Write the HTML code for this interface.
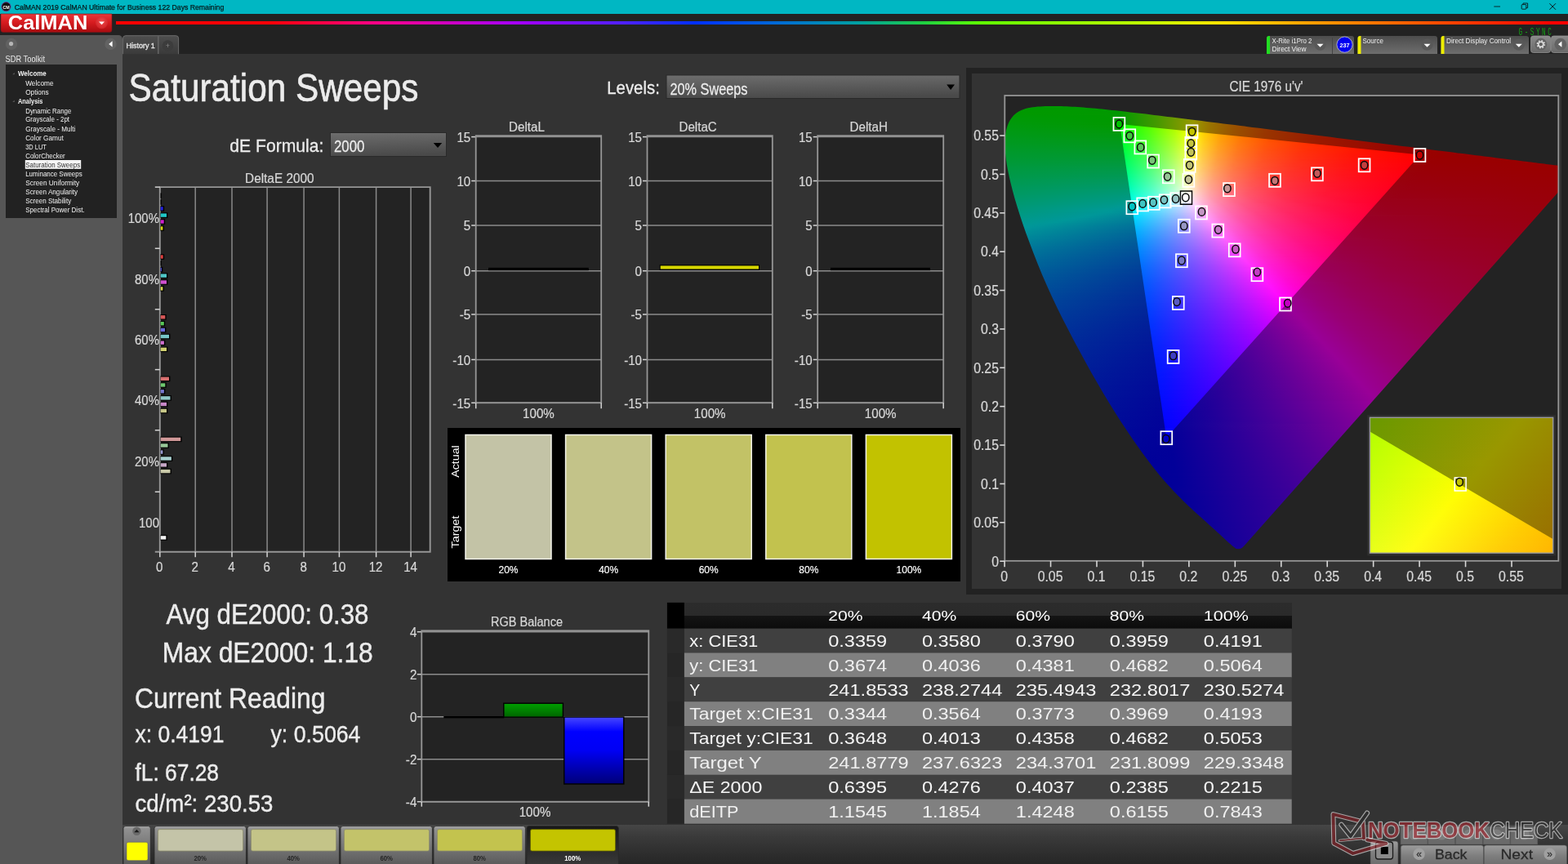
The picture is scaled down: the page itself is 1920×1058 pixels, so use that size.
<!DOCTYPE html>
<html lang="en"><head><meta charset="utf-8"><title>CalMAN 2019 - Saturation Sweeps</title>
<style>
html,body{margin:0;padding:0;background:#333;}
body{width:1920px;height:1058px;position:relative;overflow:hidden;font-family:"Liberation Sans",sans-serif;}
body>div{position:absolute;box-sizing:border-box;}
svg.ov{position:absolute;left:0;top:0;will-change:transform;font-family:"Liberation Sans",sans-serif;}
.cie{position:absolute;overflow:hidden;}
.cie i{display:block;height:2px;width:100%;}

</style></head>
<body>
<div style="left:0px;top:0px;width:1920px;height:17px;background:#00b7c3;"></div>
<div style="left:0px;top:17px;width:1920px;height:49px;background:#222;"></div>
<div style="left:150px;top:66px;width:1770px;height:944px;background:#333;"></div>
<div style="left:142.2px;top:26.2px;width:1790px;height:4.3px;background:linear-gradient(90deg,#ff0000 0,#ff0008 190px,#ff0080 310px,#a000ff 500px,#5020ff 620px,#0030ff 710px,#0070d0 820px,#00a0a0 910px,#20d040 990px,#60ff00 1060px,#c0ff00 1260px,#ffe000 1360px,#ffa000 1460px,#ff5000 1610px,#ff0000 1760px);"></div>
<div style="left:0;top:43px;width:150px;height:1015px;background:#565656;border-radius:0 5px 0 0;"></div>
<div style="left:1183px;top:83px;width:737px;height:645px;background:#222;"></div>
<div style="left:1190px;top:90px;width:721.5px;height:631.2px;background:#333;"></div>
<div style="left:1230.3px;top:117px;width:678px;height:569.8px;background:#232323;"></div>
<div class="cie" style="left:1230.3px;top:117px;width:678px;height:570px;clip-path:polygon(292.3px 552.3px,291.5px 553.1px,290.7px 553.8px,289.8px 554.3px,288.9px 554.7px,288.0px 555.0px,287.0px 555.1px,285.9px 555.2px,284.8px 555.1px,283.3px 554.9px,281.5px 553.6px,279.4px 551.9px,277.7px 550.5px,275.8px 548.8px,273.6px 546.9px,271.2px 544.7px,268.5px 542.2px,265.6px 539.5px,264.0px 538.0px,262.4px 536.5px,260.6px 534.9px,258.8px 533.3px,256.9px 531.6px,254.9px 529.7px,252.7px 527.8px,250.4px 525.7px,248.1px 523.6px,245.6px 521.3px,243.0px 519.0px,240.3px 516.6px,237.5px 514.1px,234.6px 511.5px,231.6px 508.7px,228.5px 505.8px,225.2px 502.7px,221.8px 499.4px,218.2px 496.0px,214.6px 492.3px,210.8px 488.5px,206.9px 484.4px,202.9px 480.1px,198.7px 475.5px,194.3px 470.5px,189.6px 464.9px,184.6px 458.8px,179.3px 451.9px,173.6px 444.5px,167.7px 436.4px,161.5px 427.8px,155.2px 418.7px,148.7px 409.1px,142.0px 399.0px,135.2px 388.3px,128.2px 377.1px,121.1px 365.3px,114.0px 353.1px,106.7px 340.4px,99.5px 327.4px,92.2px 314.1px,85.0px 300.7px,77.9px 287.1px,70.9px 273.4px,64.1px 259.7px,57.6px 246.0px,51.4px 232.3px,45.6px 219.0px,40.2px 205.8px,35.2px 193.0px,30.5px 180.5px,26.0px 168.5px,22.0px 156.9px,18.3px 145.8px,15.0px 135.2px,12.0px 125.3px,9.5px 116.0px,7.3px 107.2px,5.4px 99.0px,3.8px 91.4px,2.5px 84.2px,1.5px 77.5px,0.8px 71.4px,0.3px 65.7px,0.2px 60.4px,0.2px 55.5px,0.5px 50.9px,1.0px 46.6px,1.7px 42.6px,2.7px 38.9px,3.9px 35.5px,5.3px 32.3px,6.9px 29.5px,8.7px 26.9px,10.7px 24.6px,12.9px 22.6px,15.2px 20.8px,17.6px 19.3px,20.2px 18.0px,22.8px 16.9px,25.5px 16.0px,28.4px 15.2px,31.3px 14.7px,34.2px 14.2px,37.3px 13.9px,40.3px 13.6px,43.5px 13.4px,46.7px 13.2px,49.9px 13.1px,53.1px 13.0px,56.3px 13.0px,59.5px 13.0px,62.7px 13.0px,65.9px 13.0px,69.2px 13.1px,72.5px 13.2px,75.8px 13.3px,79.1px 13.5px,82.5px 13.7px,85.9px 13.8px,89.3px 14.1px,92.8px 14.3px,96.4px 14.6px,100.0px 14.9px,103.7px 15.2px,107.4px 15.5px,111.2px 15.8px,115.1px 16.2px,119.1px 16.6px,123.1px 17.0px,127.2px 17.4px,131.3px 17.9px,135.6px 18.3px,139.9px 18.8px,144.3px 19.3px,148.8px 19.8px,153.4px 20.4px,158.1px 20.9px,162.9px 21.5px,167.8px 22.0px,172.8px 22.6px,177.9px 23.3px,183.1px 23.9px,188.4px 24.5px,193.8px 25.2px,199.3px 25.9px,204.9px 26.5px,210.7px 27.3px,216.6px 28.0px,222.5px 28.7px,228.6px 29.5px,234.8px 30.3px,241.2px 31.0px,247.6px 31.9px,254.2px 32.7px,260.9px 33.5px,267.7px 34.4px,274.6px 35.2px,281.7px 36.1px,288.8px 37.0px,296.1px 37.9px,303.5px 38.9px,311.0px 39.8px,318.6px 40.8px,326.2px 41.7px,334.0px 42.7px,341.9px 43.7px,349.8px 44.7px,357.9px 45.7px,366.0px 46.7px,374.2px 47.7px,382.4px 48.8px,390.7px 49.8px,399.0px 50.8px,407.3px 51.9px,415.5px 52.9px,423.6px 53.9px,431.6px 54.9px,439.6px 55.9px,447.6px 56.9px,455.5px 57.9px,463.4px 58.9px,471.3px 59.9px,479.1px 60.9px,486.8px 61.9px,494.4px 62.8px,501.7px 63.7px,508.9px 64.6px,516.0px 65.5px,522.8px 66.4px,529.5px 67.2px,536.1px 68.0px,542.5px 68.8px,548.7px 69.6px,554.8px 70.4px,560.7px 71.1px,566.4px 71.8px,571.8px 72.5px,577.2px 73.2px,582.3px 73.8px,587.2px 74.4px,592.0px 75.0px,596.6px 75.6px,601.0px 76.2px,605.3px 76.7px,609.5px 77.2px,613.5px 77.7px,617.3px 78.2px,621.0px 78.7px,624.6px 79.1px,628.2px 79.6px,631.6px 80.0px,635.0px 80.4px,638.2px 80.8px,641.4px 81.2px,644.4px 81.6px,647.4px 82.0px,650.2px 82.3px,652.9px 82.7px,655.6px 83.0px,658.1px 83.3px,660.6px 83.6px,662.9px 83.9px,665.2px 84.2px,667.3px 84.5px,669.4px 84.7px,673.0px 85.2px,676.3px 85.6px,679.3px 86.0px,682.0px 86.3px,684.5px 86.6px,686.7px 86.9px,689.5px 87.3px,691.6px 87.5px,693.9px 87.8px,696.0px 88.1px,698.1px 88.4px,700.2px 88.6px,702.2px 88.9px,703.7px 89.1px)"><i></i><i></i><i></i><i></i><i></i><i></i><i style="background:linear-gradient(90deg,#090 33.7px,#090 90.7px)"></i><i style="background:linear-gradient(90deg,#090 22.7px,#090 115.7px)"></i><i style="background:linear-gradient(90deg,#090 17.7px,#090 134.7px)"></i><i style="background:linear-gradient(90deg,#090 13.7px,#019900 139.7px,#139900 152.7px)"></i><i style="background:linear-gradient(90deg,#090 10.7px,#019900 139.7px,#2a9900 169.7px)"></i><i style="background:linear-gradient(90deg,#009901 8.7px,#029900 140.7px,#459900 186.7px)"></i><i style="background:linear-gradient(90deg,#009903 6.7px,#090 111.7px,#029900 140.7px,#459900 186.7px,#609900 202.7px)"></i><i style="background:linear-gradient(90deg,#009905 5.7px,#090 102.7px,#019900 140.7px,#439900 185.7px,#819900 219.7px)"></i><i style="background:linear-gradient(90deg,#009907 3.7px,#090 115.7px,#019900 140.7px,#439900 185.7px,#899900 223.7px,#999800 231.7px,#999000 235.7px)"></i><i style="background:linear-gradient(90deg,#009908 2.7px,#090 131.7px,#029900 141.7px,#490 186.7px,#8b9900 224.7px,#999800 231.7px,#997500 251.7px)"></i><i style="background:linear-gradient(90deg,#00990a 1.7px,#019900 141.7px,#490 186.7px,#8c9900 224.7px,#999700 231.7px,#997300 252.7px,#996000 267.7px)"></i><i style="background:linear-gradient(90deg,#00990c 1.7px,#019900 141.7px,#439900 185.7px,#890 222.7px,#999700 231.7px,#997200 252.7px,#995100 282.7px)"></i><i style="background:linear-gradient(90deg,#00990e 0.7px,#029902 142.7px,#490 186.7px,#8a9900 223.7px,#999700 231.7px,#997200 252.7px,#995000 282.7px,#940 298.7px)"></i><i style="background:linear-gradient(90deg,#00990f 0px,#029904 143px,#459900 187px,#8b9900 224px,#999800 231px,#997300 252px,#995200 281px,#993900 315px)"></i><i style="background:linear-gradient(90deg,#091 0px,#029907 143px,#449902 187px,#8b9900 224px,#999700 231px,#997200 252px,#995100 281px,#993400 324px,#993000 331px)"></i><i style="background:linear-gradient(90deg,#009913 0px,#019909 143px,#449904 187px,#8c9900 224px,#999700 231px,#997200 252px,#995100 281px,#930 324px,#992900 347px)"></i><i style="background:linear-gradient(90deg,#009915 0px,#01990b 143px,#439907 186px,#889902 222px,#999701 231px,#997100 252px,#995000 281px,#930 324px,#920 363px)"></i><i style="background:linear-gradient(90deg,#009916 0px,#02990e 144px,#44990a 187px,#8a9905 223px,#999904 230px,#997401 250px,#995300 278px,#993500 319px,#991d00 379px)"></i><i style="background:linear-gradient(90deg,#009918 0px,#019910 144px,#44990c 187px,#8a9908 223px,#999807 230px,#997303 250px,#995200 278px,#993500 319px,#991b00 382px,#991800 395px)"></i><i style="background:linear-gradient(90deg,#00991a 0px,#019912 144px,#44990f 187px,#8b990b 223px,#99980a 230px,#997306 250px,#995202 278px,#993500 319px,#991b00 383px,#991300 411px)"></i><i style="background:linear-gradient(90deg,#00991c 0px,#029915 145px,#449912 187px,#8b990e 223px,#99970d 230px,#997308 250px,#995204 278px,#993400 319px,#991a00 383px,#990f00 427px)"></i><i style="background:linear-gradient(90deg,#00991e 0px,#029917 145px,#449914 187px,#899911 222px,#999710 230px,#99720b 250px,#995106 278px,#993401 319px,#991a00 383px,#990c00 443px)"></i><i style="background:linear-gradient(90deg,#00991f 0px,#01991a 145px,#449917 187px,#899915 222px,#999714 230px,#99720d 250px,#995108 278px,#993303 319px,#991a00 383px,#990900 459px)"></i><i style="background:linear-gradient(90deg,#009921 0px,#01991c 145px,#44991a 187px,#8a9918 222px,#999817 229px,#997310 249px,#99510a 277px,#993404 318px,#991a00 381px,#990600 475px)"></i><i style="background:linear-gradient(90deg,#009923 0px,#02991f 146px,#43991d 187px,#8a991b 222px,#99981a 229px,#997213 249px,#99510c 277px,#993306 318px,#991a01 381px,#990400 486px,#990400 491px)"></i><i style="background:linear-gradient(90deg,#009925 0px,#019921 146px,#439920 187px,#8a991e 222px,#99981d 229px,#997316 248px,#99520e 275px,#993508 315px,#991b02 376px,#990500 478px,#990100 507px)"></i><i style="background:linear-gradient(90deg,#009927 0px,#019924 146px,#439923 187px,#889921 221px,#999721 229px,#997318 248px,#995210 275px,#993409 315px,#991b03 376px,#990500 478px,#900 523px)"></i><i style="background:linear-gradient(90deg,#009929 0px,#029927 147px,#459926 188px,#8b9925 222px,#999724 229px,#99731b 248px,#995112 275px,#99340b 315px,#991a04 376px,#990500 478px,#900 539px)"></i><i style="background:linear-gradient(90deg,#00992b 0px,#029929 147px,#439929 187px,#899928 221px,#999928 228px,#99741e 247px,#995215 274px,#99350d 313px,#991b06 373px,#990500 473px,#900 536px,#900 555px)"></i><i style="background:linear-gradient(90deg,#00992d 0px,#01992c 147px,#43992c 187px,#89992b 221px,#99982b 228px,#997321 247px,#995217 274px,#99340e 313px,#991b07 373px,#990501 473px,#900 534px,#900 571px)"></i><i style="background:linear-gradient(90deg,#00992f 0px,#01992f 147px,#43992f 187px,#89992f 221px,#99982f 228px,#997323 247px,#995219 273px,#993410 312px,#991b08 372px,#990502 472px,#900 533px,#900 587px)"></i><i style="background:linear-gradient(90deg,#009930 0px,#029931 148px,#459932 188px,#8a9932 221px,#999732 228px,#997226 247px,#99521b 273px,#993412 312px,#991a09 372px,#990502 472px,#900 532px,#900 602px)"></i><i style="background:linear-gradient(90deg,#009932 0px,#019934 148px,#449935 188px,#999735 228px,#997229 247px,#99511d 273px,#993413 312px,#991a0b 372px,#990403 472px,#990001 532px,#900 618px)"></i><i style="background:linear-gradient(90deg,#009934 0px,#019937 148px,#429938 187px,#889939 220px,#99993a 227px,#99732c 246px,#995220 272px,#993415 310px,#991b0c 369px,#990504 467px,#990002 527px,#900 634px)"></i><i style="background:linear-gradient(90deg,#009936 0px,#02993a 149px,#44993b 188px,#8b993d 221px,#99993d 227px,#99742f 245px,#995323 270px,#993618 307px,#991c0e 364px,#990606 459px,#990002 522px,#900 650px)"></i><i style="background:linear-gradient(90deg,#009938 0px,#01993d 149px,#44993f 188px,#8b9941 221px,#999841 227px,#997432 245px,#995325 270px,#993519 307px,#991c0f 364px,#990606 459px,#990003 521px,#900 666px)"></i><i style="background:linear-gradient(90deg,#00993a 0px,#019940 149px,#449942 188px,#899944 220px,#999844 227px,#997335 245px,#995327 270px,#99351b 307px,#991b10 364px,#990507 459px,#990004 520px,#900 678px)"></i><i style="background:linear-gradient(90deg,#00993d 0.7px,#029943 149.7px,#439945 187.7px,#899948 219.7px,#999848 226.7px,#997338 244.7px,#99522a 269.7px,#99351d 306.7px,#991b12 363.7px,#990508 458.7px,#990005 517.7px,#900 677.7px)"></i><i style="background:linear-gradient(90deg,#00993f 0.7px,#019946 149.7px,#439949 187.7px,#89994c 219.7px,#99984c 226.7px,#99733b 244.7px,#99522c 269.7px,#99341f 306.7px,#991b13 363.7px,#990509 458.7px,#990006 516.7px,#900 677.7px)"></i><i style="background:linear-gradient(90deg,#009941 0.7px,#019949 149.7px,#43994c 187.7px,#89994f 219.7px,#99974f 226.7px,#99723e 244.7px,#99522e 269.7px,#993420 306.7px,#991a14 363.7px,#99050a 458.7px,#990006 515.7px,#900 677.7px)"></i><i style="background:linear-gradient(90deg,#009943 1.7px,#02994c 150.7px,#45994f 188.7px,#8c9953 220.7px,#999753 226.7px,#997241 244.7px,#995131 269.7px,#993422 306.7px,#991a15 363.7px,#99050b 458.7px,#990007 515.7px,#990001 677.7px)"></i><i style="background:linear-gradient(90deg,#009945 1.7px,#01994f 150.7px,#439953 187.7px,#8a9957 219.7px,#999958 225.7px,#997546 242.7px,#995435 266.7px,#993625 301.7px,#991c18 355.7px,#99060d 445.7px,#990008 507.7px,#990001 677.7px)"></i><i style="background:linear-gradient(90deg,#009947 2.7px,#019952 150.7px,#439956 187.7px,#88995b 218.7px,#99985c 225.7px,#997449 242.7px,#995337 266.7px,#993627 301.7px,#991c19 355.7px,#99060e 445.7px,#990009 505.7px,#990002 677.7px)"></i><i style="background:linear-gradient(90deg,#009949 2.7px,#095 150.7px,#43995a 187.7px,#88995f 218.7px,#999860 225.7px,#99744c 242.7px,#995339 266.7px,#993529 301.7px,#991c1b 355.7px,#99060e 445.7px,#99000a 504.7px,#990002 677.7px)"></i><i style="background:linear-gradient(90deg,#00994b 2.7px,#029958 151.7px,#44995e 188.7px,#8b9963 219.7px,#999864 225.7px,#99734f 242.7px,#99523c 266.7px,#99352b 301.7px,#991b1c 355.7px,#99060f 445.7px,#99000b 503.7px,#990003 677.7px)"></i><i style="background:linear-gradient(90deg,#00994e 3.7px,#01995c 151.7px,#449961 188.7px,#8b9967 219.7px,#999767 225.7px,#997352 242.7px,#99523e 266.7px,#99352d 301.7px,#991b1d 355.7px,#990510 445.7px,#99000b 502.7px,#990003 677.7px)"></i><i style="background:linear-gradient(90deg,#009950 3.7px,#01995f 151.7px,#429965 187.7px,#89996b 218.7px,#99996d 224.7px,#997255 242.7px,#995140 266.7px,#99342e 301.7px,#991b1f 355.7px,#990511 445.7px,#99000c 501.7px,#990004 677.7px)"></i><i style="background:linear-gradient(90deg,#009952 4.7px,#029962 152.7px,#449969 188.7px,#899970 218.7px,#999971 224.7px,#997459 241.7px,#995244 265.7px,#993431 300.7px,#991b20 354.7px,#990512 444.7px,#99000d 499.7px,#990004 677.7px)"></i><i style="background:linear-gradient(90deg,#009954 4.7px,#019966 152.7px,#44996d 188.7px,#8a9974 218.7px,#999875 224.7px,#99735c 241.7px,#995246 265.7px,#993432 300.7px,#991a21 354.7px,#990513 444.7px,#99000e 498.7px,#990005 677.7px)"></i><i style="background:linear-gradient(90deg,#009957 5.7px,#019969 152.7px,#449970 188.7px,#8a9978 218.7px,#999879 224.7px,#997360 241.7px,#995149 265.7px,#993434 300.7px,#991a23 354.7px,#990414 444.7px,#99000f 498.7px,#990005 677.7px)"></i><i style="background:linear-gradient(90deg,#009959 5.7px,#00996c 152.7px,#429974 187.7px,#88997c 217.7px,#99977d 224.7px,#997263 241.7px,#99514b 265.7px,#993336 300.7px,#991a24 354.7px,#990415 444.7px,#990010 497.7px,#990006 677.7px)"></i><i style="background:linear-gradient(90deg,#00995b 6.7px,#029970 153.7px,#449978 188.7px,#889981 217.7px,#999781 224.7px,#997266 241.7px,#99504e 265.7px,#993338 300.7px,#991926 354.7px,#990416 444.7px,#990010 497.7px,#990006 677.7px)"></i><i style="background:linear-gradient(90deg,#00995e 6.7px,#009973 150.7px,#049974 155.7px,#48997d 190.7px,#8e9986 219.7px,#999987 223.7px,#99736b 240.7px,#995252 263.7px,#99343b 297.7px,#991b28 349.7px,#990518 436.7px,#990012 489.7px,#990007 677.7px)"></i><i style="background:linear-gradient(90deg,#009960 7.7px,#009976 147.7px,#029977 154.7px,#459981 189.7px,#8c998a 218.7px,#99998c 223.7px,#997470 239.7px,#995355 262.7px,#99353e 295.7px,#991b2a 346.7px,#990619 431.7px,#990013 486.7px,#990007 677.7px)"></i><i style="background:linear-gradient(90deg,#009962 7.7px,#009979 144.7px,#02997b 154.7px,#439984 188.7px,#89998f 217.7px,#999890 223.7px,#997473 239.7px,#995258 262.7px,#993540 295.7px,#991b2c 346.7px,#99051a 431.7px,#990014 485.7px,#990008 677.7px)"></i><i style="background:linear-gradient(90deg,#009965 8.7px,#00997c 142.7px,#01997f 154.7px,#439989 188.7px,#8a9993 217.7px,#999895 223.7px,#997376 239.7px,#99515b 262.7px,#993442 295.7px,#991b2d 346.7px,#99051b 431.7px,#990015 484.7px,#990008 676.7px)"></i><i style="background:linear-gradient(90deg,#009967 8.7px,#00997e 139.7px,#019982 154.7px,#43998d 188.7px,#8a9998 217.7px,#999799 223.7px,#99737a 239.7px,#99525e 261.7px,#993445 294.7px,#991b2f 345.7px,#99051c 430.7px,#990016 482.7px,#990009 674.7px)"></i><i style="background:linear-gradient(90deg,#00996a 9.7px,#009981 137.7px,#029986 155.7px,#459991 189.7px,#809699 214.7px,#999199 225.7px,#996d79 242.7px,#994c5c 266.7px,#992f43 301.7px,#99172d 356.7px,#99021b 449.7px,#99000b 643.7px,#990009 673.7px)"></i><i style="background:linear-gradient(90deg,#00996c 10.7px,#009984 135.7px,#01998a 155.7px,#439995 188.7px,#6d9599 207.7px,#998c98 227.7px,#996979 244.7px,#99485c 269.7px,#992c42 306.7px,#99142c 364.7px,#99001a 459.7px,#99000a 661.7px,#99000a 671.7px)"></i><i style="background:linear-gradient(90deg,#00996f 10.7px,#009987 133.7px,#01998e 155.7px,#4a9799 192.7px,#998698 229.7px,#996378 247.7px,#99445b 273.7px,#992841 312.7px,#99102b 374.7px,#99001b 462.7px,#99000b 664.7px,#99000b 669.7px)"></i><i style="background:linear-gradient(90deg,#009971 11.7px,#00998a 131.7px,#009992 155.7px,#349699 182.7px,#998198 231.7px,#995e77 250.7px,#99405a 277.7px,#992540 318.7px,#990d2a 384.7px,#99001b 464.7px,#99000b 665.7px,#99000b 667.7px)"></i><i style="background:linear-gradient(90deg,#009974 11.7px,#00998d 129.7px,#029996 156.7px,#2d9399 179.7px,#997c97 233.7px,#995a76 253.7px,#993b58 282.7px,#99213e 326.7px,#990a27 398.7px,#99001c 465.7px,#99000c 664.7px,#99000c 666.7px)"></i><i style="background:linear-gradient(90deg,#097 12.7px,#009990 127.7px,#019899 156.7px,#7a8099 219.7px,#997797 235.7px,#995676 255.7px,#993858 285.7px,#991e3e 330.7px,#990827 404.7px,#99001d 465.7px,#99000d 661.7px,#99000c 664.7px)"></i><i style="background:linear-gradient(90deg,#009979 13.7px,#009994 126.7px,#009699 150.7px,#029499 157.7px,#7b7b99 221.7px,#997599 236.7px,#995376 257.7px,#993658 287.7px,#991d3e 333.7px,#990728 408.7px,#99001e 464.7px,#99000d 656.7px,#99000d 662.7px)"></i><i style="background:linear-gradient(90deg,#00997c 13.7px,#009997 124.7px,#029099 157.7px,#7a7799 222.7px,#997098 238.7px,#995077 259.7px,#993459 289.7px,#991c3f 335.7px,#990628 411.7px,#99001f 463.7px,#99000e 651.7px,#99000e 660.7px)"></i><i style="background:linear-gradient(90deg,#00997f 14.7px,#009799 126.7px,#018c99 157.7px,#797499 223.7px,#996c98 240.7px,#994d77 261.7px,#993259 292.7px,#991a3e 339.7px,#990528 416.7px,#990020 465.7px,#99000f 652.7px,#99000e 658.7px)"></i><i style="background:linear-gradient(90deg,#009982 15.7px,#009799 115.7px,#018999 157.7px,#787099 224.7px,#996898 242.7px,#994a76 264.7px,#992f58 296.7px,#99173e 345.7px,#990327 425.7px,#99001e 480.7px,#99000f 657.7px)"></i><i style="background:linear-gradient(90deg,#009984 15.7px,#009799 104.7px,#028599 158.7px,#7a6c99 227.7px,#996498 244.7px,#994776 266.7px,#992d58 298.7px,#99163e 347.7px,#990228 428.7px,#990015 574.7px,#990010 655.7px)"></i><i style="background:linear-gradient(90deg,#009987 16.7px,#009799 94.7px,#018299 158.7px,#796899 228.7px,#996097 246.7px,#994375 269.7px,#992a58 302.7px,#99133d 353.7px,#990027 437.7px,#990015 589.7px,#990010 653.7px)"></i><i style="background:linear-gradient(90deg,#00998a 17.7px,#009799 83.7px,#017f99 158.7px,#786599 229.7px,#995c97 248.7px,#994176 271.7px,#992858 305.7px,#99123d 357.7px,#990027 442.7px,#990015 597.7px,#901 651.7px)"></i><i style="background:linear-gradient(90deg,#00998d 17.7px,#009799 73.7px,#027c99 159.7px,#796299 231.7px,#995a99 249.7px,#993f77 272.7px,#992759 306.7px,#99113e 358.7px,#990028 441.7px,#990015 593.7px,#901 650.7px)"></i><i style="background:linear-gradient(90deg,#009990 18.7px,#009799 62.7px,#027999 159.7px,#7a5e99 233.7px,#995798 251.7px,#993c76 275.7px,#992458 310.7px,#990f3e 363.7px,#990029 442.7px,#990016 593.7px,#990012 648.7px)"></i><i style="background:linear-gradient(90deg,#009993 19.7px,#009699 53.7px,#017699 159.7px,#795b99 234.7px,#995498 253.7px,#993a77 277.7px,#992359 312.7px,#990e3e 366.7px,#99002a 441.7px,#990017 589.7px,#990013 646.7px)"></i><i style="background:linear-gradient(90deg,#009996 19.7px,#009499 49.7px,#017399 159.7px,#785999 235.7px,#995098 255.7px,#993776 280.7px,#992058 316.7px,#990c3e 371.7px,#99002b 441.7px,#990018 587.7px,#990013 644.7px)"></i><i style="background:linear-gradient(90deg,#099 20.7px,#027099 160.7px,#795699 237.7px,#994d97 257.7px,#993576 282.7px,#991e58 319.7px,#990b3d 375.7px,#99002c 440.7px,#990019 583.7px,#990014 642.7px)"></i><i style="background:linear-gradient(90deg,#009699 21.7px,#016e99 160.7px,#7a5399 239.7px,#994a97 259.7px,#993275 285.7px,#991c57 323.7px,#99093d 381.7px,#99002d 439.7px,#99001a 580.7px,#990015 641.7px)"></i><i style="background:linear-gradient(90deg,#009399 21.7px,#016b99 160.7px,#795099 240.7px,#994797 261.7px,#993075 287.7px,#991b57 325.7px,#99083d 383.7px,#99002f 438.7px,#99001b 576.7px,#990015 639.7px)"></i><i style="background:linear-gradient(90deg,#009099 22.7px,#026999 161.7px,#794d99 242.7px,#994698 262.7px,#992f77 288.7px,#991a59 326.7px,#99083e 384.7px,#990030 437.7px,#99001c 572.7px,#990016 637.7px)"></i><i style="background:linear-gradient(90deg,#008e99 23.7px,#016699 161.7px,#794b99 243.7px,#994398 264.7px,#992c76 291.7px,#991858 330.7px,#99063d 390.7px,#990031 437.7px,#99001d 571.7px,#990017 635.7px)"></i><i style="background:linear-gradient(90deg,#008b99 23.7px,#016499 161.7px,#794899 245.7px,#994098 266.7px,#992a76 293.7px,#991758 332.7px,#99053e 392.7px,#990032 437.7px,#99001d 569.7px,#990018 634.7px)"></i><i style="background:linear-gradient(90deg,#089 24.7px,#026299 162.7px,#7a4699 247.7px,#993e98 268.7px,#992876 296.7px,#991558 336.7px,#99043d 398.7px,#990032 441.7px,#99001d 575.7px,#990018 632.7px)"></i><i style="background:linear-gradient(90deg,#008699 25.7px,#016099 162.7px,#794499 248.7px,#993b97 270.7px,#992676 298.7px,#991358 339.7px,#99033d 402.7px,#99002e 465.7px,#99001a 617.7px,#990019 630.7px)"></i><i style="background:linear-gradient(90deg,#008399 26.7px,#015e99 162.7px,#784199 249.7px,#993997 272.7px,#992475 301.7px,#991157 343.7px,#99013d 407.7px,#990026 513.7px,#99001a 628.7px)"></i><i style="background:linear-gradient(90deg,#008199 26.7px,#025b99 163.7px,#793f99 251.7px,#993697 274.7px,#992275 303.7px,#991057 345.7px,#99003d 410.7px,#990027 517.7px,#99001a 626.7px)"></i><i style="background:linear-gradient(90deg,#007e99 27.7px,#015999 163.7px,#7a3d99 253.7px,#993497 276.7px,#992075 306.7px,#990f57 349.7px,#99003d 415.7px,#990026 524.7px,#99001b 625.7px)"></i><i style="background:linear-gradient(90deg,#007c99 28.7px,#015899 163.7px,#793b99 254.7px,#993398 277.7px,#991f76 307.7px,#990e58 350.7px,#99003d 416.7px,#990027 524.7px,#99001c 623.7px)"></i><i style="background:linear-gradient(90deg,#007999 29.7px,#025599 164.7px,#7a3999 256.7px,#993198 279.7px,#991e76 309.7px,#990d58 353.7px,#99003f 416.7px,#990028 523.7px,#99001d 621.7px)"></i><i style="background:linear-gradient(90deg,#079 29.7px,#025499 164.7px,#793799 257.7px,#992e98 281.7px,#991c75 312.7px,#990b57 357.7px,#990040 416.7px,#990029 522.7px,#99001d 619.7px)"></i><i style="background:linear-gradient(90deg,#007599 30.7px,#015299 164.7px,#7a3599 259.7px,#992c97 283.7px,#991a76 314.7px,#990a58 359.7px,#990041 414.7px,#99002a 518.7px,#99001e 618.7px)"></i><i style="background:linear-gradient(90deg,#007399 31.7px,#025099 165.7px,#7a3399 261.7px,#992a97 285.7px,#991875 317.7px,#990957 363.7px,#990043 413.7px,#99002c 515.7px,#99001f 616.7px)"></i><i style="background:linear-gradient(90deg,#007199 32.7px,#024e99 165.7px,#793199 262.7px,#992897 287.7px,#991775 319.7px,#990757 366.7px,#904 412.7px,#99002d 512.7px,#990020 614.7px)"></i><i style="background:linear-gradient(90deg,#006f99 32.7px,#014d99 165.7px,#793099 263.7px,#992797 289.7px,#991675 321.7px,#990757 368.7px,#990046 411.7px,#99002e 510.7px,#990020 612.7px)"></i><i style="background:linear-gradient(90deg,#006d99 33.7px,#024b99 166.7px,#7b2d99 266.7px,#992598 290.7px,#991476 323.7px,#990658 370.7px,#990047 410.7px,#99002f 507.7px,#990021 610.7px)"></i><i style="background:linear-gradient(90deg,#006b99 34.7px,#024999 166.7px,#7a2c99 267.7px,#992498 292.7px,#991376 325.7px,#990558 373.7px,#990048 412.7px,#990030 509.7px,#902 609.7px)"></i><i style="background:linear-gradient(90deg,#006999 35.7px,#014899 166.7px,#792a99 268.7px,#992298 294.7px,#991276 327.7px,#990458 375.7px,#990049 413.7px,#990030 510.7px,#990023 607.7px)"></i><i style="background:linear-gradient(90deg,#006799 36.7px,#014799 166.7px,#792999 269.7px,#992097 296.7px,#991075 330.7px,#990257 379.7px,#990041 441.7px,#99002a 556.7px,#990024 605.7px)"></i><i style="background:linear-gradient(90deg,#006599 36.7px,#024599 167.7px,#792799 271.7px,#991e97 298.7px,#990f76 332.7px,#990157 382.7px,#99003d 458.7px,#990027 583.7px,#990025 603.7px)"></i><i style="background:linear-gradient(90deg,#006499 37.7px,#014499 167.7px,#7a2599 273.7px,#991d97 300.7px,#990e75 335.7px,#990057 386.7px,#99003d 464.7px,#990026 592.7px,#990025 602.7px)"></i><i style="background:linear-gradient(90deg,#006299 38.7px,#014299 167.7px,#792499 274.7px,#991b97 302.7px,#990d75 337.7px,#990057 388.7px,#99003d 466.7px,#990027 595.7px,#990026 600.7px)"></i><i style="background:linear-gradient(90deg,#006099 39.7px,#024199 168.7px,#7a2299 276.7px,#991a98 303.7px,#990c76 338.7px,#990058 389.7px,#99003e 467.7px,#990027 595.7px,#990027 598.7px)"></i><i style="background:linear-gradient(90deg,#005e99 40.7px,#013f99 168.7px,#792199 277.7px,#991998 305.7px,#990a76 341.7px,#990058 391.7px,#99003e 470.7px,#990028 596.7px)"></i><i style="background:linear-gradient(90deg,#005d99 40.7px,#013e99 168.7px,#792099 279.7px,#991798 307.7px,#990976 343.7px,#99005a 390.7px,#990040 467.7px,#990029 593.7px,#990029 595.7px)"></i><i style="background:linear-gradient(90deg,#005b99 41.7px,#023d99 169.7px,#7a1e99 281.7px,#991697 309.7px,#990875 346.7px,#99005c 389.7px,#990041 465.7px,#99002a 588.7px,#99002a 593.7px)"></i><i style="background:linear-gradient(90deg,#005999 42.7px,#023b99 169.7px,#791d99 282.7px,#991497 311.7px,#990775 348.7px,#99005e 388.7px,#990043 463.7px,#99002b 584.7px,#99002a 591.7px)"></i><i style="background:linear-gradient(90deg,#005899 43.7px,#013a99 169.7px,#791c99 283.7px,#991397 313.7px,#990675 351.7px,#990060 387.7px,#904 461.7px,#99002d 580.7px,#99002b 589.7px)"></i><i style="background:linear-gradient(90deg,#005699 44.7px,#023999 170.7px,#7a1a99 286.7px,#991197 315.7px,#990575 353.7px,#990061 387.7px,#990045 460.7px,#99002e 577.7px,#99002c 587.7px)"></i><i style="background:linear-gradient(90deg,#059 45.7px,#023899 170.7px,#7a1999 287.7px,#991198 316.7px,#990476 354.7px,#990062 388.7px,#990046 461.7px,#99002e 578.7px,#99002d 586.7px)"></i><i style="background:linear-gradient(90deg,#005399 45.7px,#013799 170.7px,#791899 288.7px,#990f98 318.7px,#990376 357.7px,#99005e 398.7px,#990043 476.7px,#99002e 584.7px)"></i><i style="background:linear-gradient(90deg,#005299 46.7px,#023599 171.7px,#7a1799 290.7px,#990e98 320.7px,#990276 359.7px,#990057 416.7px,#99003d 503.7px,#99002f 582.7px)"></i><i style="background:linear-gradient(90deg,#005099 47.7px,#023499 171.7px,#7a1599 292.7px,#990d97 322.7px,#990175 362.7px,#990057 420.7px,#99003d 509.7px,#990030 580.7px)"></i><i style="background:linear-gradient(90deg,#004f99 48.7px,#013399 171.7px,#7a1499 293.7px,#990b97 324.7px,#990075 364.7px,#990057 422.7px,#99003d 511.7px,#990031 579.7px)"></i><i style="background:linear-gradient(90deg,#004e99 49.7px,#023299 172.7px,#7a1399 295.7px,#990a97 326.7px,#990075 367.7px,#990057 426.7px,#99003d 517.7px,#990032 577.7px)"></i><i style="background:linear-gradient(90deg,#004c99 50.7px,#023199 172.7px,#791299 296.7px,#990997 328.7px,#990075 369.7px,#990057 429.7px,#99003d 521.7px,#903 575.7px)"></i><i style="background:linear-gradient(90deg,#004b99 51.7px,#013099 172.7px,#7a1199 298.7px,#990898 329.7px,#907 368.7px,#990059 427.7px,#99003e 517.7px,#990034 573.7px)"></i><i style="background:linear-gradient(90deg,#004a99 52.7px,#022f99 173.7px,#7a1099 300.7px,#990798 331.7px,#990079 367.7px,#99005b 425.7px,#990040 513.7px,#990035 571.7px)"></i><i style="background:linear-gradient(90deg,#004899 53.7px,#022e99 173.7px,#7a0f99 301.7px,#990697 333.7px,#99007c 366.7px,#99005d 423.7px,#990042 509.7px,#990036 570.7px)"></i><i style="background:linear-gradient(90deg,#004799 53.7px,#012d99 173.7px,#790e99 302.7px,#990597 335.7px,#99007d 366.7px,#99005e 422.7px,#990043 507.7px,#990037 568.7px)"></i><i style="background:linear-gradient(90deg,#004699 54.7px,#022c99 174.7px,#7a0d99 304.7px,#990497 337.7px,#99007d 368.7px,#99005e 425.7px,#990043 511.7px,#990038 566.7px)"></i><i style="background:linear-gradient(90deg,#004599 55.7px,#022b99 174.7px,#7a0c99 306.7px,#990397 339.7px,#990079 376.7px,#99005b 436.7px,#990040 527.7px,#990039 564.7px)"></i><i style="background:linear-gradient(90deg,#004399 56.7px,#012a99 174.7px,#7a0b99 307.7px,#990297 341.7px,#990075 385.7px,#990057 449.7px,#99003d 547.7px,#99003a 563.7px)"></i><i style="background:linear-gradient(90deg,#004299 57.7px,#012a99 174.7px,#790a99 308.7px,#990198 342.7px,#990076 386.7px,#990058 450.7px,#99003d 548.7px,#99003b 561.7px)"></i><i style="background:linear-gradient(90deg,#004199 58.7px,#022999 175.7px,#7a0999 310.7px,#990098 344.7px,#990076 388.7px,#990058 452.7px,#99003e 550.7px,#99003c 559.7px)"></i><i style="background:linear-gradient(90deg,#004099 59.7px,#022899 175.7px,#7a0899 312.7px,#990097 346.7px,#990075 391.7px,#990057 456.7px,#99003d 556.7px,#99003d 557.7px)"></i><i style="background:linear-gradient(90deg,#003f99 60.7px,#012799 175.7px,#7a0799 313.7px,#990097 348.7px,#990076 393.7px,#990057 459.7px,#99003e 555.7px)"></i><i style="background:linear-gradient(90deg,#003e99 61.7px,#022699 176.7px,#7a0699 315.7px,#990097 350.7px,#990075 396.7px,#990057 463.7px,#99003f 554.7px)"></i><i style="background:linear-gradient(90deg,#003c99 62.7px,#022599 176.7px,#790599 316.7px,#909 350.7px,#990076 396.7px,#990058 462.7px,#990040 552.7px)"></i><i style="background:linear-gradient(90deg,#003b99 63.7px,#012599 176.7px,#7a0499 318.7px,#980099 351.7px,#990074 402.7px,#990056 471.7px,#990041 550.7px)"></i><i style="background:linear-gradient(90deg,#003a99 64.7px,#022499 177.7px,#7a0399 320.7px,#990098 355.7px,#990076 402.7px,#990057 470.7px,#990042 548.7px)"></i><i style="background:linear-gradient(90deg,#003999 65.7px,#022399 177.7px,#7a0399 321.7px,#990098 357.7px,#990076 404.7px,#990057 473.7px,#990043 547.7px)"></i><i style="background:linear-gradient(90deg,#003899 66.7px,#012299 177.7px,#790299 322.7px,#990097 359.7px,#990075 407.7px,#990057 477.7px,#990045 545.7px)"></i><i style="background:linear-gradient(90deg,#003799 67.7px,#022199 178.7px,#7a0199 324.7px,#990097 361.7px,#990075 409.7px,#990057 479.7px,#990046 543.7px)"></i><i style="background:linear-gradient(90deg,#003699 68.7px,#022199 178.7px,#7a0099 326.7px,#990097 363.7px,#990075 412.7px,#990057 483.7px,#990047 541.7px)"></i><i style="background:linear-gradient(90deg,#003599 69.7px,#012099 178.7px,#7a0099 327.7px,#990097 365.7px,#990075 414.7px,#990057 485.7px,#990048 539.7px)"></i><i style="background:linear-gradient(90deg,#003499 70.7px,#021f99 179.7px,#7a0099 329.7px,#990097 367.7px,#990075 417.7px,#990057 489.7px,#990049 538.7px)"></i><i style="background:linear-gradient(90deg,#039 71.7px,#021e99 179.7px,#7a0099 330.7px,#990098 368.7px,#990075 418.7px,#990057 490.7px,#99004b 536.7px)"></i><i style="background:linear-gradient(90deg,#003299 72.7px,#011e99 179.7px,#709 329.7px,#990098 370.7px,#990076 420.7px,#990057 493.7px,#99004c 534.7px)"></i><i style="background:linear-gradient(90deg,#003199 73.7px,#021d99 180.7px,#740099 327.7px,#990097 372.7px,#990075 423.7px,#990057 497.7px,#99004d 532.7px)"></i><i style="background:linear-gradient(90deg,#003099 74.7px,#021c99 180.7px,#720099 326.7px,#990097 374.7px,#990075 425.7px,#990057 499.7px,#99004e 531.7px)"></i><i style="background:linear-gradient(90deg,#003099 75.7px,#021c99 180.7px,#700099 324.7px,#990097 376.7px,#990075 428.7px,#990057 503.7px,#990050 529.7px)"></i><i style="background:linear-gradient(90deg,#002f99 76.7px,#021b99 181.7px,#6d0099 322.7px,#990097 378.7px,#990075 430.7px,#990057 506.7px,#990051 527.7px)"></i><i style="background:linear-gradient(90deg,#002e99 77.7px,#021a99 181.7px,#6a0099 320.7px,#990097 380.7px,#990075 433.7px,#990057 510.7px,#990052 525.7px)"></i><i style="background:linear-gradient(90deg,#002d99 78.7px,#021a99 181.7px,#680099 319.7px,#990098 381.7px,#990075 434.7px,#990057 511.7px,#990054 523.7px)"></i><i style="background:linear-gradient(90deg,#002c99 79.7px,#021999 182.7px,#609 317.7px,#990098 383.7px,#990076 436.7px,#990057 513.7px,#905 522.7px)"></i><i style="background:linear-gradient(90deg,#002b99 80.7px,#021999 182.7px,#630099 315.7px,#990097 385.7px,#990075 439.7px,#990057 517.7px,#990056 520.7px)"></i><i style="background:linear-gradient(90deg,#002a99 81.7px,#021899 182.7px,#610099 314.7px,#990097 387.7px,#990075 441.7px,#990058 518.7px)"></i><i style="background:linear-gradient(90deg,#002999 83.7px,#011799 182.7px,#5f0099 312.7px,#990097 389.7px,#990075 444.7px,#990059 516.7px)"></i><i style="background:linear-gradient(90deg,#002999 84.7px,#021799 183.7px,#5c0099 310.7px,#990097 391.7px,#990075 446.7px,#99005a 515.7px)"></i><i style="background:linear-gradient(90deg,#002899 85.7px,#021699 183.7px,#5b0099 309.7px,#990097 393.7px,#990075 448.7px,#99005c 513.7px)"></i><i style="background:linear-gradient(90deg,#002799 86.7px,#011699 183.7px,#580099 307.7px,#990098 394.7px,#990075 450.7px,#99005d 511.7px)"></i><i style="background:linear-gradient(90deg,#002699 87.7px,#021599 184.7px,#560099 305.7px,#990098 396.7px,#990075 452.7px,#99005f 509.7px)"></i><i style="background:linear-gradient(90deg,#002599 88.7px,#021599 184.7px,#540099 304.7px,#990097 398.7px,#990076 454.7px,#990060 507.7px)"></i><i style="background:linear-gradient(90deg,#002599 89.7px,#011499 184.7px,#520099 302.7px,#990097 400.7px,#990075 457.7px,#990061 506.7px)"></i><i style="background:linear-gradient(90deg,#002499 90.7px,#021399 185.7px,#500099 300.7px,#990097 402.7px,#990075 459.7px,#990063 504.7px)"></i><i style="background:linear-gradient(90deg,#002399 91.7px,#021399 185.7px,#4e0099 299.7px,#990097 404.7px,#990075 462.7px,#990065 502.7px)"></i><i style="background:linear-gradient(90deg,#029 92.7px,#021299 185.7px,#4c0099 297.7px,#990097 406.7px,#990075 464.7px,#906 500.7px)"></i><i style="background:linear-gradient(90deg,#029 93.7px,#021299 186.7px,#4a0099 295.7px,#990098 407.7px,#990076 465.7px,#990068 499.7px)"></i><i style="background:linear-gradient(90deg,#002199 94.7px,#021199 186.7px,#490099 294.7px,#990098 409.7px,#990075 468.7px,#990069 497.7px)"></i><i style="background:linear-gradient(90deg,#002099 96.7px,#021199 186.7px,#460099 292.7px,#990097 411.7px,#990075 470.7px,#99006b 495.7px)"></i><i style="background:linear-gradient(90deg,#001f99 97.7px,#021099 187.7px,#409 290.7px,#990097 413.7px,#990075 473.7px,#99006d 493.7px)"></i><i style="background:linear-gradient(90deg,#001f99 98.7px,#021099 187.7px,#430099 289.7px,#990097 415.7px,#990075 475.7px,#99006e 492.7px)"></i><i style="background:linear-gradient(90deg,#001e99 99.7px,#020f99 187.7px,#410099 287.7px,#990097 417.7px,#990075 478.7px,#990070 490.7px)"></i><i style="background:linear-gradient(90deg,#001d99 100.7px,#020f99 188.7px,#3f0099 285.7px,#990097 419.7px,#990075 480.7px,#990072 488.7px)"></i><i style="background:linear-gradient(90deg,#001d99 101.7px,#020e99 188.7px,#3e0099 284.7px,#990098 420.7px,#990076 481.7px,#990073 486.7px)"></i><i style="background:linear-gradient(90deg,#001c99 102.7px,#020e99 188.7px,#3c0099 282.7px,#990097 422.7px,#990075 484.7px)"></i><i style="background:linear-gradient(90deg,#001b99 103.7px,#020d99 189.7px,#3a0099 280.7px,#990097 424.7px,#907 483.7px)"></i><i style="background:linear-gradient(90deg,#001b99 104.7px,#020d99 189.7px,#390099 279.7px,#990097 426.7px,#990079 481.7px)"></i><i style="background:linear-gradient(90deg,#001a99 106.7px,#020d99 189.7px,#370099 277.7px,#990097 428.7px,#99007b 479.7px)"></i><i style="background:linear-gradient(90deg,#001999 107.7px,#020c99 190.7px,#360099 276.7px,#990097 430.7px,#99007c 477.7px)"></i><i style="background:linear-gradient(90deg,#001999 108.7px,#020c99 190.7px,#340099 274.7px,#990097 432.7px,#99007e 476.7px)"></i><i style="background:linear-gradient(90deg,#001899 109.7px,#020b99 190.7px,#320099 272.7px,#990098 433.7px,#990080 474.7px)"></i><i style="background:linear-gradient(90deg,#001899 110.7px,#020b99 191.7px,#310099 271.7px,#990097 435.7px,#990082 472.7px)"></i><i style="background:linear-gradient(90deg,#001799 111.7px,#020a99 191.7px,#300099 269.7px,#990097 437.7px,#990084 470.7px)"></i><i style="background:linear-gradient(90deg,#001699 112.7px,#020a99 191.7px,#2f0099 268.7px,#990097 439.7px,#990086 468.7px)"></i><i style="background:linear-gradient(90deg,#001699 114.7px,#020a99 191.7px,#2d0099 266.7px,#990097 441.7px,#908 467.7px)"></i><i style="background:linear-gradient(90deg,#001599 115.7px,#020999 192.7px,#2c0099 265.7px,#990097 443.7px,#99008a 465.7px)"></i><i style="background:linear-gradient(90deg,#001599 116.7px,#020999 192.7px,#2a0099 263.7px,#990097 445.7px,#99008c 463.7px)"></i><i style="background:linear-gradient(90deg,#001499 117.7px,#020999 192.7px,#290099 262.7px,#990098 446.7px,#99008e 461.7px)"></i><i style="background:linear-gradient(90deg,#001499 118.7px,#020899 193.7px,#280099 260.7px,#990097 448.7px,#990090 460.7px)"></i><i style="background:linear-gradient(90deg,#001399 120.7px,#020899 193.7px,#270099 259.7px,#990097 450.7px,#990092 458.7px)"></i><i style="background:linear-gradient(90deg,#001299 121.7px,#020799 193.7px,#250099 257.7px,#990097 452.7px,#990095 456.7px)"></i><i style="background:linear-gradient(90deg,#001299 122.7px,#020799 194.7px,#240099 256.7px,#990097 454.7px)"></i><i style="background:linear-gradient(90deg,#019 123.7px,#020799 194.7px,#230099 255.7px,#980099 452.7px)"></i><i style="background:linear-gradient(90deg,#019 124.7px,#020699 194.7px,#209 254.7px,#970099 451.7px)"></i><i style="background:linear-gradient(90deg,#001099 126.7px,#020699 195.7px,#210099 253.7px,#940099 449.7px)"></i><i style="background:linear-gradient(90deg,#001099 127.7px,#020699 195.7px,#200099 252.7px,#920099 447.7px)"></i><i style="background:linear-gradient(90deg,#000f99 128.7px,#020599 195.7px,#200099 251.7px,#900099 445.7px)"></i><i style="background:linear-gradient(90deg,#000f99 129.7px,#020599 196.7px,#1f0099 251.7px,#8e0099 444.7px)"></i><i style="background:linear-gradient(90deg,#000e99 131.7px,#020499 196.7px,#1e0099 250.7px,#8c0099 442.7px)"></i><i style="background:linear-gradient(90deg,#000d99 132.7px,#020499 196.7px,#1e0099 250.7px,#890099 440.7px)"></i><i style="background:linear-gradient(90deg,#000d99 133.7px,#020499 197.7px,#1f0099 252.7px,#870099 438.7px)"></i><i style="background:linear-gradient(90deg,#000d99 134.7px,#020399 197.7px,#1f0099 253.7px,#850099 436.7px)"></i><i style="background:linear-gradient(90deg,#000c99 136.7px,#020399 197.7px,#200099 256.7px,#830099 435.7px)"></i><i style="background:linear-gradient(90deg,#000b99 137.7px,#020399 198.7px,#250099 266.7px,#810099 433.7px)"></i><i style="background:linear-gradient(90deg,#000b99 138.7px,#020299 198.7px,#310099 289.7px,#7f0099 431.7px)"></i><i style="background:linear-gradient(90deg,#000b99 139.7px,#020299 198.7px,#570099 361.7px,#7d0099 429.7px)"></i><i style="background:linear-gradient(90deg,#000a99 141.7px,#020299 199.7px,#7b0099 426.7px,#7c0099 428.7px)"></i><i style="background:linear-gradient(90deg,#000a99 142.7px,#020299 199.7px,#7a0099 426.7px)"></i><i style="background:linear-gradient(90deg,#000999 143.7px,#020199 199.7px,#780099 424.7px)"></i><i style="background:linear-gradient(90deg,#000899 145.7px,#020199 200.7px,#760099 422.7px)"></i><i style="background:linear-gradient(90deg,#000899 146.7px,#020199 200.7px,#740099 420.7px)"></i><i style="background:linear-gradient(90deg,#000899 147.7px,#020099 200.7px,#720099 419.7px)"></i><i style="background:linear-gradient(90deg,#000799 149.7px,#020099 201.7px,#710099 417.7px)"></i><i style="background:linear-gradient(90deg,#000799 150.7px,#020099 201.7px,#6f0099 415.7px)"></i><i style="background:linear-gradient(90deg,#000699 151.7px,#020099 201.7px,#6d0099 413.7px)"></i><i style="background:linear-gradient(90deg,#000699 153.7px,#020099 202.7px,#6c0099 412.7px)"></i><i style="background:linear-gradient(90deg,#000599 154.7px,#020099 202.7px,#6a0099 410.7px)"></i><i style="background:linear-gradient(90deg,#000599 156.7px,#020099 202.7px,#680099 408.7px)"></i><i style="background:linear-gradient(90deg,#000499 157.7px,#020099 203.7px,#609 406.7px)"></i><i style="background:linear-gradient(90deg,#000499 158.7px,#020099 203.7px,#650099 404.7px)"></i><i style="background:linear-gradient(90deg,#000399 160.7px,#020099 203.7px,#630099 403.7px)"></i><i style="background:linear-gradient(90deg,#000399 161.7px,#020099 204.7px,#620099 401.7px)"></i><i style="background:linear-gradient(90deg,#000399 163.7px,#020099 204.7px,#600099 399.7px)"></i><i style="background:linear-gradient(90deg,#000299 164.7px,#020099 204.7px,#5e0099 397.7px)"></i><i style="background:linear-gradient(90deg,#000299 166.7px,#020099 205.7px,#5d0099 396.7px)"></i><i style="background:linear-gradient(90deg,#000199 167.7px,#020099 205.7px,#5c0099 394.7px)"></i><i style="background:linear-gradient(90deg,#000199 169.7px,#020099 206.7px,#5a0099 392.7px)"></i><i style="background:linear-gradient(90deg,#000199 170.7px,#020099 206.7px,#580099 390.7px)"></i><i style="background:linear-gradient(90deg,#009 172.7px,#020099 206.7px,#570099 388.7px)"></i><i style="background:linear-gradient(90deg,#009 173.7px,#020099 207.7px,#560099 387.7px)"></i><i style="background:linear-gradient(90deg,#009 175.7px,#020099 207.7px,#540099 385.7px)"></i><i style="background:linear-gradient(90deg,#009 176.7px,#020099 207.7px,#530099 383.7px)"></i><i style="background:linear-gradient(90deg,#009 178.7px,#020099 208.7px,#510099 381.7px)"></i><i style="background:linear-gradient(90deg,#009 179.7px,#020099 208.7px,#500099 380.7px)"></i><i style="background:linear-gradient(90deg,#009 181.7px,#020099 208.7px,#4f0099 378.7px)"></i><i style="background:linear-gradient(90deg,#009 182.7px,#020099 209.7px,#4d0099 376.7px)"></i><i style="background:linear-gradient(90deg,#009 184.7px,#030099 210.7px,#4c0099 374.7px)"></i><i style="background:linear-gradient(90deg,#009 186.7px,#030099 210.7px,#4b0099 373.7px)"></i><i style="background:linear-gradient(90deg,#009 187.7px,#020099 210.7px,#490099 371.7px)"></i><i style="background:linear-gradient(90deg,#009 189.7px,#030099 211.7px,#480099 369.7px)"></i><i style="background:linear-gradient(90deg,#009 191.7px,#030099 212.7px,#470099 367.7px)"></i><i style="background:linear-gradient(90deg,#009 192.7px,#030099 212.7px,#450099 365.7px)"></i><i style="background:linear-gradient(90deg,#009 194.7px,#040099 214.7px,#409 364.7px)"></i><i style="background:linear-gradient(90deg,#009 196.7px,#040099 215.7px,#430099 362.7px)"></i><i style="background:linear-gradient(90deg,#009 198.7px,#050099 218.7px,#420099 360.7px)"></i><i style="background:linear-gradient(90deg,#009 200.7px,#0a0099 230.7px,#400099 358.7px)"></i><i style="background:linear-gradient(90deg,#009 201.7px,#100099 245.7px,#3f0099 357.7px)"></i><i style="background:linear-gradient(90deg,#009 203.7px,#3e0099 355.7px)"></i><i style="background:linear-gradient(90deg,#009 205.7px,#3d0099 353.7px)"></i><i style="background:linear-gradient(90deg,#009 207.7px,#3c0099 351.7px)"></i><i style="background:linear-gradient(90deg,#009 209.7px,#3a0099 349.7px)"></i><i style="background:linear-gradient(90deg,#010099 211.7px,#3a0099 348.7px)"></i><i style="background:linear-gradient(90deg,#020099 213.7px,#380099 346.7px)"></i><i style="background:linear-gradient(90deg,#020099 215.7px,#370099 344.7px)"></i><i style="background:linear-gradient(90deg,#030099 217.7px,#360099 342.7px)"></i><i style="background:linear-gradient(90deg,#040099 219.7px,#350099 341.7px)"></i><i style="background:linear-gradient(90deg,#040099 221.7px,#340099 339.7px)"></i><i style="background:linear-gradient(90deg,#050099 223.7px,#309 337.7px)"></i><i style="background:linear-gradient(90deg,#060099 225.7px,#320099 335.7px)"></i><i style="background:linear-gradient(90deg,#070099 228.7px,#300099 333.7px)"></i><i style="background:linear-gradient(90deg,#070099 230.7px,#300099 332.7px)"></i><i style="background:linear-gradient(90deg,#080099 232.7px,#2f0099 330.7px)"></i><i style="background:linear-gradient(90deg,#090099 234.7px,#2d0099 328.7px)"></i><i style="background:linear-gradient(90deg,#090099 236.7px,#2c0099 326.7px)"></i><i style="background:linear-gradient(90deg,#0a0099 239.7px,#2c0099 325.7px)"></i><i style="background:linear-gradient(90deg,#0b0099 241.7px,#2b0099 323.7px)"></i><i style="background:linear-gradient(90deg,#0b0099 243.7px,#290099 321.7px)"></i><i style="background:linear-gradient(90deg,#0c0099 245.7px,#280099 319.7px)"></i><i style="background:linear-gradient(90deg,#0d0099 248.7px,#270099 317.7px)"></i><i style="background:linear-gradient(90deg,#0e0099 250.7px,#270099 316.7px)"></i><i style="background:linear-gradient(90deg,#0e0099 252.7px,#260099 314.7px)"></i><i style="background:linear-gradient(90deg,#0f0099 254.7px,#250099 312.7px)"></i><i style="background:linear-gradient(90deg,#0f0099 256.7px,#240099 310.7px)"></i><i style="background:linear-gradient(90deg,#100099 259.7px,#230099 309.7px)"></i><i style="background:linear-gradient(90deg,#109 261.7px,#209 307.7px)"></i><i style="background:linear-gradient(90deg,#109 263.7px,#210099 305.7px)"></i><i style="background:linear-gradient(90deg,#120099 265.7px,#200099 303.7px)"></i><i style="background:linear-gradient(90deg,#120099 267.7px,#1f0099 301.7px)"></i><i style="background:linear-gradient(90deg,#130099 269.7px,#1e0099 300.7px)"></i><i style="background:linear-gradient(90deg,#140099 272.7px,#1d0099 298.7px)"></i><i style="background:linear-gradient(90deg,#140099 274.7px,#1c0099 296.7px)"></i><i style="background:linear-gradient(90deg,#150099 276.7px,#1c0099 294.7px)"></i><i style="background:linear-gradient(90deg,#160099 279.7px,#1b0099 292.7px)"></i><i></i><i></i><i></i><i></i><i></i><i></i><i></i></div>
<div class="cie" style="left:1370px;top:151px;width:370px;height:387px;clip-path:polygon(368.9px 38.6px,1.2px 1.0px,58.2px 385.1px)"><i style="background:linear-gradient(90deg,#0f0 0px,#0dff00 7px,#1bff00 13px)"></i><i style="background:linear-gradient(90deg,#00ff04 0px,#06ff03 4px,#4cff00 33px)"></i><i style="background:linear-gradient(90deg,#00ff08 0px,#03ff07 3px,#59ff00 38px,#80ff00 52px)"></i><i style="background:linear-gradient(90deg,#00ff0c 0px,#02ff0b 3px,#56ff05 37px,#aeff00 67px,#beff00 72px)"></i><i style="background:linear-gradient(90deg,#00ff0f 0px,#04ff0f 4px,#58ff09 38px,#b1ff03 68px,#fdff00 90px,#fff900 92px)"></i><i style="background:linear-gradient(90deg,#00ff13 0px,#03ff13 4px,#58ff0d 38px,#b1ff07 68px,#feff02 90px,#ffca00 107px,#ffc000 111px)"></i><i style="background:linear-gradient(90deg,#00ff17 0px,#02ff17 4px,#57ff11 38px,#b1ff0c 68px,#ffff07 90px,#ffcc03 106px,#ff9f00 126px,#ff9600 131px)"></i><i style="background:linear-gradient(90deg,#00ff1b 1px,#04ff1b 5px,#5aff16 39px,#b2ff11 68px,#ffff0c 90px,#ffce07 105px,#ffa203 124px,#ff7a00 149px,#ff7800 150px)"></i><i style="background:linear-gradient(90deg,#00ff1f 1px,#03ff1f 5px,#57ff1a 38px,#aeff16 67px,#fffe11 90px,#ffce0b 105px,#ffa206 124px,#ff7901 149px,#ff6100 170px)"></i><i style="background:linear-gradient(90deg,#00ff23 1px,#03ff23 5px,#57ff1f 38px,#afff1b 67px,#fffd16 90px,#ffcd10 105px,#ffa10a 124px,#ff7804 149px,#ff5400 183px,#ff4f00 189px)"></i><i style="background:linear-gradient(90deg,#00ff27 2px,#02ff27 5px,#56ff23 38px,#afff1f 67px,#fdff1c 89px,#ffc914 106px,#ff9e0d 125px,#ff7507 151px,#ff5001 186px,#ff3f00 209px)"></i><i style="background:linear-gradient(90deg,#00ff2b 2px,#04ff2b 6px,#59ff28 39px,#b2ff24 68px,#feff21 89px,#ffcb19 105px,#ff9f11 124px,#ff770a 149px,#ff5204 183px,#f30 228px)"></i><i style="background:linear-gradient(90deg,#00ff2f 2px,#03ff2f 6px,#58ff2c 39px,#b2ff29 68px,#ffff27 89px,#ffce1d 104px,#ffa115 123px,#ff780e 148px,#ff5307 182px,#ff3101 230px,#ff2800 248px)"></i><i style="background:linear-gradient(90deg,#00ff34 2px,#02ff33 6px,#58ff31 39px,#afff2e 67px,#ffff2c 89px,#ffd023 103px,#ffa41a 121px,#ff7b12 145px,#ff560a 178px,#ff3403 224px,#ff1f00 268px)"></i><i style="background:linear-gradient(90deg,#00ff38 3px,#04ff38 7px,#58ff36 39px,#afff34 67px,#fffe31 89px,#ffcf27 103px,#ffa31e 121px,#ff7b15 145px,#ff550c 178px,#ff3405 224px,#ff1800 287px)"></i><i style="background:linear-gradient(90deg,#00ff3c 3px,#03ff3c 7px,#57ff3a 39px,#b0ff39 67px,#fffd37 89px,#ffce2c 103px,#ffa321 121px,#ff7a18 145px,#ff540f 178px,#ff3307 224px,#ff1600 291px,#f10 307px)"></i><i style="background:linear-gradient(90deg,#00ff41 3px,#03ff40 7px,#57ff3f 39px,#b0ff3e 67px,#feff3d 88px,#ffc82f 105px,#ff9c24 124px,#ff741a 149px,#ff4f10 183px,#ff2f08 231px,#ff1201 302px,#ff0b00 326px)"></i><i style="background:linear-gradient(90deg,#00ff45 4px,#02ff45 7px,#57ff44 39px,#b0ff43 67px,#feff42 88px,#ffcd35 103px,#ffa129 121px,#ff781e 145px,#ff5314 178px,#ff320b 224px,#ff1503 292px,#ff0600 346px)"></i><i style="background:linear-gradient(90deg,#00ff49 4px,#04ff49 8px,#59ff49 40px,#b4ff49 68px,#ffff48 88px,#ffcf3a 102px,#ffa22e 120px,#ff7922 144px,#ff5417 176px,#ff330e 221px,#ff1605 287px,#ff0100 365px)"></i><i style="background:linear-gradient(90deg,#00ff4e 4px,#03ff4e 8px,#56ff4e 39px,#b0ff4e 67px,#fffe4e 88px,#ffce3f 102px,#ffa232 120px,#ff7825 144px,#ff541a 176px,#ff3310 221px,#ff1507 287px,#f00 370px)"></i><i style="background:linear-gradient(90deg,#00ff52 4px,#02ff52 8px,#56ff53 39px,#adff53 66px,#fffe54 88px,#ffcd44 102px,#ffa136 120px,#ff7828 144px,#ff531c 176px,#ff3212 221px,#ff1508 287px,#ff0001 370px)"></i><i style="background:linear-gradient(90deg,#00ff57 5px,#04ff57 9px,#59ff58 40px,#b1ff59 67px,#fffd59 88px,#ffcd49 102px,#ffa03a 120px,#ff772c 144px,#ff531f 176px,#ff3214 221px,#ff150a 287px,#ff0003 368px)"></i><i style="background:linear-gradient(90deg,#00ff5c 5px,#03ff5c 9px,#58ff5d 40px,#b1ff5f 67px,#feff60 87px,#ffc94d 103px,#ff9d3d 121px,#ff752e 145px,#ff5021 178px,#ff2f15 224px,#ff120b 292px,#ff0004 367px)"></i><i style="background:linear-gradient(90deg,#00ff60 5px,#02ff61 9px,#58ff62 40px,#b1ff64 67px,#feff66 87px,#ffcb52 102px,#ff9f42 120px,#ff7632 144px,#ff5124 176px,#ff3118 221px,#ff130d 288px,#ff0005 365px)"></i><i style="background:linear-gradient(90deg,#00ff65 6px,#02ff65 9px,#58ff68 40px,#b1ff6a 67px,#ffff6c 87px,#ffd05a 100px,#ffa448 117px,#ff7b38 140px,#ff5529 171px,#ff341c 214px,#ff1710 277px,#ff0007 363px)"></i><i style="background:linear-gradient(90deg,#00ff6a 6px,#04ff6a 10px,#57ff6d 40px,#aeff70 66px,#fffe72 87px,#ffd05f 100px,#ffa44c 117px,#ff7a3b 140px,#ff552c 171px,#ff341e 214px,#ff1612 277px,#ff0008 361px)"></i><i style="background:linear-gradient(90deg,#00ff6f 6px,#03ff6f 10px,#57ff72 40px,#aeff76 66px,#fffe78 87px,#ffcf64 100px,#ffa351 117px,#ff793f 140px,#ff542e 171px,#ff3320 214px,#ff1613 277px,#ff000a 359px)"></i><i style="background:linear-gradient(90deg,#00ff74 7px,#02ff74 10px,#57ff78 40px,#aeff7c 66px,#fdff7f 86px,#ffc565 103px,#ff9a51 121px,#ff713f 145px,#ff4d2e 178px,#ff2d20 224px,#ff1012 293px,#ff000b 358px)"></i><i style="background:linear-gradient(90deg,#00ff79 7px,#04ff79 11px,#59ff7d 41px,#b2ff82 67px,#feff86 86px,#ffca6d 101px,#ff9f58 118px,#ff7645 141px,#ff5233 172px,#ff3124 216px,#ff1316 281px,#ff000c 356px)"></i><i style="background:linear-gradient(90deg,#00ff7e 7px,#03ff7e 11px,#59ff83 41px,#b2ff88 67px,#feff8c 86px,#ffcc73 100px,#ffa05d 117px,#ff794a 139px,#ff5438 169px,#ff3327 211px,#ff1619 273px,#ff000e 354px)"></i><i style="background:linear-gradient(90deg,#00ff83 7px,#02ff83 11px,#56ff89 40px,#afff8e 66px,#ffff93 86px,#ffcf7a 99px,#ffa263 116px,#ff794e 138px,#ff543b 168px,#ff332a 210px,#ff161b 272px,#ff000f 352px)"></i><i style="background:linear-gradient(90deg,#0f8 8px,#02ff89 11px,#55ff8e 40px,#afff94 66px,#fffe99 86px,#ffce7f 99px,#ffa167 116px,#ff7952 138px,#ff543e 168px,#ff332c 210px,#ff151c 272px,#f01 350px)"></i><i style="background:linear-gradient(90deg,#00ff8d 8px,#03ff8e 12px,#58ff94 41px,#afff9b 66px,#fffda0 86px,#ffcd85 99px,#ffa06c 116px,#ff7855 138px,#ff5341 168px,#ff322e 210px,#ff151e 272px,#ff0012 349px)"></i><i style="background:linear-gradient(90deg,#00ff92 8px,#03ff93 12px,#58ff9a 41px,#afffa1 66px,#fdffa7 85px,#ffc687 101px,#ff9b6e 118px,#ff7356 141px,#ff4e41 172px,#ff2e2f 216px,#ff111e 281px,#ff0014 347px)"></i><i style="background:linear-gradient(90deg,#00ff98 9px,#02ff99 12px,#57ffa0 41px,#afffa8 66px,#feffae 85px,#ffc88e 100px,#ff9c73 117px,#ff755c 139px,#ff5146 169px,#ff3032 212px,#ff1321 275px,#ff0015 345px)"></i><i style="background:linear-gradient(90deg,#00ff9d 9px,#04ff9e 13px,#57ffa6 41px,#b0ffae 66px,#ffffb5 85px,#ffce97 98px,#ffa27c 114px,#ff7a63 135px,#ff554c 164px,#ff3337 205px,#ff1625 265px,#ff0017 343px)"></i><i style="background:linear-gradient(90deg,#00ffa3 9px,#03ffa4 13px,#57ffac 41px,#b0ffb5 66px,#ffffbc 85px,#ffd09f 97px,#ffa482 113px,#ff7b68 134px,#ff5650 162px,#ff353b 202px,#ff1728 260px,#ff0019 341px)"></i><i style="background:linear-gradient(90deg,#00ffa9 10px,#02ffa9 13px,#56ffb2 41px,#b0ffbc 66px,#fffec3 85px,#ffd0a4 97px,#ffa387 113px,#ff7a6c 134px,#ff5653 162px,#ff343d 202px,#ff172a 260px,#ff001a 339px,#ff001a 340px)"></i><i style="background:linear-gradient(90deg,#00ffae 10px,#01ffaf 13px,#56ffb8 41px,#acffc2 65px,#fffdca 85px,#ffcfaa 97px,#ffa28b 113px,#ff7970 134px,#ff5556 162px,#ff3340 202px,#ff162b 260px,#ff001c 338px)"></i><i style="background:linear-gradient(90deg,#00ffb4 10px,#03ffb5 14px,#59ffbf 42px,#b0ffc9 66px,#fdffd2 84px,#ffc7ab 99px,#ff9d8d 115px,#ff7470 137px,#ff4f56 167px,#ff2e3f 209px,#ff122a 271px,#ff001d 336px)"></i><i style="background:linear-gradient(90deg,#00ffb9 10px,#03ffbb 14px,#58ffc6 42px,#b1ffd0 66px,#feffda 84px,#ffcab3 98px,#ff9e93 114px,#ff7676 135px,#ff515b 164px,#ff3043 205px,#ff132e 265px,#ff001f 334px)"></i><i style="background:linear-gradient(90deg,#00ffc0 11px,#02ffc1 14px,#5fc 41px,#adffd7 65px,#ffffe2 84px,#fcb 97px,#ffa09a 113px,#ff777b 134px,#ff5360 162px,#ff3247 202px,#ff1431 261px,#ff0021 332px)"></i><i style="background:linear-gradient(90deg,#00ffc5 11px,#04ffc7 15px,#58ffd3 42px,#b1ffdf 66px,#ffffe9 84px,#ffcfc4 96px,#ffa4a2 111px,#ff7b83 131px,#ff5666 158px,#ff354c 196px,#ff1735 252px,#ff0023 330px,#f02 331px)"></i><i style="background:linear-gradient(90deg,#00ffcb 11px,#00ffcd 14px,#54ffd9 41px,#adffe6 65px,#fffef0 84px,#ffceca 96px,#ffa3a7 111px,#ff7a87 131px,#ff5669 158px,#ff344f 196px,#ff1737 252px,#ff0024 328px,#ff0024 329px)"></i><i style="background:linear-gradient(90deg,#00ffd2 12px,#02ffd3 15px,#57ffe0 42px,#adffed 65px,#fffdf8 84px,#ffcdd0 96px,#ffa2ac 111px,#ff798b 131px,#ff556d 158px,#ff3451 196px,#ff1639 252px,#ff0026 327px)"></i><i style="background:linear-gradient(90deg,#00ffd8 12px,#01ffd9 15px,#57ffe7 42px,#adfff4 65px,#fbfdff 83px,#fff7fb 85px,#ffc9d3 97px,#ff9cad 113px,#ff748b 134px,#ff506c 162px,#ff2f50 202px,#ff1238 261px,#ff0028 325px)"></i><i style="background:linear-gradient(90deg,#00ffde 12px,#00ffdf 15px,#56ffee 42px,#aefffc 65px,#e1f9ff 78px,#fff2fe 86px,#ffc5d6 98px,#ff99b0 114px,#ff718e 135px,#ff4d6e 164px,#ff2d51 205px,#ff1038 266px,#ff0029 324px)"></i><i style="background:linear-gradient(90deg,#00ffe4 12px,#02ffe6 16px,#56fff5 42px,#9cfdff 61px,#ffe9fe 88px,#ffbad4 101px,#ff8fad 118px,#ff688a 141px,#ff456a 172px,#ff254d 217px,#ff0935 284px,#ff002b 322px)"></i><i style="background:linear-gradient(90deg,#00ffeb 13px,#02ffed 16px,#55fffc 42px,#7ffaff 54px,#ffe0fd 90px,#ffb3d4 103px,#ff8aae 120px,#ff648b 143px,#ff416a 175px,#ff224e 221px,#ff0735 290px,#ff002d 320px)"></i><i style="background:linear-gradient(90deg,#00fff1 13px,#01fff3 16px,#4afdff 39px,#e4dfff 84px,#fedaff 91px,#ffa8cf 107px,#ff7ea8 126px,#ff5985 151px,#ff3865 186px,#ff1a49 237px,#ff0030 315px,#ff002f 318px)"></i><i style="background:linear-gradient(90deg,#00fff8 13px,#00fffa 16px,#2bfcff 30px,#c6ddff 77px,#fed2ff 93px,#ffa4d2 108px,#ff7bab 127px,#ff5686 153px,#ff3565 189px,#ff1748 242px,#ff0031 315px,#ff0031 316px)"></i><i style="background:linear-gradient(90deg,#0ff 14px,#02fdff 17px,#9cdeff 66px,#ffcaff 95px,#ff9ed3 110px,#ff75aa 130px,#ff5185 157px,#ff3064 195px,#ff1347 251px,#f03 315px)"></i><i style="background:linear-gradient(90deg,#00f9ff 14px,#01f7ff 17px,#9bd7ff 67px,#ffc2ff 97px,#ff98d3 112px,#ff71ab 132px,#ff4e86 159px,#ff2e65 197px,#ff1248 253px,#ff0035 313px)"></i><i style="background:linear-gradient(90deg,#00f2ff 14px,#00f1ff 17px,#9ad1ff 68px,#ffbbfe 99px,#ff93d3 114px,#ff6dab 134px,#ff4b87 161px,#ff2c66 199px,#ff1049 255px,#ff0037 311px)"></i><i style="background:linear-gradient(90deg,#00ecff 15px,#02eaff 18px,#9dcaff 70px,#ffb4fd 101px,#ff8bd1 117px,#ff66a9 138px,#ff4484 167px,#ff2663 207px,#ff0c47 266px,#ff0039 309px)"></i><i style="background:linear-gradient(90deg,#00e6ff 15px,#01e4ff 18px,#9cc4ff 71px,#ffadfd 103px,#ff86d2 119px,#ff63aa 140px,#ff4285 169px,#ff2464 210px,#ff0a47 270px,#ff003b 307px)"></i><i style="background:linear-gradient(90deg,#00e0ff 15px,#03deff 19px,#9ebdff 73px,#fea9ff 104px,#ff7fd0 122px,#ff5ca8 144px,#ff3c83 174px,#ff2063 216px,#ff0746 278px,#ff003d 306px)"></i><i style="background:linear-gradient(90deg,#00dbff 15px,#02d9ff 19px,#9db8ff 74px,#ffa3ff 106px,#ff7cd2 123px,#ff5aaa 145px,#ff3b85 175px,#ff1f64 217px,#ff0647 279px,#ff003f 304px)"></i><i style="background:linear-gradient(90deg,#00d5ff 16px,#02d4ff 19px,#9cb2ff 75px,#ff9dff 108px,#ff78d3 125px,#ff57ab 147px,#ff3886 177px,#ff1d65 220px,#ff0448 283px,#ff0041 302px)"></i><i style="background:linear-gradient(90deg,#00d0ff 16px,#03ceff 20px,#9eacff 77px,#ff97fe 110px,#ff73d3 127px,#ff52aa 150px,#ff3585 181px,#ff1a64 225px,#ff0247 289px,#f04 300px)"></i><i style="background:linear-gradient(90deg,#00cbff 16px,#03c9ff 20px,#9ea7ff 78px,#ff91fe 112px,#ff6dd1 130px,#ff4ea9 153px,#ff3184 185px,#ff1763 230px,#ff0046 296px,#ff0046 298px)"></i><i style="background:linear-gradient(90deg,#00c6ff 17px,#02c5ff 20px,#9da2ff 79px,#ff8bfd 114px,#ff69d1 132px,#ff4aa9 156px,#ff2e84 188px,#ff1463 234px,#ff0048 297px)"></i><i style="background:linear-gradient(90deg,#00c2ff 17px,#03c0ff 21px,#9c9eff 80px,#fe88ff 115px,#ff64d0 135px,#ff46a8 159px,#ff2a84 192px,#ff1263 239px,#ff004a 295px)"></i><i style="background:linear-gradient(90deg,#00bdff 17px,#03bbff 21px,#9b99ff 81px,#ff83ff 117px,#ff61d2 136px,#f4a 160px,#ff2985 193px,#ff1164 240px,#ff004c 293px)"></i><i style="background:linear-gradient(90deg,#00b9ff 18px,#02b7ff 21px,#9b95ff 82px,#ff7eff 119px,#ff5ed2 138px,#ff40a9 163px,#ff2685 197px,#ff0e64 245px,#ff004f 291px)"></i><i style="background:linear-gradient(90deg,#00b5ff 18px,#04b2ff 22px,#9c90ff 84px,#ff79fe 121px,#ff5ad2 140px,#ff3eaa 165px,#ff2486 199px,#ff0d65 247px,#ff0051 289px)"></i><i style="background:linear-gradient(90deg,#00b1ff 18px,#03aeff 22px,#9c8bff 85px,#ff74fe 123px,#ff56d3 142px,#ff3aaa 168px,#ff2185 203px,#ff0a64 252px,#ff0053 288px)"></i><i style="background:linear-gradient(90deg,#00adff 18px,#02abff 22px,#9b87ff 86px,#ff70fe 125px,#ff52d1 145px,#ff37a9 171px,#ff1e84 207px,#ff0863 257px,#ff0056 286px)"></i><i style="background:linear-gradient(90deg,#00a9ff 19px,#04a6ff 23px,#9d83ff 88px,#ff6bfd 127px,#ff4ed1 147px,#ff33a8 174px,#ff1c84 210px,#ff0663 261px,#ff0059 284px)"></i><i style="background:linear-gradient(90deg,#00a5ff 19px,#03a3ff 23px,#9c7fff 89px,#ff68ff 128px,#ff4bd2 149px,#ff31a9 176px,#ff1984 213px,#ff0463 265px,#ff005b 282px)"></i><i style="background:linear-gradient(90deg,#00a1ff 19px,#029fff 23px,#9c7bff 90px,#ff64ff 130px,#ff49d4 150px,#ff30ab 177px,#ff1886 214px,#ff0364 266px,#ff005e 280px)"></i><i style="background:linear-gradient(90deg,#009dff 20px,#049bff 24px,#9d77ff 92px,#ff60ff 132px,#ff45d2 153px,#ff2ca9 181px,#ff1584 219px,#ff0163 272px,#ff0060 279px)"></i><i style="background:linear-gradient(90deg,#009aff 20px,#0398ff 24px,#9d74ff 93px,#ff5cfe 134px,#ff42d2 155px,#ff2aaa 183px,#ff1385 221px,#ff0064 275px,#ff0063 277px)"></i><i style="background:linear-gradient(90deg,#0097ff 20px,#0295ff 24px,#9c70ff 94px,#ff58fe 136px,#ff3ed1 158px,#ff26a8 187px,#ff1184 226px,#f06 275px)"></i><i style="background:linear-gradient(90deg,#0093ff 21px,#0491ff 25px,#9e6dff 96px,#ff55fd 138px,#ff3bd1 160px,#ff24a9 189px,#ff0f84 228px,#ff0068 273px)"></i><i style="background:linear-gradient(90deg,#0090ff 21px,#038eff 25px,#9d69ff 97px,#ff51fd 140px,#ff38d1 162px,#ff22a9 191px,#ff0d84 231px,#ff006b 272px)"></i><i style="background:linear-gradient(90deg,#008dff 21px,#038bff 25px,#9c66ff 98px,#ff4fff 141px,#ff37d3 163px,#ff21ab 192px,#ff0c86 232px,#ff006e 270px)"></i><i style="background:linear-gradient(90deg,#008aff 21px,#0289ff 25px,#9c63ff 99px,#ff4bff 143px,#ff33d2 166px,#ff1da9 196px,#ff0a84 237px,#ff0071 268px)"></i><i style="background:linear-gradient(90deg,#0087ff 22px,#0385ff 26px,#9d60ff 101px,#ff48fe 145px,#ff31d2 168px,#ff1baa 198px,#ff0885 239px,#ff0074 266px)"></i><i style="background:linear-gradient(90deg,#0084ff 22px,#0383ff 26px,#9d5dff 102px,#ff45fe 147px,#ff2ed2 170px,#ff19a9 201px,#ff0685 243px,#f07 264px)"></i><i style="background:linear-gradient(90deg,#0082ff 22px,#0280ff 26px,#9c5aff 103px,#ff41fe 149px,#ff2bd1 173px,#ff17a9 204px,#ff0484 247px,#ff007a 263px)"></i><i style="background:linear-gradient(90deg,#007fff 23px,#037dff 27px,#9e57ff 105px,#ff3efd 151px,#ff28d1 175px,#ff14a8 207px,#ff0284 250px,#ff007d 261px)"></i><i style="background:linear-gradient(90deg,#007cff 23px,#057aff 28px,#9f54ff 107px,#ff3cff 152px,#ff26d1 177px,#ff13a9 209px,#ff0184 253px,#ff0080 259px)"></i><i style="background:linear-gradient(90deg,#007aff 23px,#0278ff 27px,#9d52ff 107px,#ff39ff 154px,#ff25d3 178px,#ff11ab 210px,#ff0085 254px,#ff0083 257px)"></i><i style="background:linear-gradient(90deg,#07f 23px,#0276ff 27px,#9c4fff 108px,#ff36fe 156px,#ff22d2 181px,#ff0fa9 214px,#ff0087 255px)"></i><i style="background:linear-gradient(90deg,#0075ff 24px,#0572ff 29px,#a04cff 111px,#ff34fe 158px,#ff20d2 183px,#ff0daa 216px,#ff008a 254px)"></i><i style="background:linear-gradient(90deg,#0072ff 24px,#0470ff 29px,#9f49ff 112px,#ff31fe 160px,#ff1dd2 185px,#ff0ba9 219px,#ff008d 252px)"></i><i style="background:linear-gradient(90deg,#0070ff 24px,#026eff 28px,#9c47ff 112px,#ff2efd 162px,#ff1bd1 188px,#ff09a9 222px,#ff0091 250px)"></i><i style="background:linear-gradient(90deg,#006dff 25px,#056bff 30px,#a044ff 115px,#ff2bfd 164px,#ff19d1 190px,#ff07a8 225px,#ff0094 248px)"></i><i style="background:linear-gradient(90deg,#006bff 25px,#0469ff 30px,#9f42ff 116px,#ff2aff 165px,#ff17d3 191px,#ff06aa 226px,#ff0098 246px)"></i><i style="background:linear-gradient(90deg,#0069ff 25px,#0467ff 30px,#9f40ff 117px,#ff27ff 167px,#ff15d2 194px,#ff04a9 229px,#ff009b 245px)"></i><i style="background:linear-gradient(90deg,#0067ff 26px,#0565ff 31px,#9e3eff 118px,#ff25fe 169px,#ff13d2 196px,#ff03a9 232px,#ff009f 243px)"></i><i style="background:linear-gradient(90deg,#0065ff 26px,#0463ff 31px,#9e3cff 119px,#ff22fe 171px,#ff11d2 198px,#ff01a9 234px,#ff00a3 241px)"></i><i style="background:linear-gradient(90deg,#0063ff 26px,#0461ff 31px,#9d3aff 120px,#ff20fe 173px,#ff0fd1 201px,#ff00a8 238px,#ff00a7 239px)"></i><i style="background:linear-gradient(90deg,#0061ff 26px,#035fff 31px,#9d38ff 121px,#ff1efd 175px,#ff0dd1 203px,#ff00ab 237px)"></i><i style="background:linear-gradient(90deg,#005fff 27px,#065cff 33px,#a035ff 124px,#ff1cfd 177px,#ff0bd1 205px,#ff00ae 236px)"></i><i style="background:linear-gradient(90deg,#005dff 27px,#045bff 32px,#9d33ff 124px,#ff1aff 178px,#ff0ad3 206px,#ff00b3 234px)"></i><i style="background:linear-gradient(90deg,#005bff 27px,#0359ff 32px,#9d31ff 125px,#ff18fe 180px,#ff08d2 209px,#ff00b7 232px)"></i><i style="background:linear-gradient(90deg,#0059ff 28px,#0656ff 34px,#a02fff 128px,#ff16fe 182px,#ff06d2 211px,#ff00bc 230px)"></i><i style="background:linear-gradient(90deg,#0057ff 28px,#0555ff 34px,#9f2dff 129px,#ff14fe 184px,#ff05d2 213px,#ff00c0 228px)"></i><i style="background:linear-gradient(90deg,#0056ff 28px,#0354ff 33px,#9d2cff 129px,#ff12fe 186px,#ff03d1 216px,#ff00c4 227px)"></i><i style="background:linear-gradient(90deg,#0054ff 29px,#0651ff 35px,#a029ff 132px,#ff10fd 188px,#ff01d1 218px,#ff00c9 225px)"></i><i style="background:linear-gradient(90deg,#0052ff 29px,#0550ff 35px,#a027ff 133px,#ff0efd 190px,#ff00d1 220px,#ff00ce 223px)"></i><i style="background:linear-gradient(90deg,#0050ff 29px,#034eff 34px,#9d26ff 133px,#ff0cfe 191px,#ff00d3 221px)"></i><i style="background:linear-gradient(90deg,#004fff 29px,#034dff 34px,#9d24ff 134px,#ff0bfe 193px,#ff00d8 219px)"></i><i style="background:linear-gradient(90deg,#004dff 30px,#074aff 37px,#a122ff 138px,#ff09fe 195px,#ff00dc 218px)"></i><i style="background:linear-gradient(90deg,#004bff 30px,#0549ff 36px,#9f21ff 138px,#ff07fe 197px,#ff00e1 216px)"></i><i style="background:linear-gradient(90deg,#004aff 30px,#0348ff 35px,#9d1fff 138px,#ff05fd 199px,#ff00e7 214px)"></i><i style="background:linear-gradient(90deg,#0048ff 31px,#0746ff 38px,#a21dff 142px,#ff03fd 201px,#ff00ec 212px)"></i><i style="background:linear-gradient(90deg,#0047ff 31px,#0545ff 37px,#a01cff 142px,#ff02ff 202px,#ff00f1 211px)"></i><i style="background:linear-gradient(90deg,#0045ff 31px,#0443ff 37px,#9f1aff 143px,#ff01fe 204px,#ff00f6 209px)"></i><i style="background:linear-gradient(90deg,#04f 31px,#0442ff 37px,#9f19ff 144px,#ff00fe 206px,#ff00fc 207px)"></i><i style="background:linear-gradient(90deg,#0042ff 32px,#0640ff 39px,#a117ff 147px,#fb00ff 205px)"></i><i style="background:linear-gradient(90deg,#0041ff 32px,#043fff 38px,#9f16ff 147px,#f500ff 203px)"></i><i style="background:linear-gradient(90deg,#0040ff 32px,#043eff 38px,#9f14ff 148px,#f100ff 202px)"></i><i style="background:linear-gradient(90deg,#003eff 33px,#083bff 41px,#a112ff 151px,#eb00ff 200px)"></i><i style="background:linear-gradient(90deg,#003dff 33px,#063bff 40px,#a111ff 152px,#e500ff 198px)"></i><i style="background:linear-gradient(90deg,#003cff 33px,#043aff 39px,#9f10ff 152px,#e000ff 196px)"></i><i style="background:linear-gradient(90deg,#003aff 34px,#0937ff 43px,#a30eff 156px,#da00ff 194px)"></i><i style="background:linear-gradient(90deg,#0039ff 34px,#0736ff 42px,#a10dff 156px,#d700ff 193px)"></i><i style="background:linear-gradient(90deg,#0038ff 34px,#0436ff 40px,#9e0cff 155px,#d100ff 191px)"></i><i style="background:linear-gradient(90deg,#0037ff 34px,#0435ff 40px,#9d0bff 156px,#c0f 189px)"></i><i style="background:linear-gradient(90deg,#0035ff 35px,#0832ff 44px,#a309ff 161px,#c700ff 187px)"></i><i style="background:linear-gradient(90deg,#0034ff 35px,#0532ff 42px,#9f08ff 160px,#c200ff 185px)"></i><i style="background:linear-gradient(90deg,#03f 35px,#0431ff 41px,#9e08ff 160px,#bf00ff 184px)"></i><i style="background:linear-gradient(90deg,#0032ff 36px,#092fff 46px,#a405ff 166px,#ba00ff 182px)"></i><i style="background:linear-gradient(90deg,#0031ff 36px,#072eff 44px,#a104ff 165px,#b500ff 180px)"></i><i style="background:linear-gradient(90deg,#0030ff 36px,#052eff 43px,#9f04ff 165px,#b100ff 178px)"></i><i style="background:linear-gradient(90deg,#002fff 37px,#0d2aff 50px,#a800ff 173px,#ac00ff 176px)"></i><i style="background:linear-gradient(90deg,#002eff 37px,#082bff 46px,#a200ff 170px,#a900ff 175px)"></i><i style="background:linear-gradient(90deg,#002dff 37px,#052aff 44px,#9f00ff 169px,#a500ff 173px)"></i><i style="background:linear-gradient(90deg,#002cff 37px,#0529ff 44px,#9f00ff 170px,#a000ff 171px)"></i><i style="background:linear-gradient(90deg,#002aff 38px,#0a27ff 49px,#9c00ff 169px)"></i><i style="background:linear-gradient(90deg,#002aff 38px,#0627ff 46px,#9800ff 167px)"></i><i style="background:linear-gradient(90deg,#0029ff 38px,#0526ff 45px,#9500ff 166px)"></i><i style="background:linear-gradient(90deg,#0027ff 39px,#0d23ff 53px,#9100ff 164px)"></i><i style="background:linear-gradient(90deg,#0027ff 39px,#0823ff 49px,#8d00ff 162px)"></i><i style="background:linear-gradient(90deg,#0026ff 39px,#0623ff 47px,#8900ff 160px)"></i><i style="background:linear-gradient(90deg,#0025ff 39px,#0423ff 46px,#8700ff 159px)"></i><i style="background:linear-gradient(90deg,#0024ff 40px,#0b20ff 52px,#8300ff 157px)"></i><i style="background:linear-gradient(90deg,#0023ff 40px,#0720ff 49px,#7f00ff 155px)"></i><i style="background:linear-gradient(90deg,#02f 40px,#0420ff 47px,#7c00ff 153px)"></i><i style="background:linear-gradient(90deg,#0021ff 41px,#0e1dff 56px,#7800ff 151px)"></i><i style="background:linear-gradient(90deg,#0020ff 41px,#081dff 51px,#7600ff 150px)"></i><i style="background:linear-gradient(90deg,#001fff 41px,#051dff 49px,#7200ff 148px)"></i><i style="background:linear-gradient(90deg,#001eff 42px,#1418ff 63px,#6f00ff 146px)"></i><i style="background:linear-gradient(90deg,#001eff 42px,#0a1aff 54px,#6b00ff 144px)"></i><i style="background:linear-gradient(90deg,#001dff 42px,#061aff 51px,#6800ff 142px)"></i><i style="background:linear-gradient(90deg,#001cff 42px,#051aff 50px,#60f 141px)"></i><i style="background:linear-gradient(90deg,#001bff 43px,#0e17ff 59px,#6300ff 139px)"></i><i style="background:linear-gradient(90deg,#001aff 43px,#0817ff 54px,#6000ff 137px)"></i><i style="background:linear-gradient(90deg,#001aff 43px,#0518ff 51px,#5c00ff 135px)"></i><i style="background:linear-gradient(90deg,#0019ff 44px,#1512ff 67px,#5900ff 133px)"></i><i style="background:linear-gradient(90deg,#0018ff 44px,#0a14ff 57px,#5700ff 132px)"></i><i style="background:linear-gradient(90deg,#0017ff 44px,#0715ff 54px,#5400ff 130px)"></i><i style="background:linear-gradient(90deg,#0017ff 45px,#250cff 84px,#5100ff 128px)"></i><i style="background:linear-gradient(90deg,#0016ff 45px,#0e11ff 62px,#4f00ff 126px)"></i><i style="background:linear-gradient(90deg,#0015ff 45px,#0812ff 56px,#4c00ff 124px)"></i><i style="background:linear-gradient(90deg,#0015ff 45px,#0612ff 54px,#4a00ff 123px)"></i><i style="background:linear-gradient(90deg,#0014ff 46px,#160dff 71px,#4700ff 121px)"></i><i style="background:linear-gradient(90deg,#0013ff 46px,#0b0fff 60px,#40f 119px)"></i><i style="background:linear-gradient(90deg,#0012ff 46px,#0710ff 56px,#4200ff 117px)"></i><i style="background:linear-gradient(90deg,#0012ff 47px,#2906ff 92px,#3f00ff 115px)"></i><i style="background:linear-gradient(90deg,#01f 47px,#0e0cff 65px,#3d00ff 114px)"></i><i style="background:linear-gradient(90deg,#0010ff 47px,#090dff 59px,#3b00ff 112px)"></i><i style="background:linear-gradient(90deg,#0010ff 47px,#070dff 58px,#3800ff 110px)"></i><i style="background:linear-gradient(90deg,#000fff 48px,#1708ff 75px,#3600ff 108px)"></i><i style="background:linear-gradient(90deg,#000eff 48px,#0b0bff 63px,#30f 106px)"></i><i style="background:linear-gradient(90deg,#000eff 48px,#070bff 59px,#3200ff 105px)"></i><i style="background:linear-gradient(90deg,#000dff 49px,#2c00ff 99px,#2f00ff 103px)"></i><i style="background:linear-gradient(90deg,#000dff 49px,#1007ff 69px,#2d00ff 101px)"></i><i style="background:linear-gradient(90deg,#000cff 49px,#0909ff 62px,#2a00ff 99px)"></i><i style="background:linear-gradient(90deg,#000bff 50px,#2900ff 98px)"></i><i style="background:linear-gradient(90deg,#000bff 50px,#1803ff 80px,#2700ff 96px)"></i><i style="background:linear-gradient(90deg,#000aff 50px,#0c06ff 66px,#2400ff 94px)"></i><i style="background:linear-gradient(90deg,#000aff 50px,#0906ff 63px,#20f 92px)"></i><i style="background:linear-gradient(90deg,#0009ff 51px,#2000ff 90px)"></i><i style="background:linear-gradient(90deg,#0008ff 51px,#1003ff 72px,#1f00ff 89px)"></i><i style="background:linear-gradient(90deg,#0008ff 51px,#0905ff 64px,#1c00ff 87px)"></i><i style="background:linear-gradient(90deg,#0007ff 52px,#1a00ff 85px)"></i><i style="background:linear-gradient(90deg,#0007ff 52px,#1800ff 83px)"></i><i style="background:linear-gradient(90deg,#0006ff 52px,#0c02ff 69px,#1600ff 81px)"></i><i style="background:linear-gradient(90deg,#0006ff 53px,#1500ff 80px)"></i><i style="background:linear-gradient(90deg,#0005ff 53px,#1300ff 78px)"></i><i style="background:linear-gradient(90deg,#0005ff 53px,#10f 76px)"></i><i style="background:linear-gradient(90deg,#0004ff 53px,#0a01ff 68px,#0f00ff 74px)"></i><i style="background:linear-gradient(90deg,#0004ff 54px,#0d00ff 72px)"></i><i style="background:linear-gradient(90deg,#0003ff 54px,#0c00ff 71px)"></i><i style="background:linear-gradient(90deg,#0003ff 54px,#0a00ff 69px)"></i><i style="background:linear-gradient(90deg,#0002ff 55px,#0800ff 67px)"></i><i style="background:linear-gradient(90deg,#0002ff 55px,#0600ff 65px)"></i><i style="background:linear-gradient(90deg,#0001ff 55px,#0400ff 63px)"></i><i style="background:linear-gradient(90deg,#0001ff 55px,#0300ff 62px)"></i><i></i></div>
<div style="left:816.9px;top:737.9px;width:764.8px;height:31.7px;background:linear-gradient(180deg,#2c2c2c 0,#2a2a2a 15.8px,#141414 16.4px,#0c0c0c 31.7px);"></div>
<div style="left:150px;top:1010.3px;width:1770px;height:48px;background:linear-gradient(180deg,#464646 0,#3a3a3a 30%,#262626 100%);"></div>
<svg class="ov" width="1920" height="1058" viewBox="0 0 1920 1058">
<defs><linearGradient id="gRed" x1="0" y1="0" x2="0" y2="1"><stop offset="0" stop-color="#e8383a"/><stop offset="0.45" stop-color="#d81c20"/><stop offset="1" stop-color="#a80c10"/></linearGradient><radialGradient id="gRedBtn" cx="0.5" cy="0.4" r="0.6"><stop offset="0" stop-color="#f04a4c"/><stop offset="1" stop-color="#d02226"/></radialGradient><linearGradient id="gTab" x1="0" y1="0" x2="0" y2="1"><stop offset="0" stop-color="#4e4e4e"/><stop offset="1" stop-color="#3a3a3a"/></linearGradient><linearGradient id="gTool" x1="0" y1="0" x2="0" y2="1"><stop offset="0" stop-color="#4c4c4c"/><stop offset="1" stop-color="#6e6e6e"/></linearGradient><linearGradient id="gBtn" x1="0" y1="0" x2="0" y2="1"><stop offset="0" stop-color="#8a8a8a"/><stop offset="1" stop-color="#6a6a6a"/></linearGradient><linearGradient id="gDD" x1="0" y1="0" x2="0.15" y2="1"><stop offset="0" stop-color="#6e6e6e"/><stop offset="1" stop-color="#4a4a4a"/></linearGradient><linearGradient id="gGrn" x1="0" y1="0" x2="0" y2="1"><stop offset="0" stop-color="#00a000"/><stop offset="1" stop-color="#006400"/></linearGradient><linearGradient id="gBlu" x1="0" y1="0" x2="0" y2="1"><stop offset="0" stop-color="#4848ff"/><stop offset="0.22" stop-color="#0000ff"/><stop offset="0.5" stop-color="#0000f4"/><stop offset="1" stop-color="#000078"/></linearGradient><linearGradient id="gSw" x1="0" y1="0" x2="0" y2="1"><stop offset="0" stop-color="#a4a4a4"/><stop offset="0.08" stop-color="#909090"/><stop offset="1" stop-color="#585858"/></linearGradient><linearGradient id="gSwSel" x1="0" y1="0" x2="0" y2="1"><stop offset="0" stop-color="#181818"/><stop offset="1" stop-color="#3a3a3a"/></linearGradient><linearGradient id="gNav" x1="0" y1="0" x2="0" y2="1"><stop offset="0" stop-color="#9c9c9c"/><stop offset="0.5" stop-color="#7e7e7e"/><stop offset="1" stop-color="#6c6c6c"/></linearGradient></defs>
<circle cx="7.5" cy="8.2" r="5.6" fill="#111" stroke="#7a3aa0" stroke-width="0.8"/>
<text x="7.5" y="10.6" font-size="6.2" fill="#fff" text-anchor="middle" font-weight="bold" textLength="8.2" lengthAdjust="spacingAndGlyphs">CM</text>
<text x="17.8" y="12" font-size="9.6" fill="#06181a" textLength="256.5" lengthAdjust="spacingAndGlyphs" stroke="#06181a" stroke-width="0.25">CalMAN 2019 CalMAN Ultimate for Business 122 Days Remaining</text>
<line x1="1829.3" y1="8" x2="1837" y2="8" stroke="#0a1a1c" stroke-width="0.9"/>
<rect x="1863.2" y="5.6" width="5.6" height="5.6" rx="0.8" fill="none" stroke="#0a1a1c" stroke-width="0.9"/><path d="M1865 5.6v-1.6h5.6v5.6h-1.8" fill="none" stroke="#0a1a1c" stroke-width="0.9"/>
<path d="M1897.4 4.2l7.6 7.6M1905 4.2l-7.6 7.6" stroke="#0a1a1c" stroke-width="1" fill="none"/>
<path d="M1 17h136v19.5a3 3 0 0 1-3 3H4a3 3 0 0 1-3-3z" fill="url(#gRed)" stroke="#7a1a1c" stroke-width="0.6"/>
<text x="9.8" y="36" font-size="23.8" fill="#fff" font-weight="bold" textLength="97.5" lengthAdjust="spacingAndGlyphs">CalMAN</text>
<circle cx="124.5" cy="27.6" r="7.6" fill="url(#gRedBtn)"/>
<path d="M121 26.5h7l-3.5 3.8z" fill="#fff"/>
<path d="M150.6 66.2v-19.3a3.2 3.2 0 0 1 3.2-3.2h61.6a3.2 3.2 0 0 1 3.2 3.2v19.3z" fill="url(#gTab)"/>
<path d="M150.6 66.2v-19.3a3.2 3.2 0 0 1 3.2-3.2h61.6a3.2 3.2 0 0 1 3.2 3.2v19.3" fill="none" stroke="#6c6c6c" stroke-width="1"/>
<line x1="193.8" y1="44.2" x2="193.8" y2="66" stroke="#646464" stroke-width="1.6"/>
<text x="154.6" y="58.7" font-size="9.6" fill="#e6e6e6" textLength="35.2" lengthAdjust="spacingAndGlyphs" stroke="#e6e6e6" stroke-width="0.35">History 1</text>
<circle cx="205.5" cy="56" r="6.8" fill="#3c3c3c"/>
<text x="205.5" y="59.2" font-size="9" fill="#888" text-anchor="middle">+</text>
<path d="M1551 66v-19a3 3 0 0 1 3-3h101a3 3 0 0 1 3 3v19z" fill="url(#gTool)"/>
<path d="M1551 66v-19a3 3 0 0 1 3-3h1v22z" fill="#22dd22"/>
<circle cx="1616.5" cy="54.6" r="7.2" fill="#585858"/>
<path d="M1612.5 53.7h8l-4 4z" fill="#fff"/>
<line x1="1631.5" y1="46" x2="1631.5" y2="66" stroke="#444" stroke-width="1"/>
<text x="1557.5" y="52.6" font-size="9" fill="#eee" textLength="49" lengthAdjust="spacingAndGlyphs">X-Rite i1Pro 2</text>
<text x="1557.5" y="63" font-size="9" fill="#eee" textLength="42" lengthAdjust="spacingAndGlyphs">Direct View</text>
<circle cx="1646.5" cy="54.6" r="9.6" fill="#0000f0" stroke="#ddd" stroke-width="0.7"/>
<text x="1646.5" y="57.6" font-size="7.4" fill="#fff" text-anchor="middle" font-weight="bold" textLength="12" lengthAdjust="spacingAndGlyphs">237</text>
<path d="M1662.5 66v-19a3 3 0 0 1 3-3h91.5a3 3 0 0 1 3 3v19z" fill="url(#gTool)"/>
<path d="M1662.5 66v-19a3 3 0 0 1 3-3h1v22z" fill="#eeee00"/>
<circle cx="1747.5" cy="54.6" r="7.2" fill="#585858"/>
<path d="M1743.5 53.7h8l-4 4z" fill="#fff"/>
<text x="1668.5" y="52.6" font-size="9" fill="#eee" textLength="25.5" lengthAdjust="spacingAndGlyphs">Source</text>
<path d="M1764.5 66v-19a3 3 0 0 1 3-3h101.5a3 3 0 0 1 3 3v19z" fill="url(#gTool)"/>
<path d="M1764.5 66v-19a3 3 0 0 1 3-3h1v22z" fill="#eeee00"/>
<circle cx="1859.8" cy="54.6" r="7.2" fill="#585858"/>
<path d="M1855.8 53.7h8l-4 4z" fill="#fff"/>
<text x="1771" y="52.6" font-size="9" fill="#eee" textLength="79" lengthAdjust="spacingAndGlyphs">Direct Display Control</text>
<rect x="1874.5" y="44" width="24" height="20.5" rx="3" fill="url(#gBtn)" stroke="#999" stroke-width="0.7"/>
<rect x="1899.5" y="44" width="24" height="20.5" rx="3" fill="url(#gBtn)" stroke="#999" stroke-width="0.7"/>
<circle cx="1886.8" cy="54.2" r="7.4" fill="#626262"/><circle cx="1886.8" cy="54.2" r="3" fill="none" stroke="#e4e4e4" stroke-width="1.5"/><circle cx="1886.8" cy="54.2" r="4.5" fill="none" stroke="#e4e4e4" stroke-width="1.5" stroke-dasharray="1.77 1.765"/>
<circle cx="1910.8" cy="54.2" r="7.4" fill="#626262"/><path d="M1912.4 50.6v7.2l-4.4-3.6z" fill="#fff"/>
<text transform="translate(1859.6 42.9) scale(0.6 1)" font-family="Liberation Mono,monospace" font-size="12.6" letter-spacing="4.3" fill="#16a016">G-SYNC</text>
<circle cx="14" cy="54" r="7.2" fill="#616161"/><circle cx="13.6" cy="53.6" r="2.6" fill="#b5b5b5"/>
<circle cx="135.5" cy="54" r="7.2" fill="#626262"/><path d="M137.6 50.2v7.4l-4.4-3.7z" fill="#fff"/>
<text x="6.5" y="75.6" font-size="10" fill="#e8e8e8" textLength="48.5" lengthAdjust="spacingAndGlyphs">SDR Toolkit</text>
<rect x="7" y="79" width="136" height="188" fill="#222"/>
<path d="M15.2 91.3l2.6 0 0-2.6z" fill="#555"/>
<text x="22" y="93.2" font-size="9.1" fill="#f0f0f0" font-weight="bold" textLength="34.8" lengthAdjust="spacingAndGlyphs">Welcome</text>
<text x="31.2" y="105.3" font-size="9.1" fill="#f0f0f0" textLength="34.3" lengthAdjust="spacingAndGlyphs">Welcome</text>
<text x="31.2" y="115.7" font-size="9.1" fill="#f0f0f0" textLength="28.5" lengthAdjust="spacingAndGlyphs">Options</text>
<path d="M15.2 125l2.6 0 0-2.6z" fill="#555"/>
<text x="22" y="126.9" font-size="9.1" fill="#f0f0f0" font-weight="bold" textLength="30.4" lengthAdjust="spacingAndGlyphs">Analysis</text>
<text x="31.2" y="139.2" font-size="9.1" fill="#f0f0f0" textLength="56.2" lengthAdjust="spacingAndGlyphs">Dynamic Range</text>
<text x="31.2" y="149.4" font-size="9.1" fill="#f0f0f0" textLength="53.9" lengthAdjust="spacingAndGlyphs">Grayscale - 2pt</text>
<text x="31.2" y="160.6" font-size="9.1" fill="#f0f0f0" textLength="61.2" lengthAdjust="spacingAndGlyphs">Grayscale - Multi</text>
<text x="31.2" y="171.8" font-size="9.1" fill="#f0f0f0" textLength="46.6" lengthAdjust="spacingAndGlyphs">Color Gamut</text>
<text x="31.2" y="182.5" font-size="9.1" fill="#f0f0f0" textLength="25.6" lengthAdjust="spacingAndGlyphs">3D LUT</text>
<text x="31.2" y="193.7" font-size="9.1" fill="#f0f0f0" textLength="48.5" lengthAdjust="spacingAndGlyphs">ColorChecker</text>
<rect x="30.8" y="196" width="68.4" height="10.8" fill="#f4f4f4"/>
<text x="31.2" y="204.7" font-size="9.1" fill="#333" textLength="67" lengthAdjust="spacingAndGlyphs">Saturation Sweeps</text>
<text x="31.2" y="215.8" font-size="9.1" fill="#f0f0f0" textLength="69.5" lengthAdjust="spacingAndGlyphs">Luminance Sweeps</text>
<text x="31.2" y="226.9" font-size="9.1" fill="#f0f0f0" textLength="66" lengthAdjust="spacingAndGlyphs">Screen Uniformity</text>
<text x="31.2" y="238.1" font-size="9.1" fill="#f0f0f0" textLength="64" lengthAdjust="spacingAndGlyphs">Screen Angularity</text>
<text x="31.2" y="248.5" font-size="9.1" fill="#f0f0f0" textLength="56" lengthAdjust="spacingAndGlyphs">Screen Stability</text>
<text x="31.2" y="259.6" font-size="9.1" fill="#f0f0f0" textLength="72.4" lengthAdjust="spacingAndGlyphs">Spectral Power Dist.</text>
<text x="157.5" y="123.6" font-size="49" fill="#ececec" textLength="355" lengthAdjust="spacingAndGlyphs" stroke="#ececec" stroke-width="0.64">Saturation Sweeps</text>
<text x="743.3" y="114.9" font-size="22.2" fill="#ececec" textLength="64.5" lengthAdjust="spacingAndGlyphs" stroke="#ececec" stroke-width="0.29">Levels:</text>
<rect x="816" y="92" width="359" height="28.5" fill="url(#gDD)" stroke="#2a2a2a" stroke-width="1"/>
<text x="820.5" y="115.8" font-size="19.8" fill="#ececec" textLength="95" lengthAdjust="spacingAndGlyphs" stroke="#ececec" stroke-width="0.26">20% Sweeps</text>
<path d="M1159.2 103.6h9.8l-4.9 6.4z" fill="#000"/>
<text x="281.3" y="186.2" font-size="22.2" fill="#ececec" textLength="115" lengthAdjust="spacingAndGlyphs" stroke="#ececec" stroke-width="0.29">dE Formula:</text>
<rect x="404.5" y="162.5" width="142" height="29" fill="url(#gDD)" stroke="#2a2a2a" stroke-width="1"/>
<text x="409" y="186.2" font-size="19.8" fill="#ececec" textLength="37.5" lengthAdjust="spacingAndGlyphs" stroke="#ececec" stroke-width="0.26">2000</text>
<path d="M530.8 175h10.4l-5.2 6z" fill="#000"/>
<text x="203.5" y="764.4" font-size="35" fill="#ececec" textLength="248" lengthAdjust="spacingAndGlyphs" stroke="#ececec" stroke-width="0.45">Avg dE2000: 0.38</text>
<text x="198.8" y="811.1" font-size="35" fill="#ececec" textLength="258" lengthAdjust="spacingAndGlyphs" stroke="#ececec" stroke-width="0.45">Max dE2000: 1.18</text>
<text x="165" y="866.7" font-size="35" fill="#ececec" textLength="233.5" lengthAdjust="spacingAndGlyphs" stroke="#ececec" stroke-width="0.45">Current Reading</text>
<text x="165.5" y="908.5" font-size="30" fill="#ececec" textLength="109" lengthAdjust="spacingAndGlyphs" stroke="#ececec" stroke-width="0.39">x: 0.4191</text>
<text x="331.5" y="908.5" font-size="30" fill="#ececec" textLength="110" lengthAdjust="spacingAndGlyphs" stroke="#ececec" stroke-width="0.39">y: 0.5064</text>
<text x="165.5" y="955.6" font-size="30" fill="#ececec" textLength="102.5" lengthAdjust="spacingAndGlyphs" stroke="#ececec" stroke-width="0.39">fL: 67.28</text>
<text x="165.5" y="994.3" font-size="30" fill="#ececec" textLength="169" lengthAdjust="spacingAndGlyphs" stroke="#ececec" stroke-width="0.39">cd/m²: 230.53</text>
<rect x="195.8" y="229.1" width="330.9" height="446.7" fill="#232323"/>
<text x="342.3" y="224" font-size="16.8" fill="#d8d8d8" text-anchor="middle" textLength="84.5" lengthAdjust="spacingAndGlyphs" stroke="#d8d8d8" stroke-width="0.22">DeltaE 2000</text>
<line x1="239.2" y1="229.1" x2="239.2" y2="675.8" stroke="#8a8a8a" stroke-width="1.5"/>
<line x1="284" y1="229.1" x2="284" y2="675.8" stroke="#8a8a8a" stroke-width="1.5"/>
<line x1="327.1" y1="229.1" x2="327.1" y2="675.8" stroke="#8a8a8a" stroke-width="1.5"/>
<line x1="372.1" y1="229.1" x2="372.1" y2="675.8" stroke="#8a8a8a" stroke-width="1.5"/>
<line x1="415.4" y1="229.1" x2="415.4" y2="675.8" stroke="#8a8a8a" stroke-width="1.5"/>
<line x1="460.6" y1="229.1" x2="460.6" y2="675.8" stroke="#8a8a8a" stroke-width="1.5"/>
<line x1="503.1" y1="229.1" x2="503.1" y2="675.8" stroke="#8a8a8a" stroke-width="1.5"/>
<path d="M195.8 675.8V229.1H526.7V675.8H189.8" fill="none" stroke="#969696" stroke-width="1.9"/>
<line x1="189.8" y1="229.1" x2="195.8" y2="229.1" stroke="#d4d4d4" stroke-width="1.5"/>
<line x1="189.8" y1="304.2" x2="195.8" y2="304.2" stroke="#d4d4d4" stroke-width="1.5"/>
<line x1="189.8" y1="378.8" x2="195.8" y2="378.8" stroke="#d4d4d4" stroke-width="1.5"/>
<line x1="189.8" y1="452.6" x2="195.8" y2="452.6" stroke="#d4d4d4" stroke-width="1.5"/>
<line x1="189.8" y1="526.8" x2="195.8" y2="526.8" stroke="#d4d4d4" stroke-width="1.5"/>
<line x1="189.8" y1="602.3" x2="195.8" y2="602.3" stroke="#d4d4d4" stroke-width="1.5"/>
<line x1="195.8" y1="675.8" x2="195.8" y2="682.3" stroke="#d4d4d4" stroke-width="1.5"/>
<text x="195.3" y="700.3" font-size="16.8" fill="#d8d8d8" text-anchor="middle" textLength="8.41" lengthAdjust="spacingAndGlyphs" stroke="#d8d8d8" stroke-width="0.22">0</text>
<line x1="239.2" y1="675.8" x2="239.2" y2="682.3" stroke="#d4d4d4" stroke-width="1.5"/>
<text x="238.7" y="700.3" font-size="16.8" fill="#d8d8d8" text-anchor="middle" textLength="8.41" lengthAdjust="spacingAndGlyphs" stroke="#d8d8d8" stroke-width="0.22">2</text>
<line x1="284" y1="675.8" x2="284" y2="682.3" stroke="#d4d4d4" stroke-width="1.5"/>
<text x="283.5" y="700.3" font-size="16.8" fill="#d8d8d8" text-anchor="middle" textLength="8.41" lengthAdjust="spacingAndGlyphs" stroke="#d8d8d8" stroke-width="0.22">4</text>
<line x1="327.1" y1="675.8" x2="327.1" y2="682.3" stroke="#d4d4d4" stroke-width="1.5"/>
<text x="326.6" y="700.3" font-size="16.8" fill="#d8d8d8" text-anchor="middle" textLength="8.41" lengthAdjust="spacingAndGlyphs" stroke="#d8d8d8" stroke-width="0.22">6</text>
<line x1="372.1" y1="675.8" x2="372.1" y2="682.3" stroke="#d4d4d4" stroke-width="1.5"/>
<text x="371.6" y="700.3" font-size="16.8" fill="#d8d8d8" text-anchor="middle" textLength="8.41" lengthAdjust="spacingAndGlyphs" stroke="#d8d8d8" stroke-width="0.22">8</text>
<line x1="415.4" y1="675.8" x2="415.4" y2="682.3" stroke="#d4d4d4" stroke-width="1.5"/>
<text x="414.9" y="700.3" font-size="16.8" fill="#d8d8d8" text-anchor="middle" textLength="16.82" lengthAdjust="spacingAndGlyphs" stroke="#d8d8d8" stroke-width="0.22">10</text>
<line x1="460.6" y1="675.8" x2="460.6" y2="682.3" stroke="#d4d4d4" stroke-width="1.5"/>
<text x="460.1" y="700.3" font-size="16.8" fill="#d8d8d8" text-anchor="middle" textLength="16.82" lengthAdjust="spacingAndGlyphs" stroke="#d8d8d8" stroke-width="0.22">12</text>
<line x1="503.1" y1="675.8" x2="503.1" y2="682.3" stroke="#d4d4d4" stroke-width="1.5"/>
<text x="502.6" y="700.3" font-size="16.8" fill="#d8d8d8" text-anchor="middle" textLength="16.82" lengthAdjust="spacingAndGlyphs" stroke="#d8d8d8" stroke-width="0.22">14</text>
<text x="195" y="273.25" font-size="17.2" fill="#d8d8d8" text-anchor="end" textLength="38.27" lengthAdjust="spacingAndGlyphs" stroke="#d8d8d8" stroke-width="0.22">100%</text>
<text x="195" y="348.1" font-size="17.2" fill="#d8d8d8" text-anchor="end" textLength="29.95" lengthAdjust="spacingAndGlyphs" stroke="#d8d8d8" stroke-width="0.22">80%</text>
<text x="195" y="422.3" font-size="17.2" fill="#d8d8d8" text-anchor="end" textLength="29.95" lengthAdjust="spacingAndGlyphs" stroke="#d8d8d8" stroke-width="0.22">60%</text>
<text x="195" y="496.3" font-size="17.2" fill="#d8d8d8" text-anchor="end" textLength="29.95" lengthAdjust="spacingAndGlyphs" stroke="#d8d8d8" stroke-width="0.22">40%</text>
<text x="195" y="571.15" font-size="17.2" fill="#d8d8d8" text-anchor="end" textLength="29.95" lengthAdjust="spacingAndGlyphs" stroke="#d8d8d8" stroke-width="0.22">20%</text>
<text x="195" y="645.65" font-size="17.2" fill="#d8d8d8" text-anchor="end" textLength="24.97" lengthAdjust="spacingAndGlyphs" stroke="#d8d8d8" stroke-width="0.22">100</text>
<rect x="196.5" y="236.4" width="1.3" height="6.4" fill="#000"/>
<rect x="196.5" y="244.3" width="1.3" height="6.4" fill="#000"/>
<rect x="196.5" y="252.1" width="4.6" height="6.6" fill="#000"/>
<rect x="196.7" y="253.2" width="3" height="4.4" fill="#2222e0"/>
<rect x="196.5" y="260.3" width="8.9" height="6.6" fill="#000"/>
<rect x="196.7" y="261.4" width="7.3" height="4.4" fill="#20c8c8"/>
<rect x="196.5" y="268.2" width="5.6" height="6.6" fill="#000"/>
<rect x="196.7" y="269.3" width="4" height="4.4" fill="#d020d0"/>
<rect x="196.5" y="276.2" width="4.3" height="6.6" fill="#000"/>
<rect x="196.7" y="277.3" width="2.7" height="4.4" fill="#d8d810"/>
<rect x="196.5" y="311.2" width="4.6" height="6.6" fill="#000"/>
<rect x="196.7" y="312.3" width="3" height="4.4" fill="#e04040"/>
<rect x="196.5" y="319.1" width="1.3" height="6.4" fill="#000"/>
<rect x="196.5" y="326.7" width="2.8" height="6.6" fill="#000"/>
<rect x="196.7" y="327.8" width="1.2" height="4.4" fill="#5050e0"/>
<rect x="196.5" y="334.3" width="8.9" height="6.6" fill="#000"/>
<rect x="196.7" y="335.4" width="7.3" height="4.4" fill="#50c8c8"/>
<rect x="196.5" y="342.2" width="8.9" height="6.6" fill="#000"/>
<rect x="196.7" y="343.3" width="7.3" height="4.4" fill="#d050d0"/>
<rect x="196.5" y="350.1" width="4.3" height="6.6" fill="#000"/>
<rect x="196.7" y="351.2" width="2.7" height="4.4" fill="#d8d850"/>
<rect x="196.5" y="385" width="7.2" height="6.6" fill="#000"/>
<rect x="196.7" y="386.1" width="5.6" height="4.4" fill="#d85858"/>
<rect x="196.5" y="392.9" width="5.7" height="6.6" fill="#000"/>
<rect x="196.7" y="394" width="4.1" height="4.4" fill="#58c858"/>
<rect x="196.5" y="400.7" width="6.9" height="6.6" fill="#000"/>
<rect x="196.7" y="401.8" width="5.3" height="4.4" fill="#6868d8"/>
<rect x="196.5" y="408.7" width="11.9" height="6.6" fill="#000"/>
<rect x="196.7" y="409.8" width="10.3" height="4.4" fill="#78c8c8"/>
<rect x="196.5" y="416.4" width="5.8" height="6.6" fill="#000"/>
<rect x="196.7" y="417.5" width="4.2" height="4.4" fill="#d070d0"/>
<rect x="196.5" y="424.5" width="8.9" height="6.6" fill="#000"/>
<rect x="196.7" y="425.6" width="7.3" height="4.4" fill="#d0d070"/>
<rect x="196.5" y="460.5" width="11.9" height="6.6" fill="#000"/>
<rect x="196.7" y="461.6" width="10.3" height="4.4" fill="#d87070"/>
<rect x="196.5" y="468.2" width="7.2" height="6.6" fill="#000"/>
<rect x="196.7" y="469.3" width="5.6" height="4.4" fill="#70c870"/>
<rect x="196.5" y="476" width="5.8" height="6.6" fill="#000"/>
<rect x="196.7" y="477.1" width="4.2" height="4.4" fill="#7878d0"/>
<rect x="196.5" y="484.1" width="13.4" height="6.6" fill="#000"/>
<rect x="196.7" y="485.2" width="11.8" height="4.4" fill="#90c8c8"/>
<rect x="196.5" y="491.7" width="8.9" height="6.6" fill="#000"/>
<rect x="196.7" y="492.8" width="7.3" height="4.4" fill="#c888c8"/>
<rect x="196.5" y="499.7" width="8.9" height="6.6" fill="#000"/>
<rect x="196.7" y="500.8" width="7.3" height="4.4" fill="#c8c888"/>
<rect x="196.5" y="534.6" width="26.1" height="6.6" fill="#000"/>
<rect x="196.7" y="535.7" width="24.5" height="4.4" fill="#d09898"/>
<rect x="196.5" y="542.2" width="10.4" height="6.6" fill="#000"/>
<rect x="196.7" y="543.3" width="8.8" height="4.4" fill="#98c898"/>
<rect x="196.5" y="550.3" width="4.3" height="6.6" fill="#000"/>
<rect x="196.7" y="551.4" width="2.7" height="4.4" fill="#9898d0"/>
<rect x="196.5" y="558.2" width="14.8" height="6.6" fill="#000"/>
<rect x="196.7" y="559.3" width="13.2" height="4.4" fill="#a8d0d0"/>
<rect x="196.5" y="566.1" width="8.9" height="6.6" fill="#000"/>
<rect x="196.7" y="567.2" width="7.3" height="4.4" fill="#c8a8c8"/>
<rect x="196.5" y="573.8" width="13.4" height="6.6" fill="#000"/>
<rect x="196.7" y="574.9" width="11.8" height="4.4" fill="#c8c8a8"/>
<rect x="196.5" y="655.1" width="8.2" height="6.6" fill="#000"/>
<rect x="196.7" y="656.2" width="6.6" height="4.4" fill="#f4f4f4"/>
<rect x="582.7" y="167.6" width="153.5" height="325.7" fill="#232323"/>
<line x1="582.7" y1="167.6" x2="736.2" y2="167.6" stroke="#8c8c8c" stroke-width="1.5"/>
<line x1="577.2" y1="167.6" x2="582.7" y2="167.6" stroke="#d4d4d4" stroke-width="1.5"/>
<text x="576.2" y="173.8" font-size="16.8" fill="#d8d8d8" text-anchor="end" textLength="16.82" lengthAdjust="spacingAndGlyphs" stroke="#d8d8d8" stroke-width="0.22">15</text>
<line x1="582.7" y1="221.5" x2="736.2" y2="221.5" stroke="#8c8c8c" stroke-width="1.5"/>
<line x1="577.2" y1="221.5" x2="582.7" y2="221.5" stroke="#d4d4d4" stroke-width="1.5"/>
<text x="576.2" y="227.7" font-size="16.8" fill="#d8d8d8" text-anchor="end" textLength="16.82" lengthAdjust="spacingAndGlyphs" stroke="#d8d8d8" stroke-width="0.22">10</text>
<line x1="582.7" y1="276" x2="736.2" y2="276" stroke="#8c8c8c" stroke-width="1.5"/>
<line x1="577.2" y1="276" x2="582.7" y2="276" stroke="#d4d4d4" stroke-width="1.5"/>
<text x="576.2" y="282.2" font-size="16.8" fill="#d8d8d8" text-anchor="end" textLength="8.41" lengthAdjust="spacingAndGlyphs" stroke="#d8d8d8" stroke-width="0.22">5</text>
<line x1="582.7" y1="331.7" x2="736.2" y2="331.7" stroke="#8c8c8c" stroke-width="1.5"/>
<line x1="577.2" y1="331.7" x2="582.7" y2="331.7" stroke="#d4d4d4" stroke-width="1.5"/>
<text x="576.2" y="337.9" font-size="16.8" fill="#d8d8d8" text-anchor="end" textLength="8.41" lengthAdjust="spacingAndGlyphs" stroke="#d8d8d8" stroke-width="0.22">0</text>
<line x1="582.7" y1="385" x2="736.2" y2="385" stroke="#8c8c8c" stroke-width="1.5"/>
<line x1="577.2" y1="385" x2="582.7" y2="385" stroke="#d4d4d4" stroke-width="1.5"/>
<text x="576.2" y="391.2" font-size="16.8" fill="#d8d8d8" text-anchor="end" textLength="13.44" lengthAdjust="spacingAndGlyphs" stroke="#d8d8d8" stroke-width="0.22">-5</text>
<line x1="582.7" y1="440.4" x2="736.2" y2="440.4" stroke="#8c8c8c" stroke-width="1.5"/>
<line x1="577.2" y1="440.4" x2="582.7" y2="440.4" stroke="#d4d4d4" stroke-width="1.5"/>
<text x="576.2" y="446.6" font-size="16.8" fill="#d8d8d8" text-anchor="end" textLength="21.85" lengthAdjust="spacingAndGlyphs" stroke="#d8d8d8" stroke-width="0.22">-10</text>
<line x1="582.7" y1="493.3" x2="736.2" y2="493.3" stroke="#8c8c8c" stroke-width="1.5"/>
<line x1="577.2" y1="493.3" x2="582.7" y2="493.3" stroke="#d4d4d4" stroke-width="1.5"/>
<text x="576.2" y="499.5" font-size="16.8" fill="#d8d8d8" text-anchor="end" textLength="21.85" lengthAdjust="spacingAndGlyphs" stroke="#d8d8d8" stroke-width="0.22">-15</text>
<rect x="582.7" y="166.2" width="153.5" height="327.1" fill="none" stroke="#969696" stroke-width="1.8"/>
<line x1="582.7" y1="493.3" x2="582.7" y2="500.3" stroke="#d4d4d4" stroke-width="1.5"/>
<line x1="736.2" y1="493.3" x2="736.2" y2="500.3" stroke="#d4d4d4" stroke-width="1.5"/>
<text x="644.95" y="160.9" font-size="16.8" fill="#d8d8d8" text-anchor="middle" textLength="43.71" lengthAdjust="spacingAndGlyphs" stroke="#d8d8d8" stroke-width="0.22">DeltaL</text>
<text x="659.45" y="512" font-size="16.8" fill="#d8d8d8" text-anchor="middle" textLength="38.67" lengthAdjust="spacingAndGlyphs" stroke="#d8d8d8" stroke-width="0.22">100%</text>
<rect x="598" y="327.8" width="122.8" height="3.4" fill="#000"/>
<rect x="792.5" y="167.6" width="153.3" height="325.7" fill="#232323"/>
<line x1="792.5" y1="167.6" x2="945.8" y2="167.6" stroke="#8c8c8c" stroke-width="1.5"/>
<line x1="787" y1="167.6" x2="792.5" y2="167.6" stroke="#d4d4d4" stroke-width="1.5"/>
<text x="786" y="173.8" font-size="16.8" fill="#d8d8d8" text-anchor="end" textLength="16.82" lengthAdjust="spacingAndGlyphs" stroke="#d8d8d8" stroke-width="0.22">15</text>
<line x1="792.5" y1="221.5" x2="945.8" y2="221.5" stroke="#8c8c8c" stroke-width="1.5"/>
<line x1="787" y1="221.5" x2="792.5" y2="221.5" stroke="#d4d4d4" stroke-width="1.5"/>
<text x="786" y="227.7" font-size="16.8" fill="#d8d8d8" text-anchor="end" textLength="16.82" lengthAdjust="spacingAndGlyphs" stroke="#d8d8d8" stroke-width="0.22">10</text>
<line x1="792.5" y1="276" x2="945.8" y2="276" stroke="#8c8c8c" stroke-width="1.5"/>
<line x1="787" y1="276" x2="792.5" y2="276" stroke="#d4d4d4" stroke-width="1.5"/>
<text x="786" y="282.2" font-size="16.8" fill="#d8d8d8" text-anchor="end" textLength="8.41" lengthAdjust="spacingAndGlyphs" stroke="#d8d8d8" stroke-width="0.22">5</text>
<line x1="792.5" y1="331.7" x2="945.8" y2="331.7" stroke="#8c8c8c" stroke-width="1.5"/>
<line x1="787" y1="331.7" x2="792.5" y2="331.7" stroke="#d4d4d4" stroke-width="1.5"/>
<text x="786" y="337.9" font-size="16.8" fill="#d8d8d8" text-anchor="end" textLength="8.41" lengthAdjust="spacingAndGlyphs" stroke="#d8d8d8" stroke-width="0.22">0</text>
<line x1="792.5" y1="385" x2="945.8" y2="385" stroke="#8c8c8c" stroke-width="1.5"/>
<line x1="787" y1="385" x2="792.5" y2="385" stroke="#d4d4d4" stroke-width="1.5"/>
<text x="786" y="391.2" font-size="16.8" fill="#d8d8d8" text-anchor="end" textLength="13.44" lengthAdjust="spacingAndGlyphs" stroke="#d8d8d8" stroke-width="0.22">-5</text>
<line x1="792.5" y1="440.4" x2="945.8" y2="440.4" stroke="#8c8c8c" stroke-width="1.5"/>
<line x1="787" y1="440.4" x2="792.5" y2="440.4" stroke="#d4d4d4" stroke-width="1.5"/>
<text x="786" y="446.6" font-size="16.8" fill="#d8d8d8" text-anchor="end" textLength="21.85" lengthAdjust="spacingAndGlyphs" stroke="#d8d8d8" stroke-width="0.22">-10</text>
<line x1="792.5" y1="493.3" x2="945.8" y2="493.3" stroke="#8c8c8c" stroke-width="1.5"/>
<line x1="787" y1="493.3" x2="792.5" y2="493.3" stroke="#d4d4d4" stroke-width="1.5"/>
<text x="786" y="499.5" font-size="16.8" fill="#d8d8d8" text-anchor="end" textLength="21.85" lengthAdjust="spacingAndGlyphs" stroke="#d8d8d8" stroke-width="0.22">-15</text>
<rect x="792.5" y="166.2" width="153.3" height="327.1" fill="none" stroke="#969696" stroke-width="1.8"/>
<line x1="792.5" y1="493.3" x2="792.5" y2="500.3" stroke="#d4d4d4" stroke-width="1.5"/>
<line x1="945.8" y1="493.3" x2="945.8" y2="500.3" stroke="#d4d4d4" stroke-width="1.5"/>
<text x="854.65" y="160.9" font-size="16.8" fill="#d8d8d8" text-anchor="middle" textLength="46.22" lengthAdjust="spacingAndGlyphs" stroke="#d8d8d8" stroke-width="0.22">DeltaC</text>
<text x="869.15" y="512" font-size="16.8" fill="#d8d8d8" text-anchor="middle" textLength="38.67" lengthAdjust="spacingAndGlyphs" stroke="#d8d8d8" stroke-width="0.22">100%</text>
<rect x="807.7" y="324.2" width="122.3" height="6.7" fill="#000"/>
<rect x="808.7" y="325.4" width="120.3" height="4.1" fill="#d6d600"/>
<rect x="1001.2" y="167.6" width="154" height="325.7" fill="#232323"/>
<line x1="1001.2" y1="167.6" x2="1155.2" y2="167.6" stroke="#8c8c8c" stroke-width="1.5"/>
<line x1="995.7" y1="167.6" x2="1001.2" y2="167.6" stroke="#d4d4d4" stroke-width="1.5"/>
<text x="994.7" y="173.8" font-size="16.8" fill="#d8d8d8" text-anchor="end" textLength="16.82" lengthAdjust="spacingAndGlyphs" stroke="#d8d8d8" stroke-width="0.22">15</text>
<line x1="1001.2" y1="221.5" x2="1155.2" y2="221.5" stroke="#8c8c8c" stroke-width="1.5"/>
<line x1="995.7" y1="221.5" x2="1001.2" y2="221.5" stroke="#d4d4d4" stroke-width="1.5"/>
<text x="994.7" y="227.7" font-size="16.8" fill="#d8d8d8" text-anchor="end" textLength="16.82" lengthAdjust="spacingAndGlyphs" stroke="#d8d8d8" stroke-width="0.22">10</text>
<line x1="1001.2" y1="276" x2="1155.2" y2="276" stroke="#8c8c8c" stroke-width="1.5"/>
<line x1="995.7" y1="276" x2="1001.2" y2="276" stroke="#d4d4d4" stroke-width="1.5"/>
<text x="994.7" y="282.2" font-size="16.8" fill="#d8d8d8" text-anchor="end" textLength="8.41" lengthAdjust="spacingAndGlyphs" stroke="#d8d8d8" stroke-width="0.22">5</text>
<line x1="1001.2" y1="331.7" x2="1155.2" y2="331.7" stroke="#8c8c8c" stroke-width="1.5"/>
<line x1="995.7" y1="331.7" x2="1001.2" y2="331.7" stroke="#d4d4d4" stroke-width="1.5"/>
<text x="994.7" y="337.9" font-size="16.8" fill="#d8d8d8" text-anchor="end" textLength="8.41" lengthAdjust="spacingAndGlyphs" stroke="#d8d8d8" stroke-width="0.22">0</text>
<line x1="1001.2" y1="385" x2="1155.2" y2="385" stroke="#8c8c8c" stroke-width="1.5"/>
<line x1="995.7" y1="385" x2="1001.2" y2="385" stroke="#d4d4d4" stroke-width="1.5"/>
<text x="994.7" y="391.2" font-size="16.8" fill="#d8d8d8" text-anchor="end" textLength="13.44" lengthAdjust="spacingAndGlyphs" stroke="#d8d8d8" stroke-width="0.22">-5</text>
<line x1="1001.2" y1="440.4" x2="1155.2" y2="440.4" stroke="#8c8c8c" stroke-width="1.5"/>
<line x1="995.7" y1="440.4" x2="1001.2" y2="440.4" stroke="#d4d4d4" stroke-width="1.5"/>
<text x="994.7" y="446.6" font-size="16.8" fill="#d8d8d8" text-anchor="end" textLength="21.85" lengthAdjust="spacingAndGlyphs" stroke="#d8d8d8" stroke-width="0.22">-10</text>
<line x1="1001.2" y1="493.3" x2="1155.2" y2="493.3" stroke="#8c8c8c" stroke-width="1.5"/>
<line x1="995.7" y1="493.3" x2="1001.2" y2="493.3" stroke="#d4d4d4" stroke-width="1.5"/>
<text x="994.7" y="499.5" font-size="16.8" fill="#d8d8d8" text-anchor="end" textLength="21.85" lengthAdjust="spacingAndGlyphs" stroke="#d8d8d8" stroke-width="0.22">-15</text>
<rect x="1001.2" y="166.2" width="154" height="327.1" fill="none" stroke="#969696" stroke-width="1.8"/>
<line x1="1001.2" y1="493.3" x2="1001.2" y2="500.3" stroke="#d4d4d4" stroke-width="1.5"/>
<line x1="1155.2" y1="493.3" x2="1155.2" y2="500.3" stroke="#d4d4d4" stroke-width="1.5"/>
<text x="1063.7" y="160.9" font-size="16.8" fill="#d8d8d8" text-anchor="middle" textLength="46.22" lengthAdjust="spacingAndGlyphs" stroke="#d8d8d8" stroke-width="0.22">DeltaH</text>
<text x="1078.2" y="512" font-size="16.8" fill="#d8d8d8" text-anchor="middle" textLength="38.67" lengthAdjust="spacingAndGlyphs" stroke="#d8d8d8" stroke-width="0.22">100%</text>
<rect x="1017" y="327.8" width="122" height="3.4" fill="#000"/>
<rect x="548" y="524" width="628" height="188" fill="#000"/>
<rect x="570" y="532.5" width="105" height="152" fill="#c3c3a6" stroke="#f4f4ec" stroke-width="1.5"/>
<text x="622.5" y="702.2" font-size="13" fill="#fff" text-anchor="middle" textLength="23.94" lengthAdjust="spacingAndGlyphs" stroke="#fff" stroke-width="0.17">20%</text>
<rect x="692.6" y="532.5" width="105" height="152" fill="#c3c389" stroke="#f4f4ec" stroke-width="1.5"/>
<text x="745.1" y="702.2" font-size="13" fill="#fff" text-anchor="middle" textLength="23.94" lengthAdjust="spacingAndGlyphs" stroke="#fff" stroke-width="0.17">40%</text>
<rect x="815.2" y="532.5" width="105" height="152" fill="#c2c266" stroke="#f4f4ec" stroke-width="1.5"/>
<text x="867.7" y="702.2" font-size="13" fill="#fff" text-anchor="middle" textLength="23.94" lengthAdjust="spacingAndGlyphs" stroke="#fff" stroke-width="0.17">60%</text>
<rect x="937.8" y="532.5" width="105" height="152" fill="#c2c24e" stroke="#f4f4ec" stroke-width="1.5"/>
<text x="990.3" y="702.2" font-size="13" fill="#fff" text-anchor="middle" textLength="23.94" lengthAdjust="spacingAndGlyphs" stroke="#fff" stroke-width="0.17">80%</text>
<rect x="1060.4" y="532.5" width="105" height="152" fill="#c2c200" stroke="#f4f4ec" stroke-width="1.5"/>
<text x="1112.9" y="702.2" font-size="13" fill="#fff" text-anchor="middle" textLength="30.59" lengthAdjust="spacingAndGlyphs" stroke="#fff" stroke-width="0.17">100%</text>
<text transform="translate(562.3 565) rotate(-90)" font-size="13" fill="#fff" text-anchor="middle" textLength="39.5" lengthAdjust="spacingAndGlyphs">Actual</text>
<text transform="translate(562.3 651.5) rotate(-90)" font-size="13" fill="#fff" text-anchor="middle" textLength="40" lengthAdjust="spacingAndGlyphs">Target</text>
<rect x="516.3" y="773.7" width="278" height="208" fill="#232323"/>
<text x="645" y="766.6" font-size="15.6" fill="#d8d8d8" text-anchor="middle" textLength="88" lengthAdjust="spacingAndGlyphs" stroke="#d8d8d8" stroke-width="0.2">RGB Balance</text>
<line x1="516.3" y1="773.7" x2="794.3" y2="773.7" stroke="#8c8c8c" stroke-width="1.5"/>
<line x1="510.8" y1="773.7" x2="516.3" y2="773.7" stroke="#d4d4d4" stroke-width="1.5"/>
<text x="510.3" y="779.5" font-size="16.8" fill="#d8d8d8" text-anchor="end" textLength="8.41" lengthAdjust="spacingAndGlyphs" stroke="#d8d8d8" stroke-width="0.22">4</text>
<line x1="516.3" y1="825.7" x2="794.3" y2="825.7" stroke="#8c8c8c" stroke-width="1.5"/>
<line x1="510.8" y1="825.7" x2="516.3" y2="825.7" stroke="#d4d4d4" stroke-width="1.5"/>
<text x="510.3" y="831.5" font-size="16.8" fill="#d8d8d8" text-anchor="end" textLength="8.41" lengthAdjust="spacingAndGlyphs" stroke="#d8d8d8" stroke-width="0.22">2</text>
<line x1="516.3" y1="877.7" x2="794.3" y2="877.7" stroke="#8c8c8c" stroke-width="1.5"/>
<line x1="510.8" y1="877.7" x2="516.3" y2="877.7" stroke="#d4d4d4" stroke-width="1.5"/>
<text x="510.3" y="883.5" font-size="16.8" fill="#d8d8d8" text-anchor="end" textLength="8.41" lengthAdjust="spacingAndGlyphs" stroke="#d8d8d8" stroke-width="0.22">0</text>
<line x1="516.3" y1="929.7" x2="794.3" y2="929.7" stroke="#8c8c8c" stroke-width="1.5"/>
<line x1="510.8" y1="929.7" x2="516.3" y2="929.7" stroke="#d4d4d4" stroke-width="1.5"/>
<text x="510.3" y="935.5" font-size="16.8" fill="#d8d8d8" text-anchor="end" textLength="13.44" lengthAdjust="spacingAndGlyphs" stroke="#d8d8d8" stroke-width="0.22">-2</text>
<line x1="516.3" y1="981.7" x2="794.3" y2="981.7" stroke="#8c8c8c" stroke-width="1.5"/>
<line x1="510.8" y1="981.7" x2="516.3" y2="981.7" stroke="#d4d4d4" stroke-width="1.5"/>
<text x="510.3" y="987.5" font-size="16.8" fill="#d8d8d8" text-anchor="end" textLength="13.44" lengthAdjust="spacingAndGlyphs" stroke="#d8d8d8" stroke-width="0.22">-4</text>
<rect x="516.3" y="772.3" width="278" height="209.4" fill="none" stroke="#969696" stroke-width="1.8"/>
<line x1="516.3" y1="981.7" x2="516.3" y2="987.7" stroke="#d4d4d4" stroke-width="1.5"/>
<line x1="794.3" y1="981.7" x2="794.3" y2="987.7" stroke="#d4d4d4" stroke-width="1.5"/>
<text x="655" y="1000" font-size="16.8" fill="#d8d8d8" text-anchor="middle" textLength="38.67" lengthAdjust="spacingAndGlyphs" stroke="#d8d8d8" stroke-width="0.22">100%</text>
<rect x="543.3" y="877" width="74" height="2.4" fill="#000"/>
<rect x="616.8" y="861.2" width="72.6" height="17" fill="url(#gGrn)" stroke="#000" stroke-width="1.4"/>
<rect x="690.8" y="878" width="73" height="82" fill="url(#gBlu)" stroke="#000" stroke-width="1.4"/>
<text x="1550.5" y="111.6" font-size="17.6" fill="#d8d8d8" text-anchor="middle" textLength="90" lengthAdjust="spacingAndGlyphs" stroke="#d8d8d8" stroke-width="0.23">CIE 1976 u'v'</text>
<rect x="1230.3" y="117" width="678" height="569.8" fill="none" stroke="#969696" stroke-width="1.8"/>
<line x1="1224.3" y1="687.2" x2="1230.3" y2="687.2" stroke="#d8d8d8" stroke-width="1.6"/>
<text x="1223" y="693.5" font-size="17.6" fill="#d8d8d8" text-anchor="end" textLength="8.81" lengthAdjust="spacingAndGlyphs" stroke="#d8d8d8" stroke-width="0.23">0</text>
<line x1="1230.1" y1="686.8" x2="1230.1" y2="694.3" stroke="#d8d8d8" stroke-width="1.6"/>
<text x="1229.6" y="712.3" font-size="17.6" fill="#d8d8d8" text-anchor="middle" textLength="8.81" lengthAdjust="spacingAndGlyphs" stroke="#d8d8d8" stroke-width="0.23">0</text>
<line x1="1224.3" y1="639.82" x2="1230.3" y2="639.82" stroke="#d8d8d8" stroke-width="1.6"/>
<text x="1223" y="646.12" font-size="17.6" fill="#d8d8d8" text-anchor="end" textLength="30.83" lengthAdjust="spacingAndGlyphs" stroke="#d8d8d8" stroke-width="0.23">0.05</text>
<line x1="1286.54" y1="686.8" x2="1286.54" y2="694.3" stroke="#d8d8d8" stroke-width="1.6"/>
<text x="1286.04" y="712.3" font-size="17.6" fill="#d8d8d8" text-anchor="middle" textLength="30.83" lengthAdjust="spacingAndGlyphs" stroke="#d8d8d8" stroke-width="0.23">0.05</text>
<line x1="1224.3" y1="592.44" x2="1230.3" y2="592.44" stroke="#d8d8d8" stroke-width="1.6"/>
<text x="1223" y="598.74" font-size="17.6" fill="#d8d8d8" text-anchor="end" textLength="22.02" lengthAdjust="spacingAndGlyphs" stroke="#d8d8d8" stroke-width="0.23">0.1</text>
<line x1="1342.99" y1="686.8" x2="1342.99" y2="694.3" stroke="#d8d8d8" stroke-width="1.6"/>
<text x="1342.49" y="712.3" font-size="17.6" fill="#d8d8d8" text-anchor="middle" textLength="22.02" lengthAdjust="spacingAndGlyphs" stroke="#d8d8d8" stroke-width="0.23">0.1</text>
<line x1="1224.3" y1="545.06" x2="1230.3" y2="545.06" stroke="#d8d8d8" stroke-width="1.6"/>
<text x="1223" y="551.36" font-size="17.6" fill="#d8d8d8" text-anchor="end" textLength="30.83" lengthAdjust="spacingAndGlyphs" stroke="#d8d8d8" stroke-width="0.23">0.15</text>
<line x1="1399.43" y1="686.8" x2="1399.43" y2="694.3" stroke="#d8d8d8" stroke-width="1.6"/>
<text x="1398.93" y="712.3" font-size="17.6" fill="#d8d8d8" text-anchor="middle" textLength="30.83" lengthAdjust="spacingAndGlyphs" stroke="#d8d8d8" stroke-width="0.23">0.15</text>
<line x1="1224.3" y1="497.68" x2="1230.3" y2="497.68" stroke="#d8d8d8" stroke-width="1.6"/>
<text x="1223" y="503.98" font-size="17.6" fill="#d8d8d8" text-anchor="end" textLength="22.02" lengthAdjust="spacingAndGlyphs" stroke="#d8d8d8" stroke-width="0.23">0.2</text>
<line x1="1455.88" y1="686.8" x2="1455.88" y2="694.3" stroke="#d8d8d8" stroke-width="1.6"/>
<text x="1455.38" y="712.3" font-size="17.6" fill="#d8d8d8" text-anchor="middle" textLength="22.02" lengthAdjust="spacingAndGlyphs" stroke="#d8d8d8" stroke-width="0.23">0.2</text>
<line x1="1224.3" y1="450.3" x2="1230.3" y2="450.3" stroke="#d8d8d8" stroke-width="1.6"/>
<text x="1223" y="456.6" font-size="17.6" fill="#d8d8d8" text-anchor="end" textLength="30.83" lengthAdjust="spacingAndGlyphs" stroke="#d8d8d8" stroke-width="0.23">0.25</text>
<line x1="1512.32" y1="686.8" x2="1512.32" y2="694.3" stroke="#d8d8d8" stroke-width="1.6"/>
<text x="1511.82" y="712.3" font-size="17.6" fill="#d8d8d8" text-anchor="middle" textLength="30.83" lengthAdjust="spacingAndGlyphs" stroke="#d8d8d8" stroke-width="0.23">0.25</text>
<line x1="1224.3" y1="402.92" x2="1230.3" y2="402.92" stroke="#d8d8d8" stroke-width="1.6"/>
<text x="1223" y="409.22" font-size="17.6" fill="#d8d8d8" text-anchor="end" textLength="22.02" lengthAdjust="spacingAndGlyphs" stroke="#d8d8d8" stroke-width="0.23">0.3</text>
<line x1="1568.77" y1="686.8" x2="1568.77" y2="694.3" stroke="#d8d8d8" stroke-width="1.6"/>
<text x="1568.27" y="712.3" font-size="17.6" fill="#d8d8d8" text-anchor="middle" textLength="22.02" lengthAdjust="spacingAndGlyphs" stroke="#d8d8d8" stroke-width="0.23">0.3</text>
<line x1="1224.3" y1="355.54" x2="1230.3" y2="355.54" stroke="#d8d8d8" stroke-width="1.6"/>
<text x="1223" y="361.84" font-size="17.6" fill="#d8d8d8" text-anchor="end" textLength="30.83" lengthAdjust="spacingAndGlyphs" stroke="#d8d8d8" stroke-width="0.23">0.35</text>
<line x1="1625.21" y1="686.8" x2="1625.21" y2="694.3" stroke="#d8d8d8" stroke-width="1.6"/>
<text x="1624.71" y="712.3" font-size="17.6" fill="#d8d8d8" text-anchor="middle" textLength="30.83" lengthAdjust="spacingAndGlyphs" stroke="#d8d8d8" stroke-width="0.23">0.35</text>
<line x1="1224.3" y1="308.16" x2="1230.3" y2="308.16" stroke="#d8d8d8" stroke-width="1.6"/>
<text x="1223" y="314.46" font-size="17.6" fill="#d8d8d8" text-anchor="end" textLength="22.02" lengthAdjust="spacingAndGlyphs" stroke="#d8d8d8" stroke-width="0.23">0.4</text>
<line x1="1681.66" y1="686.8" x2="1681.66" y2="694.3" stroke="#d8d8d8" stroke-width="1.6"/>
<text x="1681.16" y="712.3" font-size="17.6" fill="#d8d8d8" text-anchor="middle" textLength="22.02" lengthAdjust="spacingAndGlyphs" stroke="#d8d8d8" stroke-width="0.23">0.4</text>
<line x1="1224.3" y1="260.78" x2="1230.3" y2="260.78" stroke="#d8d8d8" stroke-width="1.6"/>
<text x="1223" y="267.08" font-size="17.6" fill="#d8d8d8" text-anchor="end" textLength="30.83" lengthAdjust="spacingAndGlyphs" stroke="#d8d8d8" stroke-width="0.23">0.45</text>
<line x1="1738.11" y1="686.8" x2="1738.11" y2="694.3" stroke="#d8d8d8" stroke-width="1.6"/>
<text x="1737.61" y="712.3" font-size="17.6" fill="#d8d8d8" text-anchor="middle" textLength="30.83" lengthAdjust="spacingAndGlyphs" stroke="#d8d8d8" stroke-width="0.23">0.45</text>
<line x1="1224.3" y1="213.4" x2="1230.3" y2="213.4" stroke="#d8d8d8" stroke-width="1.6"/>
<text x="1223" y="219.7" font-size="17.6" fill="#d8d8d8" text-anchor="end" textLength="22.02" lengthAdjust="spacingAndGlyphs" stroke="#d8d8d8" stroke-width="0.23">0.5</text>
<line x1="1794.55" y1="686.8" x2="1794.55" y2="694.3" stroke="#d8d8d8" stroke-width="1.6"/>
<text x="1794.05" y="712.3" font-size="17.6" fill="#d8d8d8" text-anchor="middle" textLength="22.02" lengthAdjust="spacingAndGlyphs" stroke="#d8d8d8" stroke-width="0.23">0.5</text>
<line x1="1224.3" y1="166.02" x2="1230.3" y2="166.02" stroke="#d8d8d8" stroke-width="1.6"/>
<text x="1223" y="172.32" font-size="17.6" fill="#d8d8d8" text-anchor="end" textLength="30.83" lengthAdjust="spacingAndGlyphs" stroke="#d8d8d8" stroke-width="0.23">0.55</text>
<line x1="1850.99" y1="686.8" x2="1850.99" y2="694.3" stroke="#d8d8d8" stroke-width="1.6"/>
<text x="1850.49" y="712.3" font-size="17.6" fill="#d8d8d8" text-anchor="middle" textLength="30.83" lengthAdjust="spacingAndGlyphs" stroke="#d8d8d8" stroke-width="0.23">0.55</text>
<rect x="1363.5" y="143.9" width="13.8" height="16.01" fill="none" stroke="#fff" stroke-width="1.75"/>
<rect x="1376.4" y="158.3" width="13.8" height="16.01" fill="none" stroke="#fff" stroke-width="1.75"/>
<rect x="1389.4" y="172.4" width="13.8" height="16.01" fill="none" stroke="#fff" stroke-width="1.75"/>
<rect x="1405.2" y="189.5" width="13.8" height="16.01" fill="none" stroke="#fff" stroke-width="1.75"/>
<rect x="1423.9" y="208.3" width="13.8" height="16.01" fill="none" stroke="#fff" stroke-width="1.75"/>
<ellipse cx="1370.4" cy="151.9" rx="4.2" ry="4.9" fill="#00c400" stroke="#0a0a0a" stroke-width="1.5"/>
<ellipse cx="1383.3" cy="166.3" rx="4.2" ry="4.9" fill="#3ec43e" stroke="#0a0a0a" stroke-width="1.5"/>
<ellipse cx="1396.7" cy="180.4" rx="4.2" ry="4.9" fill="#5ac45a" stroke="#0a0a0a" stroke-width="1.5"/>
<ellipse cx="1410.8" cy="196.3" rx="4.2" ry="4.9" fill="#76c476" stroke="#0a0a0a" stroke-width="1.5"/>
<ellipse cx="1429.6" cy="216.3" rx="4.2" ry="4.9" fill="#96c496" stroke="#0a0a0a" stroke-width="1.5"/>
<rect x="1452.7" y="153.3" width="13.8" height="16.01" fill="none" stroke="#fff" stroke-width="1.75"/>
<rect x="1451.4" y="167.8" width="13.8" height="16.01" fill="none" stroke="#fff" stroke-width="1.75"/>
<rect x="1451.4" y="179.5" width="13.8" height="16.01" fill="none" stroke="#fff" stroke-width="1.75"/>
<rect x="1449.8" y="194.9" width="13.8" height="16.01" fill="none" stroke="#fff" stroke-width="1.75"/>
<rect x="1448.5" y="212.8" width="13.8" height="16.01" fill="none" stroke="#fff" stroke-width="1.75"/>
<ellipse cx="1459.6" cy="161.3" rx="4.2" ry="4.9" fill="#c4c400" stroke="#0a0a0a" stroke-width="1.5"/>
<ellipse cx="1458.3" cy="175.6" rx="4.2" ry="4.9" fill="#c4c43e" stroke="#0a0a0a" stroke-width="1.5"/>
<ellipse cx="1458.3" cy="186.3" rx="4.2" ry="4.9" fill="#c4c45a" stroke="#0a0a0a" stroke-width="1.5"/>
<ellipse cx="1456.7" cy="202.3" rx="4.2" ry="4.9" fill="#c4c476" stroke="#0a0a0a" stroke-width="1.5"/>
<ellipse cx="1455.4" cy="219.8" rx="4.2" ry="4.9" fill="#c4c496" stroke="#0a0a0a" stroke-width="1.5"/>
<rect x="1731.6" y="182" width="13.8" height="16.01" fill="none" stroke="#fff" stroke-width="1.75"/>
<rect x="1663.7" y="194.3" width="13.8" height="16.01" fill="none" stroke="#fff" stroke-width="1.75"/>
<rect x="1606" y="205.3" width="13.8" height="16.01" fill="none" stroke="#fff" stroke-width="1.75"/>
<rect x="1554.1" y="212.8" width="13.8" height="16.01" fill="none" stroke="#fff" stroke-width="1.75"/>
<rect x="1498.1" y="224.1" width="13.8" height="16.01" fill="none" stroke="#fff" stroke-width="1.75"/>
<ellipse cx="1738.5" cy="190" rx="4.2" ry="4.9" fill="#c40000" stroke="#0a0a0a" stroke-width="1.5"/>
<ellipse cx="1670.6" cy="202.3" rx="4.2" ry="4.9" fill="#c43e3e" stroke="#0a0a0a" stroke-width="1.5"/>
<ellipse cx="1612.9" cy="212.3" rx="4.2" ry="4.9" fill="#c45a5a" stroke="#0a0a0a" stroke-width="1.5"/>
<ellipse cx="1561" cy="221.3" rx="4.2" ry="4.9" fill="#c47676" stroke="#0a0a0a" stroke-width="1.5"/>
<ellipse cx="1502.9" cy="230.8" rx="4.2" ry="4.9" fill="#c49696" stroke="#0a0a0a" stroke-width="1.5"/>
<rect x="1379.4" y="246.2" width="13.8" height="16.01" fill="none" stroke="#fff" stroke-width="1.75"/>
<rect x="1392.3" y="242.4" width="13.8" height="16.01" fill="none" stroke="#fff" stroke-width="1.75"/>
<rect x="1406" y="240.8" width="13.8" height="16.01" fill="none" stroke="#fff" stroke-width="1.75"/>
<rect x="1419.8" y="238.3" width="13.8" height="16.01" fill="none" stroke="#fff" stroke-width="1.75"/>
<rect x="1433.3" y="236.2" width="13.8" height="16.01" fill="none" stroke="#fff" stroke-width="1.75"/>
<ellipse cx="1386.3" cy="252.9" rx="4.2" ry="4.9" fill="#00c4c4" stroke="#0a0a0a" stroke-width="1.5"/>
<ellipse cx="1399.2" cy="249.4" rx="4.2" ry="4.9" fill="#3ec4c4" stroke="#0a0a0a" stroke-width="1.5"/>
<ellipse cx="1412.1" cy="247.9" rx="4.2" ry="4.9" fill="#5ac4c4" stroke="#0a0a0a" stroke-width="1.5"/>
<ellipse cx="1425.4" cy="244.8" rx="4.2" ry="4.9" fill="#76c4c4" stroke="#0a0a0a" stroke-width="1.5"/>
<ellipse cx="1439.6" cy="243.5" rx="4.2" ry="4.9" fill="#96c4c4" stroke="#0a0a0a" stroke-width="1.5"/>
<rect x="1464.1" y="252.4" width="13.8" height="16.01" fill="none" stroke="#fff" stroke-width="1.75"/>
<rect x="1484.4" y="274.5" width="13.8" height="16.01" fill="none" stroke="#fff" stroke-width="1.75"/>
<rect x="1504.8" y="298.3" width="13.8" height="16.01" fill="none" stroke="#fff" stroke-width="1.75"/>
<rect x="1532.5" y="328.2" width="13.8" height="16.01" fill="none" stroke="#fff" stroke-width="1.75"/>
<rect x="1567.1" y="364.5" width="13.8" height="16.01" fill="none" stroke="#fff" stroke-width="1.75"/>
<ellipse cx="1471.5" cy="259.4" rx="4.2" ry="4.9" fill="#c496c4" stroke="#0a0a0a" stroke-width="1.5"/>
<ellipse cx="1491.7" cy="281.3" rx="4.2" ry="4.9" fill="#c476c4" stroke="#0a0a0a" stroke-width="1.5"/>
<ellipse cx="1513" cy="305.2" rx="4.2" ry="4.9" fill="#c45ac4" stroke="#0a0a0a" stroke-width="1.5"/>
<ellipse cx="1539.4" cy="333.2" rx="4.2" ry="4.9" fill="#c43ec4" stroke="#0a0a0a" stroke-width="1.5"/>
<ellipse cx="1576.7" cy="371.3" rx="4.2" ry="4.9" fill="#c400c4" stroke="#0a0a0a" stroke-width="1.5"/>
<rect x="1442.9" y="268.7" width="13.8" height="16.01" fill="none" stroke="#fff" stroke-width="1.75"/>
<rect x="1440" y="311.2" width="13.8" height="16.01" fill="none" stroke="#fff" stroke-width="1.75"/>
<rect x="1435.9" y="363" width="13.8" height="16.01" fill="none" stroke="#fff" stroke-width="1.75"/>
<rect x="1429.7" y="428.9" width="13.8" height="16.01" fill="none" stroke="#fff" stroke-width="1.75"/>
<rect x="1421.4" y="528.2" width="13.8" height="16.01" fill="none" stroke="#fff" stroke-width="1.75"/>
<ellipse cx="1449.8" cy="276.7" rx="4.2" ry="4.9" fill="#9696c4" stroke="#0a0a0a" stroke-width="1.5"/>
<ellipse cx="1446.9" cy="319" rx="4.2" ry="4.9" fill="#7676c4" stroke="#0a0a0a" stroke-width="1.5"/>
<ellipse cx="1441" cy="369.6" rx="4.2" ry="4.9" fill="#5a5ac4" stroke="#0a0a0a" stroke-width="1.5"/>
<ellipse cx="1436.6" cy="435.7" rx="4.2" ry="4.9" fill="#3e3ec4" stroke="#0a0a0a" stroke-width="1.5"/>
<ellipse cx="1427.8" cy="537.5" rx="4.2" ry="4.9" fill="#0000c4" stroke="#0a0a0a" stroke-width="1.5"/>
<rect x="1445.5" y="233.98" width="14" height="16.24" fill="none" stroke="#0a0a0a" stroke-width="1.5"/>
<rect x="1446.3" y="235.9" width="12.4" height="12.4" fill="#f8f8f8" fill-opacity="0.55"/>
<ellipse cx="1451.8" cy="241.8" rx="4.2" ry="4.9" fill="#ffffff" stroke="#0a0a0a" stroke-width="1.5"/>
<rect x="1674.2" y="508.2" width="230.7" height="172.2" fill="#2e2e2e"/>
<rect x="816.9" y="737.9" width="21" height="31.7" fill="#000"/>
<text x="1014.2" y="760.3" font-size="17.4" fill="#fff" textLength="42.3" lengthAdjust="spacingAndGlyphs">20%</text>
<text x="1128.9" y="760.3" font-size="17.4" fill="#fff" textLength="42.3" lengthAdjust="spacingAndGlyphs">40%</text>
<text x="1243.8" y="760.3" font-size="17.4" fill="#fff" textLength="42.3" lengthAdjust="spacingAndGlyphs">60%</text>
<text x="1358.8" y="760.3" font-size="17.4" fill="#fff" textLength="42.3" lengthAdjust="spacingAndGlyphs">80%</text>
<text x="1473.8" y="760.3" font-size="17.4" fill="#fff" textLength="55" lengthAdjust="spacingAndGlyphs">100%</text>
<rect x="816.9" y="769.6" width="21" height="30.06" fill="#292929"/>
<rect x="837.9" y="769.6" width="743.8" height="30.06" fill="#404040"/>
<text x="844.3" y="791.9" font-size="19.8" fill="#f6f6f6" textLength="84" lengthAdjust="spacingAndGlyphs">x: CIE31</text>
<text x="1014.2" y="791.9" font-size="19.8" fill="#f6f6f6" textLength="72" lengthAdjust="spacingAndGlyphs">0.3359</text>
<text x="1128.9" y="791.9" font-size="19.8" fill="#f6f6f6" textLength="72" lengthAdjust="spacingAndGlyphs">0.3580</text>
<text x="1243.8" y="791.9" font-size="19.8" fill="#f6f6f6" textLength="72" lengthAdjust="spacingAndGlyphs">0.3790</text>
<text x="1358.8" y="791.9" font-size="19.8" fill="#f6f6f6" textLength="72" lengthAdjust="spacingAndGlyphs">0.3959</text>
<text x="1473.8" y="791.9" font-size="19.8" fill="#f6f6f6" textLength="72" lengthAdjust="spacingAndGlyphs">0.4191</text>
<rect x="816.9" y="799.46" width="21" height="30.06" fill="#262626"/>
<rect x="837.9" y="799.46" width="743.8" height="30.06" fill="#808080"/>
<text x="844.3" y="821.76" font-size="19.8" fill="#f0f0f0" textLength="84" lengthAdjust="spacingAndGlyphs">y: CIE31</text>
<text x="1014.2" y="821.76" font-size="19.8" fill="#f0f0f0" textLength="72" lengthAdjust="spacingAndGlyphs">0.3674</text>
<text x="1128.9" y="821.76" font-size="19.8" fill="#f0f0f0" textLength="72" lengthAdjust="spacingAndGlyphs">0.4036</text>
<text x="1243.8" y="821.76" font-size="19.8" fill="#f0f0f0" textLength="72" lengthAdjust="spacingAndGlyphs">0.4381</text>
<text x="1358.8" y="821.76" font-size="19.8" fill="#f0f0f0" textLength="72" lengthAdjust="spacingAndGlyphs">0.4682</text>
<text x="1473.8" y="821.76" font-size="19.8" fill="#f0f0f0" textLength="72" lengthAdjust="spacingAndGlyphs">0.5064</text>
<rect x="816.9" y="829.32" width="21" height="30.06" fill="#292929"/>
<rect x="837.9" y="829.32" width="743.8" height="30.06" fill="#404040"/>
<text x="844.3" y="851.62" font-size="19.8" fill="#f6f6f6" textLength="13" lengthAdjust="spacingAndGlyphs">Y</text>
<text x="1014.2" y="851.62" font-size="19.8" fill="#f6f6f6" textLength="98.5" lengthAdjust="spacingAndGlyphs">241.8533</text>
<text x="1128.9" y="851.62" font-size="19.8" fill="#f6f6f6" textLength="98.5" lengthAdjust="spacingAndGlyphs">238.2744</text>
<text x="1243.8" y="851.62" font-size="19.8" fill="#f6f6f6" textLength="98.5" lengthAdjust="spacingAndGlyphs">235.4943</text>
<text x="1358.8" y="851.62" font-size="19.8" fill="#f6f6f6" textLength="98.5" lengthAdjust="spacingAndGlyphs">232.8017</text>
<text x="1473.8" y="851.62" font-size="19.8" fill="#f6f6f6" textLength="98.5" lengthAdjust="spacingAndGlyphs">230.5274</text>
<rect x="816.9" y="859.18" width="21" height="30.06" fill="#262626"/>
<rect x="837.9" y="859.18" width="743.8" height="30.06" fill="#808080"/>
<text x="844.3" y="881.48" font-size="19.8" fill="#f0f0f0" textLength="151.5" lengthAdjust="spacingAndGlyphs">Target x:CIE31</text>
<text x="1014.2" y="881.48" font-size="19.8" fill="#f0f0f0" textLength="72" lengthAdjust="spacingAndGlyphs">0.3344</text>
<text x="1128.9" y="881.48" font-size="19.8" fill="#f0f0f0" textLength="72" lengthAdjust="spacingAndGlyphs">0.3564</text>
<text x="1243.8" y="881.48" font-size="19.8" fill="#f0f0f0" textLength="72" lengthAdjust="spacingAndGlyphs">0.3773</text>
<text x="1358.8" y="881.48" font-size="19.8" fill="#f0f0f0" textLength="72" lengthAdjust="spacingAndGlyphs">0.3969</text>
<text x="1473.8" y="881.48" font-size="19.8" fill="#f0f0f0" textLength="72" lengthAdjust="spacingAndGlyphs">0.4193</text>
<rect x="816.9" y="889.04" width="21" height="30.06" fill="#292929"/>
<rect x="837.9" y="889.04" width="743.8" height="30.06" fill="#404040"/>
<text x="844.3" y="911.34" font-size="19.8" fill="#f6f6f6" textLength="151.5" lengthAdjust="spacingAndGlyphs">Target y:CIE31</text>
<text x="1014.2" y="911.34" font-size="19.8" fill="#f6f6f6" textLength="72" lengthAdjust="spacingAndGlyphs">0.3648</text>
<text x="1128.9" y="911.34" font-size="19.8" fill="#f6f6f6" textLength="72" lengthAdjust="spacingAndGlyphs">0.4013</text>
<text x="1243.8" y="911.34" font-size="19.8" fill="#f6f6f6" textLength="72" lengthAdjust="spacingAndGlyphs">0.4358</text>
<text x="1358.8" y="911.34" font-size="19.8" fill="#f6f6f6" textLength="72" lengthAdjust="spacingAndGlyphs">0.4682</text>
<text x="1473.8" y="911.34" font-size="19.8" fill="#f6f6f6" textLength="72" lengthAdjust="spacingAndGlyphs">0.5053</text>
<rect x="816.9" y="918.9" width="21" height="30.06" fill="#262626"/>
<rect x="837.9" y="918.9" width="743.8" height="30.06" fill="#808080"/>
<text x="844.3" y="941.2" font-size="19.8" fill="#f0f0f0" textLength="88.5" lengthAdjust="spacingAndGlyphs">Target Y</text>
<text x="1014.2" y="941.2" font-size="19.8" fill="#f0f0f0" textLength="98.5" lengthAdjust="spacingAndGlyphs">241.8779</text>
<text x="1128.9" y="941.2" font-size="19.8" fill="#f0f0f0" textLength="98.5" lengthAdjust="spacingAndGlyphs">237.6323</text>
<text x="1243.8" y="941.2" font-size="19.8" fill="#f0f0f0" textLength="98.5" lengthAdjust="spacingAndGlyphs">234.3701</text>
<text x="1358.8" y="941.2" font-size="19.8" fill="#f0f0f0" textLength="98.5" lengthAdjust="spacingAndGlyphs">231.8099</text>
<text x="1473.8" y="941.2" font-size="19.8" fill="#f0f0f0" textLength="98.5" lengthAdjust="spacingAndGlyphs">229.3348</text>
<rect x="816.9" y="948.76" width="21" height="30.06" fill="#292929"/>
<rect x="837.9" y="948.76" width="743.8" height="30.06" fill="#404040"/>
<text x="844.3" y="971.06" font-size="19.8" fill="#f6f6f6" textLength="89" lengthAdjust="spacingAndGlyphs">ΔE 2000</text>
<text x="1014.2" y="971.06" font-size="19.8" fill="#f6f6f6" textLength="72" lengthAdjust="spacingAndGlyphs">0.6395</text>
<text x="1128.9" y="971.06" font-size="19.8" fill="#f6f6f6" textLength="72" lengthAdjust="spacingAndGlyphs">0.4276</text>
<text x="1243.8" y="971.06" font-size="19.8" fill="#f6f6f6" textLength="72" lengthAdjust="spacingAndGlyphs">0.4037</text>
<text x="1358.8" y="971.06" font-size="19.8" fill="#f6f6f6" textLength="72" lengthAdjust="spacingAndGlyphs">0.2385</text>
<text x="1473.8" y="971.06" font-size="19.8" fill="#f6f6f6" textLength="72" lengthAdjust="spacingAndGlyphs">0.2215</text>
<rect x="816.9" y="978.62" width="21" height="30.06" fill="#262626"/>
<rect x="837.9" y="978.62" width="743.8" height="30.06" fill="#808080"/>
<text x="844.3" y="1000.92" font-size="19.8" fill="#f0f0f0" textLength="60" lengthAdjust="spacingAndGlyphs">dEITP</text>
<text x="1014.2" y="1000.92" font-size="19.8" fill="#f0f0f0" textLength="72" lengthAdjust="spacingAndGlyphs">1.1545</text>
<text x="1128.9" y="1000.92" font-size="19.8" fill="#f0f0f0" textLength="72" lengthAdjust="spacingAndGlyphs">1.1854</text>
<text x="1243.8" y="1000.92" font-size="19.8" fill="#f0f0f0" textLength="72" lengthAdjust="spacingAndGlyphs">1.4248</text>
<text x="1358.8" y="1000.92" font-size="19.8" fill="#f0f0f0" textLength="72" lengthAdjust="spacingAndGlyphs">0.6155</text>
<text x="1473.8" y="1000.92" font-size="19.8" fill="#f0f0f0" textLength="72" lengthAdjust="spacingAndGlyphs">0.7843</text>
<rect x="151" y="1011.5" width="33.3" height="50" rx="3" fill="url(#gSw)" stroke="#2c2c2c" stroke-width="0.8"/>
<circle cx="167.4" cy="1017.8" r="5.2" fill="#6a6a6a"/><path d="M164.2 1019.2h6.4l-3.2-3.4z" fill="#1a1a1a"/>
<rect x="155" y="1031.3" width="26" height="22.4" rx="2" fill="#ffff00" stroke="#4a4a70" stroke-width="0.5"/>
<rect x="189" y="1011.5" width="112.4" height="50" rx="3" fill="url(#gSw)" stroke="#2a2a2a" stroke-width="0.8"/>
<rect x="193.4" y="1015.6" width="104.2" height="26.5" rx="2.2" fill="#c4c4a8" stroke="#8a8a6a" stroke-width="0.8"/>
<text x="245.2" y="1053.8" font-size="8.4" fill="#262626" text-anchor="middle" font-weight="bold" textLength="15.6" lengthAdjust="spacingAndGlyphs">20%</text>
<rect x="303" y="1011.5" width="112.4" height="50" rx="3" fill="url(#gSw)" stroke="#2a2a2a" stroke-width="0.8"/>
<rect x="307.4" y="1015.6" width="104.2" height="26.5" rx="2.2" fill="#c4c488" stroke="#8a8a6a" stroke-width="0.8"/>
<text x="359.2" y="1053.8" font-size="8.4" fill="#262626" text-anchor="middle" font-weight="bold" textLength="15.6" lengthAdjust="spacingAndGlyphs">40%</text>
<rect x="417" y="1011.5" width="112.4" height="50" rx="3" fill="url(#gSw)" stroke="#2a2a2a" stroke-width="0.8"/>
<rect x="421.4" y="1015.6" width="104.2" height="26.5" rx="2.2" fill="#c3c36a" stroke="#8a8a6a" stroke-width="0.8"/>
<text x="473.2" y="1053.8" font-size="8.4" fill="#262626" text-anchor="middle" font-weight="bold" textLength="15.6" lengthAdjust="spacingAndGlyphs">60%</text>
<rect x="531" y="1011.5" width="112.4" height="50" rx="3" fill="url(#gSw)" stroke="#2a2a2a" stroke-width="0.8"/>
<rect x="535.4" y="1015.6" width="104.2" height="26.5" rx="2.2" fill="#c3c34e" stroke="#8a8a6a" stroke-width="0.8"/>
<text x="587.2" y="1053.8" font-size="8.4" fill="#262626" text-anchor="middle" font-weight="bold" textLength="15.6" lengthAdjust="spacingAndGlyphs">80%</text>
<rect x="645" y="1011.5" width="112.4" height="50" rx="3" fill="url(#gSwSel)" stroke="#2a2a2a" stroke-width="0.8"/>
<rect x="649.4" y="1015.6" width="104.2" height="26.5" rx="2.2" fill="#c4c400" stroke="#5a5a00" stroke-width="0.8"/>
<text x="701.2" y="1053.8" font-size="8.4" fill="#fff" text-anchor="middle" font-weight="bold" textLength="20" lengthAdjust="spacingAndGlyphs">100%</text>
<rect x="1715" y="1012" width="168" height="22" fill="#5e5e5e"/>
<rect x="1715" y="1012" width="33" height="22" fill="#6a6a6a" stroke="#505050" stroke-width="0.6"/><circle cx="1731.5" cy="1022" r="6.6" fill="#7c7c7c"/>
<rect x="1748.7" y="1012" width="33" height="22" fill="#6a6a6a" stroke="#505050" stroke-width="0.6"/><circle cx="1765.2" cy="1022" r="6.6" fill="#7c7c7c"/>
<rect x="1782.4" y="1012" width="33" height="22" fill="#6a6a6a" stroke="#505050" stroke-width="0.6"/><circle cx="1798.9" cy="1022" r="6.6" fill="#7c7c7c"/>
<rect x="1816.1" y="1012" width="33" height="22" fill="#6a6a6a" stroke="#505050" stroke-width="0.6"/><circle cx="1832.6" cy="1022" r="6.6" fill="#7c7c7c"/>
<rect x="1849.8" y="1012" width="33" height="22" fill="#6a6a6a" stroke="#505050" stroke-width="0.6"/><circle cx="1866.3" cy="1022" r="6.6" fill="#7c7c7c"/>
<rect x="1678" y="1030" width="34" height="30" rx="3" fill="url(#gNav)" stroke="#444" stroke-width="0.6"/>
<rect x="1684.5" y="1031" width="21" height="21" rx="3" fill="#8a8a8a" stroke="#1a1a1a" stroke-width="1.3"/><rect x="1690.8" y="1037" width="9" height="9" fill="#000"/>
<rect x="1715.2" y="1035" width="101.4" height="26" rx="3" fill="url(#gNav)" stroke="#555" stroke-width="0.6"/>
<rect x="1817.2" y="1035" width="101.4" height="26" rx="3" fill="url(#gNav)" stroke="#555" stroke-width="0.6"/>
<circle cx="1737.6" cy="1045.8" r="7.2" fill="#a0a0a0"/><circle cx="1897.6" cy="1045.8" r="7.2" fill="#a0a0a0"/>
<text x="1737.6" y="1049.6" font-size="12" fill="#2a2a2a" text-anchor="middle" stroke="#2a2a2a" stroke-width="0.16">«</text>
<text x="1897.6" y="1049.6" font-size="12" fill="#2a2a2a" text-anchor="middle" stroke="#2a2a2a" stroke-width="0.16">»</text>
<text x="1757" y="1052.4" font-size="17.4" fill="#2a2a2a" textLength="39.5" lengthAdjust="spacingAndGlyphs" stroke="#2a2a2a" stroke-width="0.3">Back</text>
<text x="1837.5" y="1052.4" font-size="17.4" fill="#2a2a2a" textLength="39.5" lengthAdjust="spacingAndGlyphs" stroke="#2a2a2a" stroke-width="0.3">Next</text>
<g opacity="0.6" stroke-linejoin="round" stroke-linecap="round" fill="none"><path d="M1670 1026.3L1668.8 1006.3 1632.5 997.1 1633.3 1032.5 1656.7 1045 1697.5 1032.9 1674.2 1028.3" stroke="#f0f0f0" stroke-width="6"/><path d="M1670 1026.3L1640.4 1029.4" stroke="#f0f0f0" stroke-width="3.4"/><path d="M1670 1026.3L1668.8 1006.3 1632.5 997.1 1633.3 1032.5 1656.7 1045 1697.5 1032.9 1674.2 1028.3" stroke="#8e1f26" stroke-width="3.8"/><path d="M1670 1026.3L1640.4 1029.4" stroke="#8e1f26" stroke-width="1.6"/><path d="M1642.4 1009.8L1653.8 1024 1674 995.6" stroke="#f0f0f0" stroke-width="6.2"/><path d="M1642.4 1009.8L1653.8 1024 1674 995.6" stroke="#2c2c2c" stroke-width="3.8"/></g>
<g opacity="0.6" font-weight="bold" font-size="28.2" stroke-linejoin="round" paint-order="stroke"><text x="1675" y="1025.8" fill="#b02a34" stroke="#f2f2f2" stroke-width="2.6" textLength="149" lengthAdjust="spacingAndGlyphs">NOTEBOOK</text><text x="1824.5" y="1025.8" fill="#303030" stroke="#f2f2f2" stroke-width="2.4" font-weight="normal" textLength="88.5" lengthAdjust="spacingAndGlyphs">CHECK</text></g>
</svg>
<div class="cie" style="left:1677.4px;top:511.3px;width:224px;height:166px;"><i style="background:linear-gradient(90deg,#6a9900 0px,#999700 186px,#998d00 224px)"></i><i style="background:linear-gradient(90deg,#6a9900 0px,#999700 185px,#998d00 224px)"></i><i style="background:linear-gradient(90deg,#6a9900 0px,#999700 183px,#998c00 224px)"></i><i style="background:linear-gradient(90deg,#6b9900 0px,#999700 181px,#998c00 224px)"></i><i style="background:linear-gradient(90deg,#6b9900 0px,#999700 180px,#998c00 224px)"></i><i style="background:linear-gradient(90deg,#6c9900 0px,#999700 178px,#998b00 224px)"></i><i style="background:linear-gradient(90deg,#6c9900 0px,#999700 177px,#998b00 224px)"></i><i style="background:linear-gradient(90deg,#6c9900 0px,#999700 175px,#998a00 224px)"></i><i style="background:linear-gradient(90deg,#6d9900 0px,#999700 173px,#998a00 224px)"></i><i style="background:linear-gradient(90deg,#6d9900 0px,#999700 172px,#998900 224px)"></i><i style="background:linear-gradient(90deg,#6d9900 0px,#999700 170px,#998900 224px)"></i><i style="background:linear-gradient(90deg,#6e9901 0px,#999700 168px,#998900 224px)"></i><i style="background:linear-gradient(90deg,#6e9901 0px,#999700 167px,#980 224px)"></i><i style="background:linear-gradient(90deg,#6e9901 0px,#999700 165px,#980 224px)"></i><i style="background:linear-gradient(90deg,#6f9901 0px,#999700 163px,#998700 224px)"></i><i style="background:linear-gradient(90deg,#6f9901 0px,#999700 162px,#998700 224px)"></i><i style="background:linear-gradient(90deg,#6f9902 0px,#999700 160px,#998700 224px)"></i><i style="background:linear-gradient(90deg,#709902 0px,#999700 158px,#998600 224px)"></i><i style="background:linear-gradient(90deg,#709902 0px,#999700 157px,#998600 224px)"></i><i style="background:linear-gradient(90deg,#719902 0px,#999700 155px,#998500 224px)"></i><i style="background:linear-gradient(90deg,#719902 0px,#999700 154px,#998500 224px)"></i><i style="background:linear-gradient(90deg,#719903 0px,#999700 152px,#998500 224px)"></i><i style="background:linear-gradient(90deg,#729903 0px,#999700 150px,#998400 224px)"></i><i style="background:linear-gradient(90deg,#729903 0px,#999700 149px,#998400 224px)"></i><i style="background:linear-gradient(90deg,#729903 0px,#999700 147px,#998300 224px)"></i><i style="background:linear-gradient(90deg,#739903 0px,#999700 144px,#998300 224px)"></i><i style="background:linear-gradient(90deg,#739904 0px,#999800 139px,#998300 224px)"></i><i style="background:linear-gradient(90deg,#749904 0px,#999800 138px,#998200 224px)"></i><i style="background:linear-gradient(90deg,#749904 0px,#999800 137px,#998200 224px)"></i><i style="background:linear-gradient(90deg,#749904 0px,#999800 137px,#998100 224px)"></i><i style="background:linear-gradient(90deg,#759904 0px,#999700 137px,#998100 224px)"></i><i style="background:linear-gradient(90deg,#759905 0px,#999700 136px,#998100 224px)"></i><i style="background:linear-gradient(90deg,#769905 0px,#999700 134px,#998000 224px)"></i><i style="background:linear-gradient(90deg,#769905 0px,#999700 132px,#998000 224px)"></i><i style="background:linear-gradient(90deg,#769905 0px,#999700 131px,#997f00 224px)"></i><i style="background:linear-gradient(90deg,#779905 0px,#999700 129px,#997f00 224px)"></i><i style="background:linear-gradient(90deg,#779906 0px,#999700 127px,#997f00 224px)"></i><i style="background:linear-gradient(90deg,#779906 0px,#999700 126px,#997e00 224px)"></i><i style="background:linear-gradient(90deg,#789906 0px,#999700 124px,#997e00 224px)"></i><i style="background:linear-gradient(90deg,#789906 0px,#999700 122px,#997d00 224px)"></i><i style="background:linear-gradient(90deg,#799906 0px,#999700 121px,#997d00 224px)"></i><i style="background:linear-gradient(90deg,#799907 0px,#999700 119px,#997d00 224px)"></i><i style="background:linear-gradient(90deg,#799907 0px,#999700 117px,#997c00 224px)"></i><i style="background:linear-gradient(90deg,#7a9907 0px,#999700 116px,#997c00 224px)"></i><i style="background:linear-gradient(90deg,#7a9907 0px,#999701 114px,#997b00 224px)"></i><i style="background:linear-gradient(90deg,#7b9908 0px,#999701 113px,#997b00 224px)"></i><i style="background:linear-gradient(90deg,#7b9908 0px,#999701 111px,#997b00 224px)"></i><i style="background:linear-gradient(90deg,#7c9908 0px,#999701 109px,#997a00 224px)"></i><i style="background:linear-gradient(90deg,#7c9908 0px,#999702 108px,#997a00 224px)"></i><i style="background:linear-gradient(90deg,#7c9908 0px,#999702 106px,#997a00 224px)"></i><i style="background:linear-gradient(90deg,#7d9909 0px,#999702 104px,#997900 224px)"></i><i style="background:linear-gradient(90deg,#7d9909 0px,#999703 103px,#997900 224px)"></i><i style="background:linear-gradient(90deg,#7e9909 0px,#999703 101px,#997800 224px)"></i><i style="background:linear-gradient(90deg,#7e9909 0px,#999703 99px,#997800 224px)"></i><i style="background:linear-gradient(90deg,#7e990a 0px,#999704 98px,#997800 224px)"></i><i style="background:linear-gradient(90deg,#7f990a 0px,#999704 96px,#970 223px,#970 224px)"></i><i style="background:linear-gradient(90deg,#7f990a 0px,#999704 95px,#970 222px,#970 224px)"></i><i style="background:linear-gradient(90deg,#80990a 0px,#999705 93px,#970 222px,#970 224px)"></i><i style="background:linear-gradient(90deg,#80990b 0px,#999705 91px,#970 222px,#997600 224px)"></i><i style="background:linear-gradient(90deg,#81990b 0px,#999705 90px,#997600 224px)"></i><i style="background:linear-gradient(90deg,#81990b 0px,#999706 88px,#997500 224px)"></i><i style="background:linear-gradient(90deg,#81990b 0px,#999706 86px,#997500 224px)"></i><i style="background:linear-gradient(90deg,#82990b 0px,#999706 85px,#997500 224px)"></i><i style="background:linear-gradient(90deg,#82990c 0px,#999707 83px,#997400 224px)"></i><i style="background:linear-gradient(90deg,#83990c 0px,#999707 82px,#997400 224px)"></i><i style="background:linear-gradient(90deg,#83990c 0px,#999707 80px,#997400 224px)"></i><i style="background:linear-gradient(90deg,#84990c 0px,#999708 78px,#997300 224px)"></i><i style="background:linear-gradient(90deg,#84990d 0px,#999708 77px,#997300 224px)"></i><i style="background:linear-gradient(90deg,#85990d 0px,#999708 75px,#997200 224px)"></i><i style="background:linear-gradient(90deg,#85990d 0px,#999709 73px,#997200 224px)"></i><i style="background:linear-gradient(90deg,#85990d 0px,#999709 72px,#997200 224px)"></i><i style="background:linear-gradient(90deg,#86990e 0px,#999709 70px,#997200 222px,#997100 224px)"></i><i style="background:linear-gradient(90deg,#86990e 0px,#99970a 69px,#997200 221px,#997100 224px)"></i><i style="background:linear-gradient(90deg,#87990e 0px,#99970a 67px,#997200 218px,#997100 224px)"></i><i style="background:linear-gradient(90deg,#87990e 0px,#99970a 65px,#997200 216px,#997000 224px)"></i><i style="background:linear-gradient(90deg,#88990f 0px,#99970b 64px,#997201 215px,#997000 224px)"></i><i style="background:linear-gradient(90deg,#88990f 0px,#99970b 62px,#997201 213px,#997000 224px)"></i><i style="background:linear-gradient(90deg,#89990f 0px,#99970b 60px,#997201 210px,#996f01 224px)"></i><i style="background:linear-gradient(90deg,#89990f 0px,#99970c 59px,#997202 209px,#996f01 224px)"></i><i style="background:linear-gradient(90deg,#8a9910 0px,#99970c 57px,#997202 207px,#996e01 224px)"></i><i style="background:linear-gradient(90deg,#8a9910 0px,#99970c 56px,#997202 206px,#996e01 224px)"></i><i style="background:linear-gradient(90deg,#8b9910 0px,#99970d 54px,#997202 204px,#996e01 224px)"></i><i style="background:linear-gradient(90deg,#8b9910 0px,#99970d 52px,#997203 201px,#996d01 224px)"></i></div><div class="cie" style="left:1677.4px;top:511.3px;width:224px;height:166px;clip-path:polygon(0.0px 17.2px,224.0px 148.8px,224.0px 166.0px,0.0px 166.0px)"><i style="background:linear-gradient(90deg,#b0ff00 0px,#fffd00 183px,#ffeb00 224px)"></i><i style="background:linear-gradient(90deg,#b1ff00 0px,#fffd00 182px,#ffeb00 224px)"></i><i style="background:linear-gradient(90deg,#b1ff00 0px,#fffd00 180px,#ffea00 224px)"></i><i style="background:linear-gradient(90deg,#b2ff00 0px,#fffd00 178px,#ffe900 224px)"></i><i style="background:linear-gradient(90deg,#b3ff00 0px,#fffd00 177px,#ffe900 224px)"></i><i style="background:linear-gradient(90deg,#b3ff00 0px,#fffd00 175px,#ffe800 224px)"></i><i style="background:linear-gradient(90deg,#b4ff00 0px,#fffd00 173px,#ffe700 224px)"></i><i style="background:linear-gradient(90deg,#b4ff00 0px,#fffd00 172px,#ffe600 224px)"></i><i style="background:linear-gradient(90deg,#b5ff00 0px,#fffd00 170px,#ffe600 224px)"></i><i style="background:linear-gradient(90deg,#b6ff00 0px,#fffd00 169px,#ffe500 224px)"></i><i style="background:linear-gradient(90deg,#b6ff01 0px,#fffd00 167px,#ffe400 224px)"></i><i style="background:linear-gradient(90deg,#b7ff01 0px,#fffd00 165px,#ffe400 224px)"></i><i style="background:linear-gradient(90deg,#b7ff01 0px,#fffd00 164px,#ffe300 224px)"></i><i style="background:linear-gradient(90deg,#b8ff02 0px,#fffd00 162px,#ffe200 224px)"></i><i style="background:linear-gradient(90deg,#b9ff02 0px,#fffd00 160px,#ffe200 224px)"></i><i style="background:linear-gradient(90deg,#b9ff02 0px,#fffd00 159px,#ffe100 224px)"></i><i style="background:linear-gradient(90deg,#baff03 0px,#f1ff00 123px,#fffd00 158px,#ffe000 224px)"></i><i style="background:linear-gradient(90deg,#baff03 0px,#e7ff00 100px,#fffd00 156px,#ffe000 224px)"></i><i style="background:linear-gradient(90deg,#bbff03 0px,#e2ff00 89px,#fffd00 154px,#ffdf00 224px)"></i><i style="background:linear-gradient(90deg,#bcff04 0px,#e1ff00 85px,#fffd00 152px,#ffde00 224px)"></i><i style="background:linear-gradient(90deg,#bcff04 0px,#e2ff00 84px,#fffd00 151px,#ffde00 224px)"></i><i style="background:linear-gradient(90deg,#bdff04 0px,#e2ff00 83px,#fffd00 149px,#fd0 224px)"></i><i style="background:linear-gradient(90deg,#bdff05 0px,#e3ff00 84px,#fffd00 147px,#ffdc00 224px)"></i><i style="background:linear-gradient(90deg,#beff05 0px,#e5ff00 86px,#fffd00 146px,#ffdc00 224px)"></i><i style="background:linear-gradient(90deg,#bfff05 0px,#e6ff00 87px,#fffd00 144px,#ffdb00 224px)"></i><i style="background:linear-gradient(90deg,#bfff06 0px,#e8ff00 90px,#fffd00 143px,#ffda00 224px)"></i><i style="background:linear-gradient(90deg,#c0ff06 0px,#eaff00 92px,#fffd00 141px,#ffda00 224px)"></i><i style="background:linear-gradient(90deg,#c1ff06 0px,#ebff00 94px,#fffd00 139px,#ffd900 224px)"></i><i style="background:linear-gradient(90deg,#c1ff07 0px,#edff00 97px,#fffd00 138px,#ffd800 224px)"></i><i style="background:linear-gradient(90deg,#c2ff07 0px,#f0ff00 100px,#fffd00 136px,#ffd800 224px)"></i><i style="background:linear-gradient(90deg,#c3ff07 0px,#f2ff00 103px,#fffd00 135px,#ffd700 224px)"></i><i style="background:linear-gradient(90deg,#c3ff08 0px,#f4ff00 105px,#fffd00 133px,#ffd600 224px)"></i><i style="background:linear-gradient(90deg,#c4ff08 0px,#f6ff00 108px,#fffd00 132px,#ffd600 224px)"></i><i style="background:linear-gradient(90deg,#c4ff08 0px,#f8ff00 111px,#fffc00 131px,#ffd500 224px)"></i><i style="background:linear-gradient(90deg,#c5ff09 0px,#faff00 114px,#fffc00 131px,#ffd400 224px)"></i><i style="background:linear-gradient(90deg,#c6ff09 0px,#fcff00 117px,#fff500 144px,#ffd400 224px)"></i><i style="background:linear-gradient(90deg,#c6ff09 0px,#ff0 120px,#ffd300 224px)"></i><i style="background:linear-gradient(90deg,#c7ff0a 0px,#fffd00 123px,#ffd200 224px)"></i><i style="background:linear-gradient(90deg,#c8ff0a 0px,#fffd00 121px,#ffd200 224px)"></i><i style="background:linear-gradient(90deg,#c8ff0a 0px,#fffd00 119px,#ffd100 224px)"></i><i style="background:linear-gradient(90deg,#c9ff0b 0px,#fffd00 118px,#ffd000 224px)"></i><i style="background:linear-gradient(90deg,#caff0b 0px,#fffd00 116px,#ffd000 224px)"></i><i style="background:linear-gradient(90deg,#caff0c 0px,#fffd00 114px,#ffcf00 224px)"></i><i style="background:linear-gradient(90deg,#cbff0c 0px,#fffd01 113px,#ffce00 224px)"></i><i style="background:linear-gradient(90deg,#ccff0c 0px,#fffd01 111px,#ffce00 224px)"></i><i style="background:linear-gradient(90deg,#ccff0d 0px,#fffd02 110px,#ffcd00 224px)"></i><i style="background:linear-gradient(90deg,#cdff0d 0px,#fffd02 108px,#ffcd00 224px)"></i><i style="background:linear-gradient(90deg,#ceff0d 0px,#fffd03 106px,#ffd400 202px,#fc0 224px)"></i><i style="background:linear-gradient(90deg,#cfff0e 0px,#fffd03 105px,#ffd900 186px,#ffcb00 224px)"></i><i style="background:linear-gradient(90deg,#cfff0e 0px,#fffd04 103px,#ffdb00 179px,#ffcb00 224px)"></i><i style="background:linear-gradient(90deg,#d0ff0f 0px,#fffd04 101px,#ffdb00 178px,#ffca00 224px)"></i><i style="background:linear-gradient(90deg,#d1ff0f 0px,#fffd05 100px,#ffda00 178px,#ffc900 224px)"></i><i style="background:linear-gradient(90deg,#d1ff0f 0px,#fffd05 98px,#ffd900 179px,#ffc900 224px)"></i><i style="background:linear-gradient(90deg,#d2ff10 0px,#fffd06 96px,#ffd800 181px,#ffc800 224px)"></i><i style="background:linear-gradient(90deg,#d3ff10 0px,#fffd06 95px,#ffd600 183px,#ffc700 224px)"></i><i style="background:linear-gradient(90deg,#d3ff10 0px,#fffd07 93px,#ffd500 186px,#ffc700 224px)"></i><i style="background:linear-gradient(90deg,#d4ff11 0px,#fffd08 92px,#ffd300 188px,#ffc600 224px)"></i><i style="background:linear-gradient(90deg,#d5ff11 0px,#fffd08 90px,#ffd100 191px,#ffc600 224px)"></i><i style="background:linear-gradient(90deg,#d6ff12 0px,#fffd09 88px,#ffd000 194px,#ffc500 224px)"></i><i style="background:linear-gradient(90deg,#d6ff12 0px,#fffd09 87px,#ffce00 197px,#ffc400 224px)"></i><i style="background:linear-gradient(90deg,#d7ff12 0px,#fffd0a 85px,#fc0 199px,#ffc400 224px)"></i><i style="background:linear-gradient(90deg,#d8ff13 0px,#fffd0a 83px,#ffcd00 196px,#ffc300 224px)"></i><i style="background:linear-gradient(90deg,#d8ff13 0px,#fffd0b 82px,#fc0 196px,#ffc200 224px)"></i><i style="background:linear-gradient(90deg,#d9ff14 0px,#fffd0b 80px,#ffcd00 193px,#ffc200 224px)"></i><i style="background:linear-gradient(90deg,#daff14 0px,#fffd0c 78px,#ffcd00 191px,#ffc100 224px)"></i><i style="background:linear-gradient(90deg,#dbff14 0px,#fffd0d 77px,#fc0 190px,#ffc100 224px)"></i><i style="background:linear-gradient(90deg,#dbff15 0px,#fffd0d 75px,#ffcd01 188px,#ffc000 224px)"></i><i style="background:linear-gradient(90deg,#dcff15 0px,#fffd0e 74px,#ffcc01 187px,#ffbf00 224px)"></i><i style="background:linear-gradient(90deg,#ddff16 0px,#fffd0e 72px,#ffcc02 185px,#ffbf00 224px)"></i><i style="background:linear-gradient(90deg,#deff16 0px,#fffd0f 70px,#ffcd02 182px,#ffbe00 224px)"></i><i style="background:linear-gradient(90deg,#deff16 0px,#fffd0f 69px,#ffcc03 181px,#ffbe00 224px)"></i><i style="background:linear-gradient(90deg,#dfff17 0px,#fffd10 67px,#ffcd03 179px,#ffbd00 224px)"></i><i style="background:linear-gradient(90deg,#e0ff17 0px,#fffd11 65px,#ffcd04 177px,#ffbc00 224px)"></i><i style="background:linear-gradient(90deg,#e1ff18 0px,#fffd11 64px,#ffcc04 176px,#ffbc00 224px)"></i><i style="background:linear-gradient(90deg,#e1ff18 0px,#fffd12 62px,#ffcc05 174px,#fb0 224px)"></i><i style="background:linear-gradient(90deg,#e2ff18 0px,#fffd12 60px,#ffcd05 171px,#ffba00 224px)"></i><i style="background:linear-gradient(90deg,#e3ff19 0px,#fffd13 59px,#ffcd06 170px,#ffba01 224px)"></i><i style="background:linear-gradient(90deg,#e4ff19 0px,#fffd13 57px,#ffcd06 168px,#ffb901 224px)"></i><i style="background:linear-gradient(90deg,#e5ff1a 0px,#fffd14 56px,#ffcc07 167px,#ffb901 224px)"></i><i style="background:linear-gradient(90deg,#e5ff1a 0px,#fffd15 54px,#ffcc07 165px,#ffb801 224px)"></i><i style="background:linear-gradient(90deg,#e6ff1a 0px,#fffd15 52px,#ffcc08 163px,#ffb702 224px)"></i><i style="background:linear-gradient(90deg,#e7ff1b 0px,#fffd16 51px,#ffcc08 162px,#ffb702 224px)"></i><i style="background:linear-gradient(90deg,#e8ff1b 0px,#fffd16 49px,#ffcd09 159px,#ffb602 224px)"></i></div>
<svg class="ov" width="1920" height="1058" viewBox="0 0 1920 1058">
<rect x="1677.4" y="511.3" width="224.3" height="165.9" fill="none" stroke="#9a9a9a" stroke-width="1.4"/>
<rect x="1781.3" y="585" width="13.8" height="16" fill="none" stroke="#fff" stroke-width="1.6"/>
<ellipse cx="1787.2" cy="590.3" rx="4.2" ry="4.9" fill="#c4c400" stroke="#0a0a0a" stroke-width="1.5"/>
</svg>
</body></html>
